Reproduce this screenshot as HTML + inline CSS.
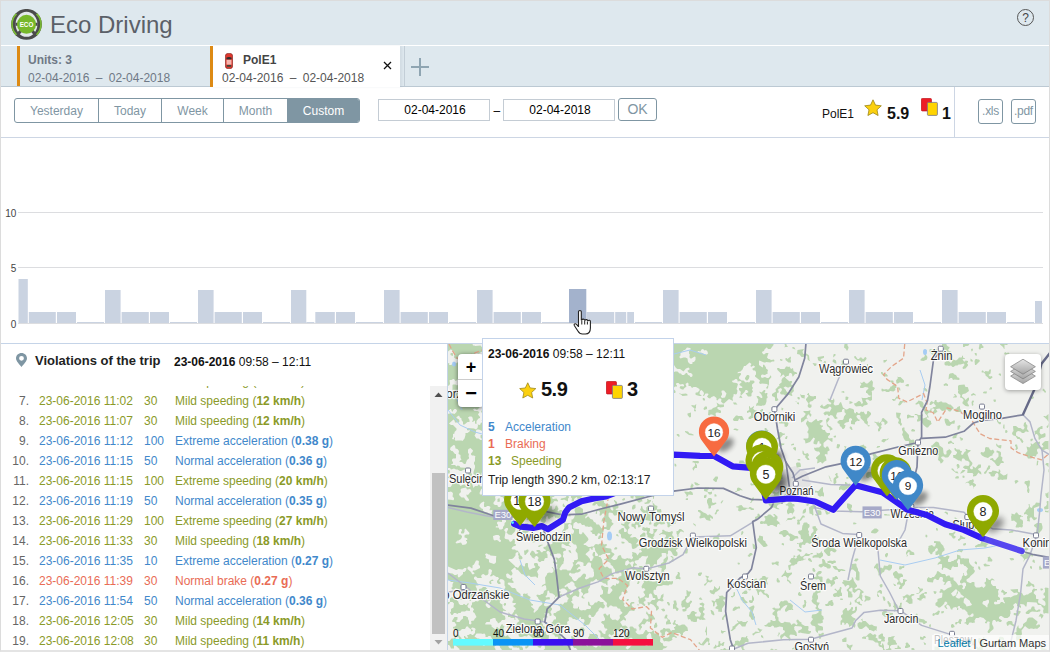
<!DOCTYPE html>
<html lang="en">
<head>
<meta charset="utf-8">
<title>Eco Driving</title>
<style>
*{box-sizing:border-box;margin:0;padding:0}
html,body{width:1050px;height:652px;overflow:hidden;background:#fff}
body{font-family:"Liberation Sans",sans-serif;font-size:12px;color:#000;position:relative}
.abs{position:absolute}
#frame{position:absolute;left:0;top:0;width:1050px;height:652px;border:1px solid #dcdcdc;border-bottom:2px solid #e4e4e4;pointer-events:none;z-index:50}
#header{position:absolute;left:0;top:0;width:1050px;height:45px;background:#dee8ee}
#title{position:absolute;left:50px;top:11px;font-size:24px;line-height:28px;color:#5b6068;white-space:nowrap}
#help{position:absolute;left:1017px;top:9px;width:17px;height:17px;border:1px solid #555;border-radius:50%;font-size:12px;line-height:16.500px;text-align:center;color:#444}
#tabs{position:absolute;left:0;top:46px;width:1050px;height:40px;background:#dee8ee;z-index:2}
#tabline{position:absolute;left:0;top:86px;width:1050px;height:1px;background:#bcc9d3}
.tab{position:absolute;top:0;height:41px;border-left:3px solid #dd8a14;white-space:nowrap}
.tab .l1{position:absolute;top:7px;font-weight:bold;font-size:12px;line-height:14px}
.tab .l2{position:absolute;top:25px;font-size:12px;line-height:14px;word-spacing:3px}
#tab1{left:17px;width:192px;height:40px;color:#6f7986}
#tab2{left:210px;width:190px;background:#fff;color:#555;box-shadow:2px 0 2px rgba(120,140,160,.12)}
#periods{position:absolute;left:14px;top:98px;height:25px;width:346px;border:1px solid #7f96a3;border-radius:3px;overflow:hidden;background:#fff}
#periods div{position:absolute;top:0;height:23px;line-height:25px;text-align:center;color:#7f96a3;border-left:1px solid #7f96a3;font-size:12px}
#periods div:first-child{border-left:0}
#periods .on{background:#7f96a3;color:#fff}
.inp{position:absolute;top:99px;height:22px;border:1px solid #c4ccd4;background:#fff;text-align:center;padding-left:2px;line-height:20px;font-size:12px;color:#000}
.btn{position:absolute;border:1px solid #7f96a3;border-radius:3px;color:#7f96a3;text-align:center;background:#fff}
.hl{position:absolute;height:1px;background:#cdd6e4}
.vr{position:absolute;left:0;width:430px;height:20px;line-height:20px;font-size:12px;white-space:nowrap}
.vr span{position:absolute;top:0}
.vr .n{left:0;width:29px;text-align:right;color:#666}
.vr .d{left:39px}.vr .p{left:144px}.vr .t{left:175px}
.vr.g{color:#8a9a28}.vr.b{color:#4188cb}.vr.r{color:#e96c55}
</style>
</head>
<body>
<div id="header">
  <svg class="abs" style="left:11px;top:9px" width="32" height="32" viewBox="0 0 32 32">
    <circle cx="15.5" cy="15.35" r="15.4" fill="#4b4b4b"/>
    <path d="M25.57 4.92A14.5 14.5 0 0 1 25.57 25.78M5.43 25.78A14.5 14.5 0 0 1 5.43 4.92" fill="none" stroke="#7aba35" stroke-width="1.700"/>
    <ellipse cx="15.5" cy="15.35" rx="10.9" ry="12.5" fill="#e3e8ea"/>
    <path d="M4.5 15.35H26.5M15.5 15.35L23.70 24.78M15.5 15.35L7.30 24.78" stroke="#4b4b4b" stroke-width="3" fill="none"/>
    <circle cx="15.5" cy="15.35" r="9.5" fill="#77b82a"/>
    <text x="15.5" y="17.75" font-size="6.300" font-weight="bold" fill="#fff" text-anchor="middle" font-family="Liberation Sans, sans-serif">ECO</text>
  </svg>
  <div id="title">Eco Driving</div>
  <div id="help">?</div>
</div>
<div class="abs" style="left:0;top:45px;width:1050px;height:1px;background:#fff"></div>
<div id="tabs">
  <div class="tab" id="tab1"><span class="l1" style="left:8px">Units: 3</span><span class="l2" style="left:8px">02-04-2016 – 02-04-2018</span></div>
  <div class="tab" id="tab2">
    <svg class="abs" style="left:12px;top:7px" width="8" height="16" viewBox="0 0 8 16">
      <rect x=".4" y=".4" width="7.200" height="15.200" rx="2.600" fill="#e0382e" stroke="#8c2a24" stroke-width=".7"/>
      <path d="M1.300 4.800Q4 3 6.700 4.800L6.300 6.600H1.700z" fill="#2e2e2e"/>
      <rect x="1.500" y="6.800" width="5" height="4.800" fill="#f6b6ae"/>
      <rect x="1.700" y="12" width="4.600" height="1.800" rx=".6" fill="#3c4a3c"/>
    </svg>
    <span class="l1" style="left:30px;color:#444">PolE1</span><span class="l2" style="left:9px">02-04-2016 – 02-04-2018</span>
    <svg class="abs" style="left:170px;top:15px" width="9" height="9" viewBox="0 0 9 9"><path d="M1 1L8 8M8 1L1 8" stroke="#111" stroke-width="1.300"/></svg>
  </div>
  <div class="abs" style="left:404px;top:0;width:1px;height:40px;background:#c3ced7"></div><svg class="abs" style="left:410px;top:11px" width="20" height="20" viewBox="0 0 20 20"><path d="M10 1V19M1 10H19" stroke="#8fa5b2" stroke-width="2"/></svg>
</div>
<div id="tabline"></div>

<div id="periods">
  <div style="left:0;width:83px">Yesterday</div>
  <div style="left:83px;width:63px">Today</div>
  <div style="left:146px;width:62px">Week</div>
  <div style="left:208px;width:64px">Month</div>
  <div class="on" style="left:272px;width:72px">Custom</div>
</div>
<div class="inp" style="left:378px;width:112px">02-04-2016</div>
<div class="abs" style="left:493.500px;top:104px;font-size:12px;line-height:14px">–</div>
<div class="inp" style="left:503px;width:112px">02-04-2018</div>
<div class="btn" style="left:618px;top:98px;width:39px;height:23px;line-height:21px;font-size:14px">OK</div>

<div class="abs" style="left:822px;top:107px;line-height:14px;font-size:12px;color:#111">PolE1</div>
<svg class="abs" style="left:864px;top:99px" width="18" height="17" viewBox="0 0 18 17"><path d="M9 .8l2.5 5.3 5.8.7-4.3 4 1.1 5.7L9 13.7 3.9 16.5 5 10.8.7 6.800l5.800-.7z" fill="#fbd00f" stroke="#9c8618" stroke-width=".8" stroke-linejoin="round"/></svg>
<div class="abs" style="left:887px;top:105px;font-size:16px;line-height:18px;font-weight:bold;color:#111">5.9</div>
<svg class="abs" style="left:921px;top:98px" width="17" height="18" viewBox="0 0 17 18"><rect x=".4" y=".4" width="10" height="12.500" rx="1" fill="#ee1c25" stroke="#c0151d" stroke-width=".8"/><rect x="6.400" y="4.400" width="10" height="13" rx="1" fill="#ffd400" stroke="#77778a" stroke-width=".8"/></svg>
<div class="abs" style="left:942px;top:105px;font-size:16px;line-height:18px;font-weight:bold;color:#111">1</div>
<div class="abs" style="left:954px;top:87px;width:1px;height:50px;background:#cdd6e4"></div>
<div class="btn" style="left:978px;top:99px;width:25px;height:25px;line-height:22px;font-size:12px;letter-spacing:-.3px">.xls</div>
<div class="btn" style="left:1011px;top:99px;width:25px;height:25px;line-height:22px;font-size:12px;letter-spacing:-.3px">.pdf</div>
<div class="hl" style="left:0;top:137px;width:1050px"></div>

<svg class="abs" style="left:0;top:138px" width="1050" height="205" viewBox="0 138 1050 205">
<g stroke="#dcdde0" stroke-width="1"><path d="M18 212.500H1043M18 267.500H1043M18 323.500H1043"/></g>
<g font-family="Liberation Sans, sans-serif" font-size="10" fill="#444"><text x="16.400" y="216.600" text-anchor="end">10</text><text x="16.400" y="271.600" text-anchor="end">5</text><text x="16.400" y="327.600" text-anchor="end">0</text></g>
<rect x="18.5" y="279" width="9.3" height="44" fill="#cad3e1"/>
<rect x="28.8" y="312" width="26.999999999999996" height="11" fill="#cad3e1"/>
<rect x="57" y="312" width="19" height="11" fill="#cad3e1"/>
<rect x="77" y="322" width="27" height="1" fill="#cad3e1"/>
<rect x="105" y="290" width="15.599999999999994" height="33" fill="#cad3e1"/>
<rect x="121.6" y="312" width="27.200000000000017" height="11" fill="#cad3e1"/>
<rect x="150" y="312" width="19" height="11" fill="#cad3e1"/>
<rect x="170" y="322" width="27" height="1" fill="#cad3e1"/>
<rect x="198" y="290" width="15.599999999999994" height="33" fill="#cad3e1"/>
<rect x="214.6" y="312" width="27.200000000000017" height="11" fill="#cad3e1"/>
<rect x="243" y="312" width="19" height="11" fill="#cad3e1"/>
<rect x="263" y="322" width="27" height="1" fill="#cad3e1"/>
<rect x="291" y="290" width="15.3" height="33" fill="#cad3e1"/>
<rect x="306.3" y="322" width="8" height="1" fill="#cad3e1"/>
<rect x="315.300" y="312" width="19.500" height="11" fill="#cad3e1"/>
<rect x="336" y="312" width="19" height="11" fill="#cad3e1"/>
<rect x="356" y="322" width="27" height="1" fill="#cad3e1"/>
<rect x="384" y="290" width="15.600000000000023" height="33" fill="#cad3e1"/>
<rect x="400.6" y="312" width="27.19999999999999" height="11" fill="#cad3e1"/>
<rect x="429" y="312" width="19" height="11" fill="#cad3e1"/>
<rect x="449" y="322" width="27" height="1" fill="#cad3e1"/>
<rect x="477" y="290" width="15.600000000000023" height="33" fill="#cad3e1"/>
<rect x="493.6" y="312" width="27.199999999999932" height="11" fill="#cad3e1"/>
<rect x="522" y="312" width="19" height="11" fill="#cad3e1"/>
<rect x="542" y="322" width="27" height="1" fill="#cad3e1"/>
<rect x="569" y="289" width="17.299999999999955" height="34" fill="#a3b2cc"/>
<rect x="586.3" y="312" width="27.90000000000009" height="11" fill="#cad3e1"/>
<rect x="615.2" y="312" width="11.0" height="11" fill="#cad3e1"/>
<rect x="627.2" y="312" width="6.7999999999999545" height="11" fill="#cad3e1"/>
<rect x="635" y="322" width="27" height="1" fill="#cad3e1"/>
<rect x="663" y="290" width="15.600000000000023" height="33" fill="#cad3e1"/>
<rect x="679.6" y="312" width="27.199999999999932" height="11" fill="#cad3e1"/>
<rect x="708" y="312" width="19" height="11" fill="#cad3e1"/>
<rect x="728" y="322" width="27" height="1" fill="#cad3e1"/>
<rect x="756" y="290" width="15.600000000000023" height="33" fill="#cad3e1"/>
<rect x="772.6" y="312" width="27.199999999999932" height="11" fill="#cad3e1"/>
<rect x="801" y="312" width="19" height="11" fill="#cad3e1"/>
<rect x="821" y="322" width="27" height="1" fill="#cad3e1"/>
<rect x="849" y="290" width="15.600000000000023" height="33" fill="#cad3e1"/>
<rect x="865.6" y="312" width="27.199999999999932" height="11" fill="#cad3e1"/>
<rect x="894" y="312" width="19" height="11" fill="#cad3e1"/>
<rect x="914" y="322" width="27" height="1" fill="#cad3e1"/>
<rect x="942" y="290" width="15.600000000000023" height="33" fill="#cad3e1"/>
<rect x="958.6" y="312" width="27.199999999999932" height="11" fill="#cad3e1"/>
<rect x="987" y="312" width="19" height="11" fill="#cad3e1"/>
<rect x="1007" y="322" width="27" height="1" fill="#cad3e1"/>
<rect x="1035" y="301" width="7" height="22" fill="#cad3e1"/>
</svg>
<div class="hl" style="left:0;top:343px;width:1050px;background:#c5d4e8"></div>
<svg class="abs" style="left:572px;top:309px;z-index:40" width="22" height="28" viewBox="0 0 22 28"><path d="M6.500 2.500c0-1.300 2.800-1.300 2.800 0v8.500l.6 0c.2-1.300 2.600-1.200 2.700.2l.5.100c.4-1.100 2.500-.9 2.600.4l.4.100c.5-.9 2.300-.6 2.300.7v6.500c0 3-1.500 6-5 6h-3c-2.200 0-3.500-1.200-4.500-3l-3.600-5.500c-.8-1.300 1-2.400 2-1.300l2.200 2.300z" fill="#fff" stroke="#222" stroke-width="1.100" stroke-linejoin="round"/><path d="M9.800 11.500v4M12.700 11.800v3.700M15.400 12.500v3" stroke="#222" stroke-width="1"/></svg>

<div class="abs" style="left:0;top:344px;width:447px;height:308px;background:#fff;overflow:hidden">
<svg class="abs" style="left:16px;top:9px" width="11" height="14" viewBox="0 0 11 14"><path d="M5.500 0C2.400 0 0 2.400 0 5.300c0 3.200 3.600 6.200 5.500 8.700 1.900-2.500 5.500-5.500 5.500-8.700C11 2.400 8.600 0 5.500 0zm0 2.900a2.400 2.400 0 1 1 0 4.800 2.400 2.400 0 0 1 0-4.800z" fill="#7f96a3" fill-rule="evenodd"/></svg>
<div class="abs" style="left:35px;top:9px;font-size:13px;line-height:15px;font-weight:bold;color:#222;white-space:nowrap">Violations of the trip</div>
<div class="abs" style="left:174px;top:11px;font-size:12px;line-height:14px;color:#111;white-space:nowrap"><b>23-06-2016</b> 09:58 – 12:11</div>
<div class="abs" id="rows" style="left:0;top:42px;width:430px;height:266px;overflow:hidden">
<div class="vr g" style="top:-15px"><span class="n">6.</span><span class="d">23-06-2016 10:57</span><span class="p">30</span><span class="t">Mild speeding (<b>12 km/h</b>)</span></div>
<div class="vr g" style="top:5px"><span class="n">7.</span><span class="d">23-06-2016 11:02</span><span class="p">30</span><span class="t">Mild speeding (<b>12 km/h</b>)</span></div>
<div class="vr g" style="top:25px"><span class="n">8.</span><span class="d">23-06-2016 11:07</span><span class="p">30</span><span class="t">Mild speeding (<b>12 km/h</b>)</span></div>
<div class="vr b" style="top:45px"><span class="n">9.</span><span class="d">23-06-2016 11:12</span><span class="p">100</span><span class="t">Extreme acceleration (<b>0.38 g</b>)</span></div>
<div class="vr b" style="top:65px"><span class="n">10.</span><span class="d">23-06-2016 11:15</span><span class="p">50</span><span class="t">Normal acceleration (<b>0.36 g</b>)</span></div>
<div class="vr g" style="top:85px"><span class="n">11.</span><span class="d">23-06-2016 11:15</span><span class="p">100</span><span class="t">Extreme speeding (<b>20 km/h</b>)</span></div>
<div class="vr b" style="top:105px"><span class="n">12.</span><span class="d">23-06-2016 11:19</span><span class="p">50</span><span class="t">Normal acceleration (<b>0.35 g</b>)</span></div>
<div class="vr g" style="top:125px"><span class="n">13.</span><span class="d">23-06-2016 11:29</span><span class="p">100</span><span class="t">Extreme speeding (<b>27 km/h</b>)</span></div>
<div class="vr g" style="top:145px"><span class="n">14.</span><span class="d">23-06-2016 11:33</span><span class="p">30</span><span class="t">Mild speeding (<b>18 km/h</b>)</span></div>
<div class="vr b" style="top:165px"><span class="n">15.</span><span class="d">23-06-2016 11:35</span><span class="p">10</span><span class="t">Extreme acceleration (<b>0.27 g</b>)</span></div>
<div class="vr r" style="top:185px"><span class="n">16.</span><span class="d">23-06-2016 11:39</span><span class="p">30</span><span class="t">Normal brake (<b>0.27 g</b>)</span></div>
<div class="vr b" style="top:205px"><span class="n">17.</span><span class="d">23-06-2016 11:54</span><span class="p">50</span><span class="t">Normal acceleration (<b>0.36 g</b>)</span></div>
<div class="vr g" style="top:225px"><span class="n">18.</span><span class="d">23-06-2016 12:05</span><span class="p">30</span><span class="t">Mild speeding (<b>14 km/h</b>)</span></div>
<div class="vr g" style="top:245px"><span class="n">19.</span><span class="d">23-06-2016 12:08</span><span class="p">30</span><span class="t">Mild speeding (<b>11 km/h</b>)</span></div>
</div>
<div class="abs" style="left:430px;top:42px;width:17px;height:266px;background:#f1f1f1"></div>
<div class="abs" style="left:432px;top:129px;width:13px;height:161px;background:#c1c1c1"></div>
<svg class="abs" style="left:434px;top:48px" width="9" height="6" viewBox="0 0 9 6"><path d="M4.500 0.500L8.500 5H.5z" fill="#505050"/></svg>
<svg class="abs" style="left:434px;top:295px" width="9" height="6" viewBox="0 0 9 6"><path d="M4.500 5.500L8.500 1H.5z" fill="#a3a3a3"/></svg>
</div>
<div class="abs" style="left:447px;top:344px;width:1px;height:308px;background:#c5d4e8"></div>
<!--MAP-START-->
<svg class="abs" style="left:448px;top:344px" width="601" height="307" viewBox="448 344 601 307">
<defs><filter id="sh" x="-50%" y="-50%" width="200%" height="200%"><feGaussianBlur stdDeviation="3"/></filter><g id="pin"><path d="M0 0.300Q-1.200 -0.400 -12.550 -15.900A16 16 0 1 1 12.550 -15.900Q1.200 -0.400 0 0.300z"/></g></defs>
<rect x="448" y="344" width="601" height="307" fill="#f0f1ee"/>
<path d="M783 470l12-4 12 6 4 12-6 12-14 2-10-8-2-12z" fill="#e3e3e3"/>
<path d="M1029.5 648.5l0.5 2l2.5 0l0 -2zM967 650l0 0.5l5.5 0l-1 -1l-1 0l-1.5 -1zM770.5 649l0 1.5l7 0l0 -0.5l-1.5 -1l-2 1l-2 -1.5zM911.5 648l0 2.5l3 0l0 -1.5l-1 -1zM720.5 649l0 1.5l9.5 0l0 -1l-3.5 0l-1.5 -1.5l-1 0l-1 1.5zM792 648.5l0 1l2 -0.5l1 1.5l5 0l0 -0.5l-3 -2l-2.5 -1zM1040.5 646.5l0 2l1.5 2l5 0l0 -1l-2 -1l-1.5 0l-2 -2zM934.5 646.5l0 4l4.5 0l0.5 -0.5l0 -1.5l-1.5 -1.5zM1026 645.5l-1.5 0l-1 1l0 1.5l0.5 0.5l1.5 -0.5zM894.5 648l0.5 1l5.5 0l0.5 -0.5l0 -1l-1 0l-1.5 -2l-1 0l0 2l-0.5 0.5zM537.5 646.5l0 0.5l3 1l1.5 -2.5l-2.5 0zM528.5 645l-1 0l-1 1.5l-1.5 0l0.5 2l1 0l2 -1.5zM819 644.5l-0.5 2l1 1l2.5 0l1 0.5l0 -1l-1.5 -2zM846.5 643.5l0.5 3.5l2.5 2l0.5 1.5l1 0l0 -2.5l1.5 -2l0 -1.5l-3 1zM907.5 642.5l-1 0l-1 1l0.5 1.5l-1 1.5l0 1.5l2 0l3 -1l0 -2l-0.5 0zM923.5 642l1 3l1 0l0.5 -1.5zM724.5 642l-1 0l-2.5 2l-1 -1.5l0.5 -1l-1.5 -0.5l-0.5 0.5l0 3l-1.5 2l-1 -1.5l-1 -0.5l0 1.5l-1.5 1.5l0 1l2 0l1.5 -1.5l2.5 0l1.5 -2l1.5 1l1 0zM523 641l-3 1l0 1l2.5 0l0.5 -0.5zM976 640l-1.5 0l-1 1l-1 -2.5l-2.5 0l-1 1l-3.5 -0.5l0 1.5l-2 1l-3.5 0l-2 -1.5l-2 0l-0.5 0.5l-1.5 0l-0.5 0.5l0 1.5l1 1l2 0l0.5 -0.5l1.5 0.5l1.5 2.5l3.5 -0.5l1 1l5.5 0l1.5 -1l1 0l1.5 -1.5l0 -1.5zM948.5 638l-1 1.5l1 1l1 0l0.5 -0.5l0 -1.5zM809 641l3 -0.5l0.5 -1l-1.5 -1.5l-1.5 0zM631 637.5l1 0.5l1.5 2l1.5 0.5l1 1.5l-2 2.5l-3.5 1.5l0 1l-3 2.5l-2 -1.5l2 -2.5l2 0l0.5 -0.5l-0.5 -4l1 -0.5l0 -0.5l-1 -0.5l-0.5 -1zM846.5 637.5l-1.5 0l-3 2l0.5 2.5l3.5 0l0.5 -0.5zM709.5 639l-1 -1l-2 -0.5l-5 6.5l-0.5 0l-1.5 -2l-1 0.5l0 1l2 1.5l3 0.5l3.5 -4l1 0l0.5 0.5l-0.5 3l1.5 0l0.5 -0.5l0 -1l-1 -1zM984 637l-1 0l0 2l-0.5 0.5l-2.5 -1.5l-1.5 0l-0.5 3.5l0.5 1l1.5 1l0.5 2l-2 2.5l-1.5 -1.5l-1 0.5l0 1l1 1l0 1.5l5.5 0l0.5 -1l-0.5 -2l2 -1.5l0 -1.5l-0.5 -0.5l0.5 -2l-1.5 -2l1.5 -1l0 -1.5zM994.5 642.5l0 1.5l1 1.5l1 0l1 -2l0.5 0.5l0 1l1 1.5l0 4l11 0l-1.5 -1.5l-1.5 0l-0.5 0.5l-1 -0.5l0 -1l-1.5 -2l0 -1l1.5 -1l0.5 -1l-5 0l-3 1l-0.5 -0.5l3 -3.5l1 -0.5l2.5 0.5l0 -1.5l-1 -1.5l-1.5 0l-0.5 -0.5l-2 1l0 2.5l-1.5 1l-1.5 0zM925 636l-1.5 0l-0.5 1.5l-2.5 -1l-0.5 0.5l0 1.5l0.5 1l3 0.5l0 -1l1 -1l1.5 0zM747.5 636l-1 0l-1 1.5l-3.5 -0.5l-1 1l0 1.5l-1.5 2l-1.5 -1l-3 0.5l0 2.5l-2 1.5l0 2.5l2 -0.5l0.5 -1.5l1.5 -0.5l2 2l2 0l1.5 3.5l3 0l-2 -2l0 -2.5l1.5 -3.5l1 -0.5l2.5 0l0 -2.5l-1.5 -2zM761.5 635l-0.5 0.5l0 1.5l2.5 1.5l-0.5 -2.5zM474.5 636.5l2 -3l5 0l0.5 0.5l2.5 -0.5l1 1.5l0 2l2 0l1 -1l2 0l2 3.5l-3.5 1l-1 1l0 1l-1 1l-1.5 0l-0.5 2l-1.5 0.5l-1 -1l1 -2l-0.5 -4l-2.5 0.5l-1.5 -1l-1.5 0zM589.5 633.5l0 2l-1.5 2.5l0.5 1l2 0l0.5 0.5l0 2l0.5 0.5l1 0l1.5 -2.5l3.5 0l0.5 -4l-1.5 -1.5l-6 0zM862 637.5l0 1l4 0.5l0 -2l1.5 -0.5l1 1l0 2.5l4.5 0.5l2.5 2l2 0l1 1l0 2l1.5 1.5l1.5 0l1.5 1.5l0 1.5l-0.5 0.5l8.5 0l0.5 -1.5l-1.5 -1l0 -1.5l1.5 -1.5l5.5 -0.5l0 -1l-1 -1l-0.5 -2l-2 -1l0 -1.5l1.5 -2l-3.5 0.5l-0.5 0.5l-2.5 0l-0.5 1.5l0 2l0.5 0.5l-1 2l0 1.5l1.5 1l0 2.5l-1.5 1l-1 0l-1 1l-0.5 0l-1 -1.5l0 -2.5l-1 -2.5l-1 0l0 1.5l-0.5 0.5l-1.5 -1l1 -1l0 -1.5l1 -1l0.5 0.5l2 0l0.5 -1l-0.5 -1l0.5 -2l-2 -1.5l0 -2l-0.5 -0.5l-1 0l-3 2l0 3l2.5 0.5l0.5 0.5l-0.5 1.5l-2.5 0l-1 -1l0 -1.5l-2 -1l1 -2l-1.5 -1.5l-2 1l-2.5 -2l-1.5 0.5l-3 3l-2.5 0zM649.5 632.5l1.5 1.5l0.5 3.5l1 1.5l-2.5 3l1 2.5l-1 1l-1.5 -0.5l-1.5 1l-1 0l-1 -1l0 -1.5l2 -2l1.5 0l-1.5 -2.5l-0.5 -3zM779.5 632.5l-1 0l0 1.5l-1 1.5l0.5 1l0.5 0l0 -1.5l1.5 -1zM721 630l0 2.5l1 1l1 0l1 -1.5l1.5 0l0 -1l-3 0zM762.5 629.5l-1.5 0l-3 -1.5l-0.5 1l2 2.5l-0.5 0.5l-3.5 -0.5l-1.5 1.5l-1.5 0.5l0 1.5l1 0.5l2 -2l4.5 -1zM579 631.5l2 0l0.5 -0.5l3.5 -0.5l-1.5 -3l-2.5 0l-2 2.5zM706.5 626.5l-1.5 5.5l1 0.5l0 2l0.5 1l0.5 0l0 -9zM525 627l0.5 -0.5l4 0.5l0.5 -1.5l0.5 1l2 0l4 4.5l-1.5 2l-1 0l-1 -3l-1.5 -0.5l-0.5 0.5l0.5 1.5l-1.5 1.5l-3.5 -0.5l-2.5 -3l1 -1.5zM507.5 625.5l-0.5 0.5l0.5 1.5l1.5 0.5l1.5 1.5l0.5 1.5l1.5 0l0 -2.5l-3 -1l0 -2.5zM953 624l-1 0l-1 1l0 2l1 1l2.5 -1l0 -1zM930.5 624l-0.5 0l-1 1.5l0.5 1.5l1 0l0.5 -1zM656.5 622.5l-1.5 0.5l0 1l-1 1.5l0 2.5l2.5 -0.5l1 -1.5zM1006.5 622.5l0 1.5l1 2l0.5 0l1 -1.5l1.5 0l3 2l1 -0.5l0 -1l-2 -1.5l0 -1.5l-1 -1l-3 0zM748 621l-1 0l-1 1l-3 0l-1.5 -1l-2.5 0.5l-2 -1.5l0 1l1.5 1.5l-2.5 1.5l-2 2l-1.5 0.5l0 2l-2 2.5l1.5 0l3.5 -2.5l0 -1l3.5 -3.5l1 0l2 2.5l3.5 0l0.5 -2zM687.5 627.5l-3 -3l-2.5 0l-2 1l-1.5 0l-1 -1.5l-1.5 0l-1 -1.5l1 -2l-1.5 -0.5l-1 2.5l-1 1l1 1.5l1.5 -0.5l1 1l-1 1.5l-1 0l0 1l1 1l-0.5 1l-2 0l-1.5 1l-1.5 -2.5l-3 0l-0.5 0.5l-1.5 -1l-1 0l-1 1.5l-2 0.5l-0.5 2l1.5 1l0 2l1 1.5l2.5 -2l0 -2l1 -1.5l2.5 1.5l1 3.5l-1.5 1.5l-5 0.5l-0.5 1l1.5 2.5l1.5 -0.5l3.5 0.5l2.5 -1l1 -1l-0.5 -1.5l1 -1l1.5 0l1.5 1l1 -0.5l-0.5 -1l-2 -1l0 -1l1.5 -1.5l3.5 0l1.5 1.5l-0.5 1.5l1 0l1.5 -1.5l0 -1.5l2.5 -2l2.5 0zM962 620l-1 -1l-1.5 0l-1.5 3l-2 0l-1 1l0.5 1.5l1 0l1.5 -2l2 1.5l1 0l0 -2zM857.5 623.5l0 2.5l1.5 2.5l1 0.5l2 0l4 -3l3 3l0 1l1.5 0l3.5 1.5l1 -1.5l2 1l-0.5 -1l0.5 -3.5l-3 -0.5l-2 -1.5l-2.5 0.5l-4 -4l-2.5 0l-0.5 -0.5l0 -2l-1.5 1l1.5 2l-1 1l-2 -0.5zM1037.5 621.5l-5 -4l-3.5 0l-1.5 1l-1 3l-3.5 2.5l0 2l-2 2.5l-1.5 0l-1 -1l0 -2l-0.5 0l-1.5 3l0 3.5l-2.5 1l0 0.5l1.5 0l1 1.5l0 1.5l-0.5 0.5l0 1.5l0.5 0.5l-0.5 1.5l1.5 0l1.5 -1l1 0l1.5 -2l-0.5 -2.5l1 -0.5l-0.5 -4l3.5 -4.5l3 2.5l1.5 0.5l1 -0.5l2 0l0.5 0.5l3 -0.5l1 0.5l3 -2.5l0 -1.5l-0.5 -0.5l-1.5 0l-1 1l-1 -0.5l1.5 -2.5zM666 614.5l-1.5 2.5l0 1.5l2.5 0l0.5 0.5l0 1.5l-1.5 1.5l0 2.5l5 -0.5l0 -1l-1 -1.5l0 -1.5l-1.5 -0.5l-1.5 -2l0.5 -2.5zM726 614l-1 0l-3 4l0 1.5l0.5 0.5l1 0l0.5 -2.5l2 -1.5zM1040.5 613.5l-2 3l2 0l0.5 0.5l0 1.5l0.5 0l1.5 -1.5l0.5 -2zM913 616l0 1.5l3 2.5l0.5 2l6 0.5l1 1.5l1 0l2.5 -1.5l0 -1l-1.5 -0.5l-1.5 -1.5l-5 -1l-1.5 -2l0 -2.5l-1 -0.5l-1.5 2l-1.5 0zM652.5 614.5l-3.5 -0.5l-1 -0.5l-1 -2l-0.5 0l-0.5 2l1.5 1.5l1 2l0 1.5l-1 1l-1.5 0l-1 -1l-1.5 0l-2 3.5l-3 3l0 1l1 1.5l0 3l1 -0.5l0 -1l1.5 -1.5l0 -1l-1 -1l1 -1.5l2.5 0.5l2.5 -3.5l2 1l2.5 -1l1.5 -1.5l2 0l0 -1zM944 611.5l-0.5 -0.5l-2.5 0.5l0.5 2l2 -0.5zM1016 610.5l1 2l-1 1l-0.5 -0.5l-1.5 0l-0.5 1l0.5 1l4.5 1l0 -1l2 -2.5l0 -1.5zM940 611l-2 -0.5l-0.5 1l-3 2l-1 -0.5l-1 1l0 1.5l1.5 0.5l1 -1.5l3 0.5l1 -1zM710.5 610l1 4l2.5 1.5l0.5 -1l-1 -3l-2 -1.5zM882 612.5l0 2l3 2.5l1 -0.5l3 0.5l1.5 -1.5l2 1l0.5 -3.5l-6 -0.5l-0.5 -0.5l1 -3l-2.5 0l-1 0.5l0 1zM661 609l2 2.5l2 -0.5l0 -1l-1 -1.5zM1025.5 613l1 1l2.5 0l1 -1.5l2 -1l6 0.5l0.5 -0.5l1.5 0l0.5 -1.5l-0.5 -0.5l-1.5 0l-1.5 1l-1 0l-1.5 -2l0 -1.5l-0.5 -0.5l-2 0l-1.5 3l-1.5 0l-3 2.5zM856.5 606.5l-1.5 0.5l0 3l-1.5 1l-1.5 -0.5l1 -1.5l0 -1.5l-0.5 -0.5l-1 0l-1 2l-2.5 2l-1 -1l0 -1.5l-0.5 -0.5l-1 0l-3 3l0.5 3l-2 1.5l0 1.5l1.5 2l-2 2l0 3.5l0.5 0.5l1 -0.5l0 -1.5l0.5 -0.5l1 0l1 1l0 1.5l0.5 0l1.5 -2l1 0l1.5 2l0 2l2.5 -1.5l1 0l1.5 2l1 0l0.5 -2.5l-2 -4l2 -1l0 -1.5l-2.5 -1l-2 -2l1.5 -1.5l3 -1.5l1.5 -2.5l0 -3zM732.5 610.5l1.5 0.5l4 -2.5l2 0l0 -1.5l-0.5 -0.5l-1.5 0l-0.5 0.5l-2.5 -0.5l-2 2zM754 605.5l-1 0l-4 2l0 1l1.5 1.5l0 1l-1 1l-0.5 4l2 2l0 1l1.5 1l1.5 -0.5l1 -1.5l0 -1l-1 -1.5l0 -1.5l-1.5 -1.5l2 -5.5zM505.5 603l-1 0l-1 1.5l1 1.5l1.5 -1l0 -1.5zM901.5 602.5l-1.5 0.5l0 2l-1.5 2l0.5 2.5l1 0l1.5 -1.5l0 -3.5l0.5 -0.5zM704.5 604l-2 -1.5l-3 1l0.5 1.5l1 0l1.5 1l-0.5 1l-2 0l-1.5 1.5l0.5 2.5l2 2.5l-1 3l-4 0l-1 -1l0 -1.5l1.5 -0.5l0.5 -1l-2 -0.5l-1 -1l-1.5 0l-1.5 1l-0.5 1.5l-1.5 1.5l-2 0l1 4.5l2 -0.5l1.5 2.5l1.5 0l0.5 0.5l2.5 0l1 -0.5l0 -2.5l0.5 -0.5l1 0l1.5 1.5l1.5 -0.5l1 0.5l3 -0.5l0 -0.5l-2 -1.5l0 -1.5l1 -1l0 -1.5l-1.5 -1l0 -1.5l1.5 -1l0 -1.5l-1 -1.5zM894 602l-0.5 0.5l0.5 3l-1 0.5l0 0.5l1.5 1.5l-0.5 3.5l1 0l1 -2.5l1.5 -1.5l0 -2.5l-2.5 -1.5l0 -1.5zM667 602l0 1l1.5 2.5l1 0l0.5 -0.5l-0.5 -2l-1 -1zM851 601.5l-0.5 0l-1 3.5l1 0l1 -1zM887.5 601l0 2l1 1.5l0.5 2l1 0.5l1 -1l-0.5 -3l-0.5 0l-1.5 -2zM764.5 625l0 1l1 0.5l2.5 0l0.5 0.5l2 0l2 -1.5l1.5 1l0 1l2.5 0l3 -1l3 0.5l0.5 0.5l0 2.5l1.5 0.5l0.5 1.5l-3 2.5l-1 0l-1 2l1 3.5l0.5 0l0.5 -2l2.5 -2.5l4.5 3.5l0 1.5l1 0l0.5 -2.5l-1 -1l0 -1.5l1 -1l4 0.5l1 1l1.5 0l-0.5 -3.5l-2.5 -3.5l0.5 -0.5l-0.5 -1l1 -1.5l6 0.5l1 1l0 1l-1 1l-2.5 1l-0.5 2l1 0.5l2 -0.5l0.5 0.5l7 1l1.5 -0.5l1 -1.5l0 -1l-2 0l-1 -1l0.5 -1.5l0 -2l-0.5 -0.5l-3 0l-3.5 -2l0 -1.5l-2 -1l-1.5 -2l-1.5 0.5l0 2l1 1l0 1l-1 1l-0.5 0l-1 -1.5l-2 0l-1.5 1.5l-1.5 -2.5l-4.5 -0.5l-0.5 -0.5l-2 1.5l-2 0l-2.5 -2.5l0 -3l-1.5 -1.5l0.5 -0.5l-0.5 -3.5l1.5 -1.5l2 0l0.5 -1.5l2.5 -2.5l2.5 -1.5l1.5 0.5l-2.5 4l0 1.5l1 1l3 -2l2 0l0.5 -0.5l0.5 0.5l1.5 0l-1 -1.5l0.5 -3l-2 -2l-3 -1l-0.5 -1.5l-1 -0.5l-2 0l-1.5 1l-2 -0.5l-2 3l0 1l1 1.5l0 1l-1 1l-3.5 0l-1 -1l-2 0.5l0 1l2.5 1.5l-2.5 2.5l0 1.5l2.5 1.5l0 2l1 2l-1 1l-2 0l-1.5 -1l-1 0l0 2l-0.5 0.5l-1.5 0l-2.5 2.5zM674 600.5l-0.5 0.5l0.5 2.5l-1 1l0 4l0.5 0.5l1.5 -0.5l1 1l0 1l1.5 0.5l1 -1.5l0 -1l-2 -1.5l0 -2l0.5 -0.5l-1 -4zM988 599.5l1 1l0 2l-1.5 2.5l0 2l-0.5 0.5l-2 -2l-2.5 -1.5l0 -1.5l1 -1.5l1.5 0zM832.5 600l-1 0l-3 1.5l-0.5 1.5l-1 1l-1.5 0l-0.5 1l1 1l2.5 0l1.5 -1l1 1l1.5 0l1 -1l0 -2l-1 -1.5zM805.5 600l-1.5 0l0.5 4l-2 1.5l0.5 2.5l1 0l2 -2l0 -2.5l0.5 -1zM627 599l-0.5 2l1.5 0l1 -1.5l-0.5 -0.5zM840 599l0.5 1l2.5 0l-0.5 -1.5l-2 0zM965.5 597.5l4.5 3.5l0 1l2 2.5l-1 1l-4.5 1l-0.5 -1.5l-2.5 -2.5l0.5 -3.5zM491 597.5l0.5 0.5l-1 1.5l0.5 1.5l-2 2.5l0 1l1.5 1.5l0 1l-1 1l-1.5 0l-2 -2l-0.5 -1.5l3.5 -4l0.5 -2.5zM699 598.5l0.5 1l3 0.5l-1.5 -2.5l-1 0zM741 597l-0.5 2l0.5 1l1.5 1l0 1l1 1l1.5 0.5l2.5 -0.5l0 -1l-2.5 -2l-1.5 -3zM459 597.5l1.5 2l1.5 0l-1 -2l-1 -0.5zM448 602l0 2.5l1.5 -1l0.5 -1.5l2.5 0l1.5 1.5l-0.5 4l-2.5 1.5l0 2.5l-1 1l1.5 2.5l1 0l1.5 -2l1.5 0l2 1l1 -1l2 0l1 -1.5l3.5 0l1.5 -1l3 0.5l0.5 -0.5l0 -2l-1.5 -0.5l-1 -1.5l0 -1l1 -1l0 -1.5l-0.5 0l-1.5 2l-1 0l-1 -1l-1 0l-0.5 1l-2.5 0l-1.5 -1l-1 -3l-0.5 0l-1 -1.5l-2 0l-1.5 -2l-1 -0.5l-2 1.5l0 3l-0.5 0.5zM882.5 596.5l1 4l1 0.5l1 -1l-0.5 -2.5l-1 -1zM864.5 596l1 3l-1.5 2.5l1.5 0l1 -1l2.5 0l1.5 -1l0 -2l-0.5 -0.5l-4.5 -1.5zM752.5 595.5l-0.5 0l0 4.5l-0.5 0.5l-1.5 -0.5l-1 0.5l0 1.5l1.5 1l1.5 0l1 -1l0 -1l1 -0.5l0 -2.5zM718 595l1.5 2l-0.5 1.5l-3 0.5l-1 2.5l-2 -1l-1.5 0l0 0.5l1.5 2l0 3l0.5 0.5l1 -0.5l0.5 -3.5l0.5 -0.5l1 0.5l0 1.5l1 1.5l-2 2l0 1l3 1l-0.5 2l3.5 0.5l0.5 -0.5l0 -3l3 -4l0 -2l-2 -2.5l0.5 -0.5l2 0l0.5 -2.5l-2 0l-1.5 -1.5l-3 0.5zM914.5 594.5l-0.5 -0.5l-2.5 0l-1.5 1.5l-1 0l-1 -1l-1.5 0l-2 1.5l-2 0.5l1 2l-0.5 1.5l1 0l0.5 -1.5l1 -1l1 0l1 1.5l-2 2.5l1.5 0.5l2.5 2l3 -0.5l0 -4l-1 -1.5l0 -1.5l1.5 -1l1 0zM927 592.5l-0.5 -0.5l-1.5 0l-1 1l-2 0.5l-2.5 2l0 2l-0.5 0.5l-1.5 0l-0.5 1l2.5 1.5l2 0l0 -1l2 -1.5l2 0.5l0 -2.5l-1.5 -1l0 -1l0.5 -0.5l2 0.5zM799 592l-1 1.5l0 1.5l1.5 1l1.5 0l0.5 -0.5l0 -1.5l-1 -0.5l-0.5 -1.5zM734.5 592l-1 0.5l0 2.5l-1 1l-1.5 0l0 1l1.5 0.5l2.5 -2l0 -3zM958.5 591l2 2l0 1l3.5 2.5l-1 1.5l-0.5 -0.5l-2 0l-1 1l-1.5 0l-2.5 -1.5l2.5 -4l0 -1.5zM933.5 591l0.5 2.5l1.5 0.5l1 -1.5l0 -1zM747.5 592l-1 -1.5l-1.5 0l-3 2.5l0 1l1.5 -0.5l0.5 0.5l2.5 0l1 -1zM881 590l-1.5 0l-2 1.5l-0.5 4l1 1.5l1 0l0 -1l-1.5 -2.5l1 -1l1 0l1.5 1.5l1 -0.5l0 -2zM687 590l-0.5 0l0 4l0.5 1.5l-2 1l0 2l-3.5 3l0 2l-0.5 0.5l1 3.5l2.5 -0.5l1 1l-1 1l-2 0l0 2l0.5 0.5l2 0l1.5 -1l0 -1.5l3.5 -2.5l0 -2l2 -2.5l0 -1l-1.5 -0.5l-1.5 2l-2 0.5l-1.5 -2l1.5 -3l2.5 -2l0.5 -2l1 -1l0 -1.5l-2.5 0zM1002.5 589.5l-1.5 2l0.5 1l1 0l1 1l0 1.5l1 0l2.5 -2l0 -1l-1.5 0zM956 589l1.5 1.5l0 1l-1 1.5l0 1.5l-1 1l-2.5 1l-2 -3zM564.5 588.5l3 2.5l-1.5 2.5l0 1l1 2.5l1.5 1l0 1l-1 1l0 1.5l-1 1l-2 0l-1.5 2l-1 0l-1 -1l-1.5 1l-1.5 0l0 0.5l2 1.5l0.5 3l-1 1l-2.5 1l-1.5 1.5l-1.5 0l-0.5 0.5l0 1.5l2.5 2l0 2l-0.5 0.5l-1.5 0l-1.5 2.5l-2 1.5l0.5 1.5l-0.5 6l1 1l-0.5 2l3 0.5l1.5 2.5l1.5 -0.5l1 0.5l0 2.5l-2 2.5l-1.5 0l-2 3l-1.5 -1l-0.5 -2l-2 -1.5l0.5 -5l-0.5 -0.5l-1.5 0l-1.5 -1.5l0.5 -0.5l0 -2l-0.5 0l-3 3.5l-1 0.5l-1.5 -0.5l0 -1l2 -1.5l-0.5 -2.5l1 -1l2 0l0.5 -0.5l0 -1.5l-1 0l-1 -1l0 -1l-1 -1.5l0 -1l1.5 -1.5l-0.5 -2l1 -1l3.5 0l0 -1l-2.5 -2l-0.5 -1l0.5 -0.5l1.5 0.5l2 -0.5l1 1l0 1.5l0.5 0.5l1.5 -0.5l0 -1.5l-1 -1.5l0 -1l1.5 -2l0 -1l-1 -1l0 -1.5l-0.5 -0.5l-1.5 0l-3 1l-2 -1l0 -1.5l1 -1l0 -2l1.5 -1.5l3 0l0.5 -0.5l-0.5 -2l-3.5 0.5l-0.5 -1l1.5 -1.5l0.5 -4l1 -0.5l1 1.5l0 1l3 0.5l2.5 2l0 1.5l-1 0.5l0 1.5l0.5 0l0 -1.5l1.5 -1l1 0l1.5 1.5l2.5 0l0 -1.5l1 -2l-0.5 -0.5l-1 0.5l-1 -0.5l1 -1.5l0 -1l-0.5 -0.5l-1.5 0.5l-0.5 -1.5l0.5 -0.5l2 0l1.5 -1zM1040.5 588.5l0 1.5l0.5 0.5l1 0l1 -1l0 -0.5l-1 -0.5zM755.5 589l1.5 2.5l1 3.5l1 0l0 -2.5l1 -1l1 0l2.5 3l2 0.5l2.5 3l1 0l0 -2.5l-2 -2l-2 0l-1 -1.5l1 -2l-3 0l-1 -1l-2.5 0.5l-1.5 -1zM923 589l-0.5 -0.5l-2.5 0l-1 -1.5l-1 0l0 1l1.5 1.5l0 2.5l-1 1l-2 0l0 1l2.5 -0.5l4 -3.5zM841 587l-1 0l-0.5 2l-1.5 1.5l-1 0l-1.5 -2l-1 0.5l0 0.5l2.5 2l0 1l-3 1l-1 1l0 1l1 1.5l1.5 0l0.5 -0.5l3 0.5l1 -1l2 0l0 -2.5l-1 -1.5l0 -2.5l0.5 -0.5l0 -1.5zM452 621l0.5 1l2 0l2 3l-1.5 1.5l-2 0.5l0 1.5l1.5 0l3.5 2.5l2 0l2 -2l3 0l1.5 -2.5l1.5 0l0.5 1l2.5 2l0 2l2 -1l0 -0.5l-2 -1l1 -1.5l2.5 0.5l1 1l0 1l-0.5 0.5l0 2.5l-2 2l-1 0l-1 -1l-1 0l-1.5 1l-1.5 0l1 2.5l-0.5 0.5l-1.5 -0.5l-1 -1.5l-1 0l0 1.5l1 1l0 1l-2 1.5l-0.5 1.5l-2 0.5l-2 2l-0.5 0l-2 -2.5l0.5 -1.5l-1 -3l0.5 -1l1.5 -1l1 1l1 2.5l2 0.5l0 -2l-2 -2l-0.5 -1.5l-3 0.5l-1 1l0 1l-1 1.5l-2.5 0l-2 2.5l-1.5 0l0 4l1 0l1 1l1 2.5l3 0l0 -3l1 -0.5l4.5 4l0 1.5l36 0l0 -1.5l-1 -1.5l0 -1l2.5 -2l1 0l2 2l0 1l1.5 1.5l0.5 1.5l10 0l0 -2l-2 0l-1.5 -1.5l0 -1.5l1 -1l2 0.5l2 2.5l3.5 0l0.5 0.5l1.5 -0.5l1 3l3 0l0 -2l-1 -2l-1.5 0l-1.5 -1.5l-3 0.5l-1 -1l0.5 -3.5l-2.5 0.5l0 0.5l-2.5 2l-1 -0.5l-1 -1.5l0 -1.5l1 -0.5l1 1.5l1.5 0l0 -1.5l-0.5 -1l-3 -2.5l-0.5 -1.5l-2.5 1.5l-3 -2.5l1.5 -2.5l-0.5 -3l1 -2l-2 -1.5l0 -1l-0.5 0l-1.5 2l-1 3l-0.5 0l-1.5 -2l-1 0l0 1l-1 1.5l-4 -3l0 -1.5l-1 -0.5l-5 0l-0.5 -0.5l1.5 -2l3 0l0.5 -0.5l0 -2l3.5 -1.5l1.5 0l0.5 0.5l0.5 2l1.5 1.5l0.5 1.5l2.5 -1.5l1.5 -2l2.5 0l1 -1l-0.5 -3l-2 -1l-1 -1l0 -1l1.5 -2.5l1 0.5l1.5 0l0 -0.5l-2.5 -1.5l-1 -1.5l0 -3l-2 -1l-1 -1.5l1 -1.5l0 -1.5l-1 -1.5l0.5 -1.5l-1.5 0l-1 -1l0 -2l1 -1l-0.5 -3l-2.5 0l-1 1l0 0.5l1.5 1l-1 1.5l-2.5 -2l-2.5 0.5l-4.5 -4.5l-2.5 0l-1.5 1.5l-2.5 0.5l0 2.5l2.5 3l0.5 2.5l-0.5 0.5l0 1.5l-0.5 0.5l-1.5 0l-1.5 2l-2.5 -0.5l-1 1l-2.5 0.5l0 2l-1 1.5l0 1.5l1.5 0l1.5 2l-1 1.5l0 1l1.5 1l2 4l-2 2l-0.5 1.5l-3 0.5l0.5 2.5l-1 1l-1.5 -0.5l0 -3l-1 -2l0 -1.5l-2.5 -1.5l-2 0l-0.5 0.5l0 2l-2 1.5l-1.5 2l-2.5 0l-1 -1l1.5 -1.5l0 -2.5l-3 0zM747.5 586l0 2l1 2l1.5 0.5l1 -1l0 -1.5zM720 586l-0.5 0l-0.5 1.5l-1.5 1.5l-3.5 -3l0 2.5l-1.5 2l-2.5 -0.5l-0.5 1.5l1.5 2l3 1l1.5 -2.5l1.5 -0.5l3 -2.5zM881.5 584l-1.5 0.5l-0.5 1l1 2l1 0l1 -1l0 -2zM893 583.5l1.5 2.5l1.5 0l-0.5 -1.5zM572.5 581.5l2 2l0 2l2 2l0 1l-3.5 3l0 1.5l-2.5 2l-1 -1l0 -1l1.5 -1.5l0.5 -1.5l-2.5 -1l-1.5 -2.5l-1 0l-1.5 1l-0.5 -1.5l4 -3l1 0l1.5 -1.5zM1028 581l0 2l-0.5 1l-1.5 1l0 1l0.5 0.5l3.5 0l1 -1l1 0l0.5 1l1.5 1l0.5 -1l-0.5 -2l-2.5 -1l-2.5 -2.5zM493 579.5l-2 0.5l-2 2l1 2l1.5 0l-0.5 -2.5l0.5 -0.5l2 0zM756.5 578.5l-3.5 1l-0.5 1l0 3.5l2 1.5l2 0l1 -0.5l0.5 -1l0 -1.5l-1.5 -1.5l0.5 -0.5l0 -1.5zM777 578l-0.5 3l1 1.5l2 0l0.5 -1.5l-1.5 -1.5l0 -1zM843 580l0.5 1.5l-1 0.5l-0.5 1l2 1.5l1 2l1 0l0 -0.5l1.5 -1l1 0l1 1l-0.5 1.5l-2.5 2.5l1.5 2l0 5l0.5 0.5l3.5 0l0.5 -0.5l0 -2.5l-1 -1l0 -2l-1.5 0l-1 -1l0 -1l2.5 -2l1 0.5l0 3.5l2 1.5l3.5 -3l1.5 0l1 1l-1.5 5.5l-4.5 4l0.5 2l1.5 0l3 2.5l2.5 0.5l0 -1l-2 -1l0 -2l-3 0.5l-0.5 -1.5l0.5 -1l2 -1.5l1 0.5l2 2.5l1 0l-1 -2l0.5 -3.5l-1 -1.5l1 -1l1 0l0 -1.5l-4 -3l-2 0l-1.5 1l-1.5 -0.5l0 -0.5l2.5 -2l0 -1l-3 -4.5l-1 -3.5l-1.5 0l0.5 1.5l-2.5 2zM838 578l-1.5 -2l-1 0l-1.5 1.5l-0.5 -0.5l-1 0.5l0 2l-1 1l-1.5 -0.5l-1 -1.5l-1.5 0l-1 1l-0.5 2.5l-1 1.5l4 0l0.5 -0.5l1.5 1.5l-0.5 2l1.5 0l0.5 -1l2.5 -2l0 -1.5l-1 -1.5l2.5 -1.5l1.5 0zM762.5 576l-0.5 1.5l-2.5 1.5l0 2l1 1l1 0l1.5 -2l1 0l1 3.5l3 1l-1 -3l0 -2l1.5 -2l-2 0l-1.5 -1.5zM705.5 575.5l0 1l1.5 1.5l-0.5 1l0 2l0.5 0.5l-0.5 1l-2.5 2l0 1l1.5 0l2 -3l1 -0.5l2 0.5l2 -1.5l-0.5 -1.5l-1.5 1l-1.5 0l-1.5 -2l1.5 -1.5l0 -0.5zM702 572.5l-2.5 0l-1.5 1l0 1.5l1 1l1.5 0l1.5 -2.5zM677.5 572l0.5 1.5l-2.5 3.5l0.5 1.5l-0.5 1l1 -0.5l2.5 0l1 0.5l0.5 -0.5l0 -1.5l-1 -1l0.5 -3l-1 -1.5zM895.5 571l-2.5 2l0 2l1 1l0.5 2l2 0.5l2 2l0 1l-1.5 1.5l0 1.5l2.5 0l1 1l-1.5 2.5l0 1l2 0l1 -0.5l0.5 -2l1 -0.5l1.5 -2l0 -2l2 -1.5l0 -0.5l-3.5 -1l-0.5 0.5l0 3l-1.5 1l-2 -2.5l0 -2.5l1.5 -1.5l1.5 0l0.5 -0.5l0 -1.5l-1.5 -1.5l-3 0l-2 -2.5zM819 571l-1 0.5l-2 2.5l0.5 2.5l-3.5 1l0 1l1 0.5l1.5 0l0.5 0.5l2.5 -0.5l1.5 1.5l0 1.5l-1 1l-2 -0.5l-0.5 0.5l0 1.5l-2 1l-2 2.5l0.5 1l2.5 1.5l0 1l-1 1l-1 0l-1.5 4.5l0.5 2l-1 1.5l0.5 1.5l2 2l2 1l0.5 1.5l-1 1l0 1l2 1.5l1.5 2l-3 2l-3.5 0.5l-0.5 0.5l-0.5 2.5l1.5 1.5l-2.5 3.5l0 1l1.5 2l2.5 0.5l1 1l0 3.5l1 1.5l2 1.5l0.5 5l1.5 0.5l0.5 -1.5l2.5 -2.5l0.5 -1.5l-1 -1l-2.5 1.5l-2 -0.5l-0.5 -0.5l0 -2l0.5 -0.5l4 0l0.5 -0.5l0 -2.5l-0.5 -1l-3.5 -1l-1.5 -1.5l0.5 -0.5l2.5 0l2.5 -1l-0.5 -2.5l1.5 -1l-0.5 -1l0 -1.5l-2 -1.5l0 -5.5l-0.5 -0.5l-1.5 0l-1.5 -1.5l0 -1.5l1.5 -2.5l0 -1l-2 0l-1 -1.5l1.5 -2.5l0 -2.5l-1 -2l1 -1l2.5 -0.5l0 -1l1 -1l2 -0.5l0 -0.5l-2.5 -2l0 -2.5l1.5 -3l0 -5l-1 -0.5l-2.5 0l-1 -1l0.5 -1l2 -0.5l1.5 -2l-1 -1zM785 570.5l-0.5 2l-3 3.5l0 1l1 0l1 -1l2 0l2 2l-0.5 3l1.5 0.5l1.5 2l1.5 0l-1.5 -2.5l-2 -1.5l0 -1l1 -2l3 -2.5l0 -1.5l-4.5 0.5l-1.5 -1l0 -1.5zM813 568l-0.5 0.5l0 2l0.5 1l2 0.5l0.5 -1.5l-1.5 -2.5zM978 566.5l0.5 2.5l1.5 1l0.5 -0.5l-0.5 -2.5l-0.5 -0.5zM1030.5 566l-0.5 0.5l0 1.5l1.5 1l0.5 -0.5l0 -2zM832.5 566l1 2l1.5 1.5l2.5 0.5l1 2l1.5 0l0 -0.5l1.5 -1l1 0.5l3 0l-0.5 -1l-3 -1l-1.5 0l-0.5 0.5l-0.5 -0.5l-1.5 0l-2 -3zM1040.5 565.5l-0.5 0l-1 1.5l0.5 3l3 -1l-2 -2.5zM904.5 566.5l-1 -1l-1.5 1l-2.5 -0.5l-0.5 3l0.5 0.5l1.5 0l1.5 -1.5l1.5 0zM983.5 564l0.5 2l1 0.5l5 -0.5l-0.5 -1l-3 -0.5l-0.5 -1zM874 567l0 1.5l1.5 -0.5l1.5 1.5l1.5 3.5l0 2.5l2 -0.5l2 -2.5l1.5 -0.5l1 -2.5l2 0l1.5 1l1.5 0l2 -2.5l0 -3l-3 -0.5l-1.5 1.5l-3.5 -0.5l-1 3l-2 -1l-2 1l-0.5 -0.5l0 -4.5l-2 0zM851.5 564l0 3.5l-1.5 1.5l0 2l0.5 0l1 -1.5l1.5 0l3 2.5l0 5l-0.5 0.5l0 1.5l1.5 1.5l2 0l0.5 -0.5l0 -7.5l-1.5 -2l0 -1.5l-1.5 -3l0 -1.5l-0.5 -1zM738 562.5l-0.5 0.5l0.5 1.5l1.5 0l0.5 -1.5zM569 574l1 -1.5l1.5 1l3 0l1.5 -1l2 0l2.5 -1.5l0 -1.5l-0.5 -0.5l-1 0l-1.5 1l-1 -1l1.5 -1l0.5 -1l1 -0.5l1 0.5l-1 -2.5l-2 -0.5l-0.5 1l-1.5 -0.5l2.5 -3l2 0l3 1l0.5 0.5l0 3l2 0l2.5 -3.5l2 0l1.5 1.5l-0.5 0.5l0 2.5l2.5 2.5l0 2l0.5 0.5l0 4l-1.5 1.5l-3 0l-1 1l-2.5 1l-1 -1l0 -1l1 -1l0 -1.5l-0.5 -1l-1.5 -0.5l-1 0.5l-3 3.5l-1 0l-3 3.5l-2 0l-2 -2.5l0 -1l-3 -2.5zM975 561.5l-0.5 1l0.5 1l1.5 1l0.5 -0.5l0 -1.5l-1 -1zM771.5 563l1 2l2.5 -1l3.5 2l0 -3l0.5 -0.5l-0.5 -1l-2.5 0l-1 1l-3 0zM478 560.5l1 1l-0.5 3l1.5 1.5l0 2l-5 2.5l-2 0l-0.5 1l2 1.5l0 0.5l-1.5 1l-1 -0.5l-1 -2l-3.5 -3l0 -1.5l1 -1l1 0l2.5 2l0.5 -0.5l0 -2.5l1.5 -1l2 -4zM625.5 561.5l2.5 -1.5l1.5 2.5l1 0l1.5 -1l1.5 0l0.5 1.5l-1 1.5l0 2l-1 0.5l-2 -3.5l-1 0l-2 2l-1 0l-1 -1zM1033.5 559.5l-1 1l0 1.5l2.5 1l-0.5 -3zM818.5 566l2 1.5l1 0l2 -1.5l1.5 1l1 0l1.5 1.5l2 0l1 -0.5l0.5 -2l-1 -1.5l-2.5 -1l0.5 -0.5l2.5 0l1.5 1l1 0l1 -1l1.5 0l0.5 -1.5l-1 -1l-1.5 0l-0.5 0.5l-3.5 -0.5l-0.5 0.5l-1.5 0l0 2l-0.5 0.5l-1.5 -1l-0.5 -2l-1.5 -1.5l-1 0l-0.5 0.5l0.5 4l-3.5 1zM858 558.5l-2.5 0l-1.5 2.5l2.5 0.5l2 -2zM1009.5 558.5l1.5 2l3 -0.5l0 -1l-1 -1l-3 0zM809 558l-1 1l0 1l2 1.5l2 0.5l0 -1l-1.5 -2.5zM987.5 557.5l0.5 1l-0.5 3l4.5 0l0.5 -1.5l-3 -3.5zM672 556l-1.5 0l0 0.5l2 1.5l0 1l-2 2.5l-1 0l0.5 1l1.5 -1l2 0l0 -4zM485 554.5l1 -1l1 0l1.5 1l1 0l1 1l5.5 0.5l0.5 1l-0.5 0.5l0 4.5l-0.5 1l-1.5 1l-4.5 -1.5l-0.5 -0.5l0 -2.5l-3.5 -1.5l0.5 -2zM610 553l0.5 1l-1 1l-2 0l-0.5 2.5l-1.5 1.5l-1.5 0l0 0.5l6.5 3.5l0 1.5l2.5 2l0.5 1.5l1.5 1.5l0 3l1.5 1l2 0l0.5 -1l1.5 0l1 1l0 2l-1.5 1l-1 0l-1 1.5l-3 0l1.5 2l2 0.5l1 1.5l-1.5 2l-2 -0.5l0 1.5l-1 1l-1 -1l-1 0l-2.5 2.5l0 0.5l1.5 1l0.5 1.5l-2.5 3l-1 0.5l-1.5 -0.5l1 -6l-1 -0.5l-2.5 0l-2.5 -1.5l-1 0l-0.5 1l1 3l1 1l0 3l-1 1l-2 0.5l0 1.5l7 6.5l-0.5 2.5l1 2l1 0l1.5 -2l1.5 0l1.5 1l3.5 0l1.5 2l1.5 0l1 1l0 1.5l1.5 1l0.5 1l-3 2.5l0.5 2.5l-2 2.5l-1 0l-1.5 -1l-3 0.5l-2 -2l-0.5 -1l0 -2.5l-1 -0.5l-1 1.5l-1 0l-1.5 -2l-2 0.5l0 1.5l1.5 3l0 1.5l-1 1l-2 0l-1 1.5l3 2.5l0 1.5l1 2l1.5 0l1 1l-2 2l0 2l-0.5 0.5l-1 0l-1.5 -1l-1.5 -2.5l-3 0l2.5 3l0 3.5l0.5 0.5l2 -0.5l1.5 1.5l0 1.5l-2.5 2l0.5 2l-2 2.5l-2.5 -0.5l-1.5 1.5l-1 0l-2 -1l-1.5 -1.5l-0.5 -1.5l-2 0.5l-1.5 -2l-1.5 1l1.5 2l-0.5 1.5l-1.5 -1l-0.5 -1.5l-2.5 0l-1.5 1.5l-2.5 -0.5l-1 -1l1 -1l2 -0.5l1 -1.5l-0.5 -0.5l-5.5 -0.5l-1.5 -2l-2.5 -2l-1 0.5l1 4l1 1l-0.5 1.5l-2.5 1.5l-1 0l-0.5 -0.5l0.5 -2.5l-1 -0.5l-0.5 0.5l0 1.5l0.5 0.5l-0.5 1.5l-1 0.5l-3 0l-1.5 -1l0 -1.5l1 -1l0 -1l-1 -0.5l-1.5 -4.5l2.5 -2l0 -0.5l-0.5 0l-2.5 -3l2.5 -4l1.5 0l3.5 -2l-0.5 -2.5l2 -1.5l-0.5 -2.5l1 -1l2 0.5l1.5 1.5l1.5 0l2 1l2.5 -1l0.5 -1.5l1 -0.5l0.5 0.5l0 1.5l2.5 0l1 1l0 1.5l-1 1.5l0 2l0.5 1l1.5 0l1 -1l2.5 -0.5l1.5 -3l0.5 -3.5l-1.5 0l-1 -1l0 -1.5l1 -1l1.5 1l0.5 1.5l2 0l2 -2.5l0.5 -1.5l2.5 -2.5l0 -1l1.5 -2l1 0l1.5 1l1 0l1 -1l0.5 -2l-1.5 -1.5l0 -2l-3 0l-1.5 -1l-1 0l-1 1.5l-2 0l-2 2.5l-2 0.5l-1 -1l-1 -3l-1 0.5l0 2.5l0.5 1l2.5 1l0 1.5l-1 1l-3 0l-2 1.5l-1 -0.5l-3 0.5l-2 -1.5l0 -2l-1 -0.5l0 1.5l-0.5 0.5l-3.5 0l-1 -1l0.5 -3.5l-1 -0.5l-1.5 -2l1.5 -1l-0.5 -2.5l1.5 -2l2 -0.5l2.5 1.5l1 -0.5l0.5 -4l-1 -1.5l0 -2l1 -1l2 1.5l-0.5 2l2 2l0 1.5l-1.5 1.5l0 1l1.5 1l1.5 0l0 -1l-1 0l-0.5 -1.5l0.5 -1l2 -1.5l2.5 -0.5l0.5 -1l-0.5 -2.5l2 -2.5l0.5 -5l0.5 -0.5l2 0l3 -2.5l0.5 0l1 1.5l1.5 0l1.5 1.5l1 0l2.5 1.5l1.5 0l1 1.5l1 0.5l0 -4.5l2.5 -1.5l0 -1l-2 0l-1 -1l0.5 -1.5l1 -1l1.5 0l2.5 1.5l1.5 0l0 -1l-2 -2.5l-0.5 -4.5l-2 0l-2.5 -2l-2 1l-2 -2.5l-1 -5.5l-1.5 -2.5l-1.5 0l-0.5 -1l0.5 -0.5l1.5 0l2.5 -1.5l2 0l1 -1zM887.5 553l-1 0l-1.5 1.5l0 1.5l1 1.5l1 -0.5l1 -2l0 -1.5zM812.5 553l-1.5 0l-1 1l-2 0l-2 -1l-2 2.5l-2 1l-1 0l-1 -1l0 -1l-1 0l-2.5 2l0.5 1l-1 1l-1 0l-1 -1l1.5 -1l-0.5 -1l-1.5 0l0 2l-0.5 0.5l-1.5 0l-2 3l0 1l1 0.5l1 1.5l-3.5 1.5l1 4.5l1 0l0.5 -1l0 -2.5l1 -1l2.5 0l1 -1l2 -0.5l0.5 -2l1.5 -1l2 0l0.5 -0.5l1.5 0l1 -1l1.5 0l0 -1l-1.5 0.5l-1 -1l1 -1.5l1 -0.5l3.5 0l1 -0.5l0.5 -1l3 -0.5zM751.5 553l-1.5 0l-2.5 3l2 1l1.5 -1.5l1.5 -0.5l0 -1zM1030.5 551.5l-1.5 1l-2.5 -0.5l-1.5 2l-3.5 -0.5l-1 1l0 1.5l1.5 0.5l2 2.5l0 1l-1 1.5l0.5 0l2 -2.5l2 -0.5l1.5 -2l1 -0.5l3 0.5l0 -2l-1 0l-1.5 -1zM823 553.5l-1.5 -1.5l0 -1l-0.5 0l0 1l-1 1l-1.5 0.5l-2 -1l0.5 2l-3.5 1l-1 1l0 1l0.5 0.5l1.5 -0.5l4 0l1.5 1l3 -2.5zM569 550l-0.5 0.5l0.5 1.5l2.5 1.5l-1 -3zM906 552.5l0 1.5l1 1l-0.5 1.5l1.5 -0.5l-1 -2l1.5 -2l1.5 0.5l-0.5 0.5l0 1.5l0.5 0.5l4 0l0.5 -0.5l-0.5 -2l-2.5 -1l-2 -2l-2 0.5zM528 549.5l-1 0l-1.5 1l-1.5 0l0.5 4.5l1 0l3 -3.5l0 -1.5zM957 552l2.5 -0.5l2 1l1.5 -2l0 -1.5l-4.5 0l-1.5 2zM797.5 549l0 1.5l1 0l1.5 1.5l1.5 -0.5l0 -1.5l-0.5 -0.5zM685.5 549l0 1l-2 2.5l1 1l2.5 0l0.5 -0.5l0.5 -4zM1024.5 547.5l0 2l1 1l1.5 0l1.5 -1.5l-0.5 -1zM594 547l1 1.5l0 1.5l1 2l2 2.5l0 1l-0.5 0.5l-2 0l-0.5 -0.5l0 -3.5l-1.5 0l-1 2l0 1.5l1 1l0 1.5l-1 1l0 1l-1 1l-1 0l-0.5 -0.5l0 -1.5l-2.5 -3l-2 -1.5l0.5 -1l3.5 -3l0 -2l0.5 -0.5l1.5 1l0 1l1 0l0 -1.5l0.5 -1zM617.5 548l-1.5 -1l-1 0.5l-1 1.5l0.5 0.5l2 0zM542.5 544.5l-2.5 0.5l-2 1l0 0.5l1.5 0.5l2 -1.5l1 0zM895.5 544l-1.5 0l-2 1l0 1l3 -0.5zM752.5 543.5l0.5 5l1 0.5l2.5 0l-0.5 -2l-1.5 -2.5zM966 543l-2.5 0.5l-0.5 1.5l0.5 0.5l1.5 0l1 -1zM782 543l-0.5 1.5l2 1l0.5 -0.5l0 -1.5zM571.5 542l2.5 2.5l1.5 0l1 1l0.5 2.5l-1 1l-0.5 2l2 2.5l0.5 5.5l-1.5 1l-2 0l-0.5 0.5l0 1.5l-1.5 0.5l1 2.5l-3 5.5l-3 0l-1 -1l-4 0l-1.5 1l-1.5 -1l0 -1l2.5 -4l1.5 -1l0 -2l0.5 -0.5l0 -3l-1 -1l0 -2l0.5 -0.5l-0.5 -2.5l1 -1l2 -0.5l0 -1l-1 -1l-3.5 -1l0 -3l1 -1l4 2.5l2 0l2.5 1l0 -0.5l-2.5 -2l2 -2.5zM621.5 541.5l0 1.5l0.5 0.5l2 0l0.5 -0.5l0 -1zM928.5 546l0 2l-0.5 0.5l0.5 3l2.5 3l1.5 -1l0 -1l2.5 -2l0 -1l1.5 -1.5l1 0.5l0.5 1.5l-1.5 1.5l-1 0l0 3.5l2 0l1.5 -1l0.5 1.5l-1.5 1l-0.5 1l3 2l0 1.5l-2.5 2l-0.5 2l2 -1l2 0l0.5 0.5l0 3.5l-0.5 0.5l0.5 1.5l1 -0.5l0 -1l1 -1l2.5 0.5l3.5 2l1 0l0.5 -2l1.5 -2l1 1l3.5 0l0.5 -0.5l0 -3l-1 -1l0 -1l1.5 -2.5l1.5 0.5l0 4l1 1l2 -0.5l1.5 2l1 0l2.5 2.5l-1.5 3l1 3l-1.5 1.5l-1 0l-1 -1l0 -2l-1 0.5l0.5 1.5l-1.5 1.5l-0.5 2.5l-1.5 2l0 1.5l1 1l1 0l1.5 -1l1.5 0l1 1l0 2.5l-1 0.5l0 1.5l-1.5 1.5l-1.5 -1l1 -1.5l0 -1l-1.5 -1.5l-3 1l-2.5 -3.5l-2.5 -2l0 -2.5l-3 0l-1 -2l-1.5 0l-1.5 1l-1.5 -2.5l-3 0l-4 -3l-1 0.5l-0.5 2l-2.5 3.5l-1.5 0l-1 1l-1.5 0l-1.5 -1l-1.5 2l0 2l1 1l5 0.5l0.5 -2.5l1.5 -1.5l2 1.5l1.5 0l1.5 -3l2 0l1 1l0 1.5l-0.5 0.5l0.5 1.5l2 1l-1.5 2.5l2 -0.5l0.5 -1.5l2 -2l2 0l0.5 0.5l0 1.5l1 1.5l0 2l-0.5 0.5l-3 1l-3.5 2.5l-1 0l-1.5 -1.5l-2 0.5l0.5 1l-1 1l0 1l0.5 0.5l1.5 -0.5l1 0.5l-0.5 4.5l-4.5 1.5l0 2.5l-2 1.5l0 2.5l1.5 0.5l1.5 1.5l1.5 0l3 -2.5l1.5 -2l0 -1l1.5 -0.5l1.5 1.5l-1.5 2l-1.5 0.5l0 1.5l2 2l1 0l-1.5 -3l1.5 -1.5l2 1.5l1.5 3.5l1.5 0l0 -1l1 -1l2.5 -0.5l1 1l0 2l1 0l0.5 -1.5l-1 -0.5l0 -1l1 -1l1 0l0.5 0.5l0 1.5l1 0l1.5 1.5l2 0l3 3l0 1.5l1.5 1.5l1 0l2 -2l1 0l0.5 0.5l0 2l-1.5 1l-2.5 -0.5l-3.5 2.5l0 3l-1.5 0.5l0 1l1.5 0l1 1.5l1 0l1.5 -2.5l2 0l0.5 0.5l3 -0.5l-0.5 -2l1.5 -2.5l2.5 0l1.5 -1l3.5 1l3 3l-1.5 1l0 1l1.5 0.5l1 -2l1.5 0l1 1l-0.5 0.5l0 5.5l-2 3l0.5 1.5l1.5 0l0.5 -1l3.5 -3l0 -2l-1.5 -3l0.5 -3l1 -1l1.5 0l1.5 2l1.5 -1l1.5 1l1.5 0l1 -1.5l-3 -2l0 -1.5l1.5 -1l1 0l3 2l3 0l2.5 -2l0 -1.5l0.5 -0.5l0 -2.5l-0.5 -1l0.5 -0.5l1.5 0l2 -2.5l0 -1l-1 -1.5l2.5 -2l1.5 1l0 2l4 2l0 -2l-1 -1l0.5 -1l3.5 0.5l1.5 2l1 0l0.5 -4l0.5 -0.5l9 0.5l1.5 2.5l3 0l1 2l1.5 1l0 2l-0.5 0.5l0.5 3l1.5 0l0.5 -0.5l3 0.5l0 -25.5l-3 -0.5l-1 1l0.5 1l0 2.5l-1.5 1.5l0 1.5l1.5 1l0 1.5l-1 1l-1.5 0l0 1l2.5 2l0.5 1.5l0 2l-1 1l-6 -3l-0.5 -1l0.5 -3l-2 0l-0.5 -0.5l0 -3l-2.5 -2.5l1.5 -2.5l1.5 0l0.5 -0.5l0 -1l-2 0l-0.5 -0.5l-1 0l-1.5 2l0 1.5l-3 1.5l-1 1l-1.5 0l-2 1l-1 0l-1.5 -2.5l-3.5 -1l-0.5 -0.5l0 -2.5l-7.5 0.5l0 0.5l3.5 3l3 -0.5l1 1l-1 1.5l-3 0.5l-3.5 2l-1 -0.5l-6 0.5l-0.5 1.5l1 1.5l0 1l1 1l-0.5 1l-2 -1.5l-1.5 0l-1.5 2l-4.5 0.5l-1 -1l0 -1l1 -1l2 0.5l0 -1.5l0.5 -0.5l2 0l0.5 -0.5l0 -1.5l-2 -1.5l0 -1.5l0.5 -0.5l-0.5 -3l1 -2.5l-2 0l-1 -1l0 -1.5l-0.5 -0.5l-2.5 0l-2 -2.5l0 -2.5l1 -1l2.5 0.5l0 -0.5l-2 -1.5l-1 0l-1.5 1.5l-1 0l-2 -2l-1 0l0 3.5l-1.5 1l0 1l1 1l0 1.5l-2 2l-1.5 -1.5l-2.5 1l-3.5 0l-1.5 -2l0 -3l-0.5 -0.5l-2 0l-1 1l-1 0l-2.5 -1l-1 -1l0 -1.5l3 -2l1 -1.5l3.5 -3l1 -2l-1.5 -2l0.5 -2l-1.5 -0.5l-2.5 -2.5l-1 -2l0 -3l-0.5 -0.5l-4.5 0l-0.5 -0.5l-2 0.5l-1 -1l0 -1.5l-0.5 -0.5l-3 -1l0 4l-1 1l-2 0.5l-0.5 1l-1.5 0l-1.5 1l-2 0l-0.5 -0.5l0 -2.5l1 -0.5l0.5 -2.5l-2.5 -0.5l-1.5 1.5l-1.5 0l-2.5 -2.5l1 -2.5l2 -1.5l0 -2l-1 -1.5l0 -1l-2.5 -2.5l-1 -2l-5.5 -0.5l-0.5 0.5l0 1.5l1.5 0l0.5 0.5l-1 3l-1.5 0l-1.5 -1.5zM828.5 541l0.5 4l-1.5 1.5l-0.5 1.5l-3 2l0 1.5l4 4.5l1.5 0l1 -1l-0.5 -3l1 -1l1 0l1 1l2 0.5l1.5 -1.5l0 -1l-3.5 -2.5l0 -3l-0.5 -1l-3 -2.5zM890.5 539.5l-1.5 0.5l0 3l-1.5 2l0 2l1 0l1.5 -2.5zM992 539l-0.5 3l1.5 1.5l1 0l1.5 1.5l4 0.5l-1 -3l-3.5 0l-1.5 -2l-0.5 -2zM987.5 539l-3.5 -1l-2.5 0l-1 0.5l-0.5 1.5l1 1.5l0 1.5l-1 1l-1.5 0l-3.5 2l0 1l1.5 0.5l0.5 -0.5l6.5 -0.5l1 1l2 0l0 -2l2.5 -2l-1.5 -2zM520.5 537.5l-0.5 1l0.5 1.5l2.5 0.5l1 -1l0 -1.5l-1.5 -1zM525 536.5l0 1.5l1.5 1.5l2.5 0l0 -1.5l-1 -1zM958 540.5l1.5 0.5l0 -0.5l2 -1.5l3.5 0l0.5 -1.5l-1.5 0l-3 -2l-1 0l0 2l-1 1.5l-1 0zM759.5 535.5l-0.5 0.5l0 1.5l-1.5 1.5l0 1.5l6 6.5l1.5 0l2.5 -1l0 -1l-2 -2.5l0 -1l-2.5 -1.5l0 -3.5zM493 536l3 -1l2.5 0l1.5 1.5l-0.5 2.5l1.5 1.5l0 1l-1.5 0.5l-1.5 -1.5l-1.5 -0.5l-2 0.5l-1 -1zM926 534.5l-0.5 0.5l0 2l1.5 0.5l0.5 -1.5l-0.5 -1zM616 534.5l0.5 1.5l2.5 0.5l-1.5 -2.5zM720 533.5l-1.5 0l-2 2.5l-2.5 0l-1 2.5l-1 1l0 1.5l-0.5 0.5l-1 -1l-1.5 0l-1.5 1.5l0 1.5l1 0l1.5 -1l1.5 2l2.5 0l2.5 -2l1 0l2 -3l0 -1l-1 -1.5l1.5 -2zM645.5 533.5l-1 -1l-1 0l-3.5 3l0 1.5l5.5 -0.5zM543.5 532.5l-1 0l-1 1l-0.5 3.5l-1 1l-4.5 -1l-1.5 -1.5l0.5 -1.5l-0.5 -1l-2.5 0.5l-0.5 5l1.5 0l1.5 1.5l-1 0.5l-1 -1l-1 0l-1.5 1l0 0.5l3.5 1.5l2.5 -0.5l2 -1.5l1.5 1l1.5 0l1 -1.5l0.5 -4l2 -1.5zM955 531.5l-2.5 1.5l-3 0l-0.5 0.5l0 1l1 1l1 0l2 3l1.5 0l1 -1l0 -1.5l-1 0l-1 -1l2 -2.5zM743 531l-1.5 0.5l-0.5 3.5l1.5 -0.5l1 -2zM1013.5 531.5l-0.5 -1l-1.5 0l-1.5 1l-1 0l0 1.5l4 -0.5zM779 533l0 1l3 0.5l1.5 2.5l1.5 0l2 -2l1 0l2 2l-0.5 3l1 1l2 0l3 -2.5l2.5 0l0.5 -0.5l-1 -2l-2.5 0l-4.5 -2.5l-1.5 0l-1 -2l-2 -1.5l-2.5 0l-1.5 1l-1 0zM681 529l-1.5 0l-1.5 2l-1.5 0l0 2.5l1 2l-0.5 2.5l1.5 -0.5l0 -3l2 -3l1.5 0l2 1l-0.5 -1.5zM465.5 528.5l4 4.5l-0.5 1.5l-3 0l-1.5 1l0 2l2 0.5l1 1l-0.5 1l-1 0l0 1l1 0.5l0 1.5l-1.5 1.5l-3 0.5l-1.5 -2.5l-4.5 1l-1 -1l2 -2l1 0l2.5 -1.5l1 -2l0 -1l-1.5 -1.5l-1.5 0l-0.5 -0.5l0.5 -4l1 -1l1.5 0l0.5 1.5l-1 1.5l0 1l0.5 0.5l2 0l1 -1.5l0 -2.5zM878.5 530l-2 -1.5l-2 0l-3 2.5l-0.5 1.5l0.5 0.5l3.5 0.5l1.5 -0.5l2 -2zM936 528l0 1.5l0.5 1l1 0.5l0.5 -2l-1 -1zM570 524l1.5 1l0.5 1l0 2.5l2 2l0 1.5l-1 2l-2 -0.5l-3 2.5l-3 -5l1.5 -1.5l1.5 -0.5l0.5 -1.5l-0.5 -2.5l1 -1zM977 523.5l-1.5 0l-1.5 2.5l-3 0l-0.5 -0.5l-1.5 0l-0.5 0.5l0.5 1l2 0.5l1 1l0 1.5l-3 2l0 3.5l0.5 0.5l3 0l1.5 -1l0 -1.5l-1.5 0l-0.5 0.5l-1 -1l0 -1l1 -1l3 0l0.5 -3l2 -1.5zM1041.5 523l-4.5 0l-3 2l0 1l2.5 2l-0.5 5l1.5 2l1 0l1 -2.5l2 -2l1 -2l0 -2zM693 523l0.5 1.5l2.5 2l-0.5 -2zM556 523.5l-0.5 -0.5l-4 0.5l-0.5 3l1 0.5l0.5 -1.5l2 0.5zM530 525l-2.5 -2l-2 0l-3.5 4l-1 0l-1.5 1l0 1l-2.5 2l0 1.5l0.5 0.5l1.5 -0.5l1 -1l0 -1.5l-0.5 -0.5l1.5 -1l1.5 0l1.5 1l-2 1.5l0.5 1.5l2.5 1.5l2 -0.5l2 -2.5l0 -1.5l-1 -1.5l0 -1l1.5 -0.5zM853 523l0.5 1.5l3 -0.5l0 -0.5l-1.5 -1l-1.5 0zM803.5 523l-0.5 2l-1 1l0.5 1l-0.5 0.5l0 2l-1 1l-1.5 0l-1.5 1l0.5 2l2 1.5l0.5 4l1 0l1 1l0 1.5l-1.5 1l-1.5 0l-1 1l-2 -0.5l0 1l1.5 0l0.5 0.5l0 2l1.5 1.5l1 0l0 -2.5l1 -1l2.5 0.5l0.5 -1.5l1.5 -1l3 1.5l1 -1l4 -1l2 2.5l1.5 0.5l2 -0.5l-0.5 -5l-1.5 -1.5l0 -1.5l-2 1.5l-1.5 0l-1 -1l0 -2l2 -1.5l0 -2l1.5 -1.5l0 -1l-1.5 -1.5l-0.5 -1.5l-3 0.5l0 2l1 1l0 2l-2.5 2.5l0 1.5l-1 1l-1 -1l0 -1.5l-0.5 -0.5l0.5 -2l-1 -1.5l0 -1.5l1.5 -1.5l0 -2l-0.5 -1l-1 0l-1 -1.5l-2.5 0zM653.5 525.5l1 1l2.5 0l0 -1l1 -0.5l1 -1.5l2 1l4 -0.5l-0.5 -2l1.5 -0.5l1.5 2.5l0 3l1.5 0.5l1.5 -2l2.5 -0.5l1 -1l1.5 0l0 -1.5l1.5 -2l0 -1l-1.5 1l0 1.5l-1.5 1.5l-1.5 0l-2 -1l-1 -1.5l-2.5 0.5l-1 -1.5l-2 -0.5l-1 1l-1 0l-1.5 -1l-5.5 0.5l-0.5 1l1.5 0l0.5 1l-2.5 1zM941 519l-1.5 0l-1 1.5l0 1.5l0.5 0.5l2 -1.5l0.5 -1zM504 518.5l2 2l0 1.5l-1 0.5l-0.5 1l0 1.5l-1.5 2l0 1.5l-1.5 1l-2 0l-1 -2l-2.5 0l-0.5 -0.5l1 -1l1.5 0.5l0 -1.5l-1 -1.5l0 -1l1 -1l4 0.5l0 -2.5l1 -1zM954.5 517.5l0.5 2.5l-1 1l-1 0l-1 1l0 1l2.5 1l1 -2.5l2.5 2l1.5 0l0 -3l-4 -3zM625.5 517.5l-1 2.5l0 3.5l-0.5 0.5l-3 -0.5l0 1l3.5 2l0 1l2 2l0.5 1.5l-1 1l-1.5 0l-0.5 -0.5l0 -3l-0.5 -0.5l-1.5 0l-1.5 1.5l-1.5 0.5l-0.5 2.5l2.5 2l0 2.5l1 1.5l2.5 0l3 2.5l1.5 2l1 0l1.5 1l0.5 4.5l1.5 0.5l2.5 -1l2 -2l3.5 -1l-1 -1.5l-2 0l-1.5 1l-1 -0.5l2.5 -3l2 -0.5l-0.5 -1l-2 0l-2.5 -2.5l-2 0l-0.5 0.5l-2.5 0l-0.5 -0.5l2 -2.5l-0.5 -0.5l-1.5 0.5l-1.5 -0.5l-1 -1.5l0.5 -3l1.5 -1.5l0 -1l-1 -1l0 -1.5l2 -2.5l0 -1l-3 -3zM795.5 517.5l-0.5 -1l-1.5 0l-1.5 1.5l-4.5 0l0 1l-2 2.5l2 -1.5l4 0l1.5 -1.5l2 0.5zM804 515.5l-1.5 0l-3 4.5l-1 -0.5l-1.5 0.5l0.5 1.5l-0.5 2.5l0.5 0.5l2 0l0.5 -0.5l-0.5 -3l1.5 -0.5l2 -3l1.5 0l0.5 -0.5zM671.5 514.5l0 1l2 1.5l1.5 -0.5l0 -1l-1 -1zM884 514.5l0.5 1l5.5 0l-0.5 -1l-2.5 0l-0.5 -0.5l-2 0zM780.5 525l-1 -1.5l0 -1l-3 -2.5l1 -1.5l0 -2l-3 -2.5l-1 0l0 1l1.5 1l-1 1.5l-3.5 -3l-2 0l-1.5 1.5l-2.5 0l0 1.5l1 1.5l-0.5 1.5l-1 1l-3 -0.5l-1 1l0 1.5l1 0.5l1.5 0l0.5 -0.5l2 0.5l1 -0.5l1.5 1.5l0 1l1.5 0l1.5 -1l2 0l4 2l0.5 -0.5l0 -1.5l1 -1l1 0zM758.5 513.5l-1 0.5l0 2l-2.5 1l0 1.5l0.5 0.5l1 0l1.5 -1.5l2 1l0 -3.5zM1011.5 513.5l0 2.5l-0.5 0.5l0.5 4.5l2.5 -0.5l3 2.5l-1.5 4l0.5 0.5l3 0l0.5 -0.5l2.5 0.5l1 -1.5l-0.5 -1.5l0.5 -1l0 -2.5l-1 -1.5l-1 0l-1 -1l0 -1l1.5 -1l1 0.5l0.5 -1l-1.5 0l-0.5 -1l-2 0l-2 -2.5l-1 0l-1.5 2zM944.5 512.5l0 0.5l1 0l1.5 1.5l1 0l0 -1.5l-1 -1l-1.5 -0.5zM528 511.5l-2.5 1l-1 1l0 1l2.5 2l0 2l-0.5 0.5l0.5 1l1 0l0.5 -1l-0.5 -2.5l1.5 -2l2 2l1.5 -0.5l0 -2l-0.5 -0.5l-1.5 0l-1 1zM1048.5 510l-1 1l-2.5 -0.5l0 1.5l3.5 0.5zM820.5 510.5l-3 -0.5l-0.5 0.5l0.5 3l-1 1l-1 -0.5l-0.5 1l1.5 1l1 -1l3 0l1 -0.5l0 -2.5zM698 510l0 1.5l2.5 1.5l0 2.5l-1 1l0 1.5l0.5 0.5l4.5 -1l2 2.5l4 1l0 -1.5l-0.5 -0.5l0.5 -1.5l0.5 0l1 1.5l1 -0.5l0 -1.5l-3 -2.5l-1 0l-1 1l-2 -2l-2.5 -1l-3.5 -2.5zM718.5 509.5l-1.5 0l-1 1l0 1l-1.5 2.5l1 0.5l1 -0.5l0.5 -2l2 -1.5zM806 508.5l-1.5 0.5l-1.5 1.5l-0.5 3l1.5 0l1.5 -1l0.5 -1zM814.5 505l-2.5 0.5l-3 2l0.5 6l2 0.5l1 1.5l1 -0.5l-0.5 -5.5l1 -1l1.5 0l0.5 -0.5l0 -2zM736.5 506l0 1.5l1.5 0l0.5 0.5l-0.5 2.5l2 1l2.5 -1.5l2.5 0l2 -1.5l2 0l2.5 1.5l2 0l0.5 -0.5l0 -1l-1 0l-2.5 -1.5l-1 0l-1 1l-5 -0.5l-2 -2.5l-2.5 0.5l-1 1zM979.5 504.5l-1 2l0.5 0.5l1.5 0l0.5 -1.5zM635.5 504.5l-2.5 0.5l-1 2l0 2l0.5 0.5l1 0l2 -1.5zM823.5 504l-1 1l0 2l2 2.5l1.5 4.5l0.5 0.5l1.5 0l1 -1l1 0l0.5 -1.5l-2 0.5l-3 -2.5l-0.5 -6zM847 503.5l0 4l2 2.5l0.5 2l0.5 0.5l1.5 0l1 -1l0 -1l-1.5 -1.5l1 -2l0 -2l-3 -1.5zM563 503.5l-0.5 2.5l1 1l3.5 0l0 -0.5l-2 -0.5l-1.5 -2.5zM1040.5 503l-4.5 -0.5l-1 2l-2.5 1.5l0 1l-1 1l-1.5 -1l-0.5 -3l-1 0l0.5 2.5l-1 2l-2 1.5l-0.5 1.5l-1.5 1.5l0 1.5l2 -0.5l2 1.5l-1 1l0 2l0.5 0.5l-0.5 2l3 0.5l-0.5 -3l1.5 -1.5l3 3.5l2.5 -1.5l0.5 -1.5l-2 0l-1 -1l0 -8.5l5.5 -2l1 -1.5zM481 503l2.5 -1.5l1 1l-0.5 1l0 3l0.5 0.5l1.5 0l1 -1l2 0l1.5 1l-1 3l0.5 0.5l1 -0.5l1.5 0.5l-1 2l0.5 1.5l-1 1l-2.5 -0.5l-1 -2l-2.5 0l-2 -2l0 -1.5l-1.5 -0.5l-2 -2l0 -1.5zM810 501.5l-3 0l0 2l-0.5 0.5l0 1.5l0.5 0.5l2 -1zM788.5 501.5l0 1l-1.5 1.5l-1.5 0.5l0.5 1l1.5 0l1 1l0 1l-1.5 3l0 2l1 2l2 -1.5l1.5 0l1 1.5l0.5 0l-0.5 -1l1.5 -1.5l0.5 -1.5l-1 -2.5l-1 -1l0.5 -0.5l1.5 0l0 -1.5l-0.5 -1l-1.5 0l-1.5 -2zM1048.5 501l-1.5 0l-0.5 1l0.5 2l-1 2l-2 1l0.5 2.5l4 -0.5zM661 509l-3.5 0.5l-0.5 -0.5l0.5 -3l-3 -1l0 -1l-1.5 -1l0 -2l-0.5 0l0.5 5l-0.5 0.5l-2.5 -1l-2.5 0.5l-1.5 2l0.5 1l-0.5 1.5l-1 0l-1.5 -1l-1 -1.5l0 -1.5l-1.5 -0.5l0 2l-1 1.5l2 2.5l2.5 1.5l0 3l-2 1.5l-1 -2.5l-2.5 -0.5l0.5 1.5l2 2l-1.5 2l-4.5 0.5l-1 3l-2.5 -0.5l-0.5 0.5l0 2.5l2 0.5l1 1.5l1.5 0.5l-0.5 -4l1.5 -0.5l1 1l0 1.5l0.5 0.5l2 -0.5l0.5 -2.5l2 -1.5l0 -3l0.5 -0.5l6.5 1.5l0.5 0.5l-1.5 1.5l0 1.5l2 0l0.5 -0.5l-0.5 -2.5l1.5 -1l0 -1.5l-0.5 -0.5l0.5 -1.5l2 -1.5l1.5 0.5l1 -0.5l-0.5 -2.5l-1.5 -0.5l-0.5 -1.5l2 -1.5l0.5 0.5l0 2l1 0.5l3 0l0.5 -0.5zM723.5 500.5l-1.5 0l-1.5 2.5l1 0.5zM651 500l-2 0l-1 -1l-1 0l0.5 2l-1.5 1.5l-1.5 0l0 1l0.5 0.5l4 -0.5l2 -2.5zM708.5 498l-1.5 2l0 2.5l1.5 3.5l0 2.5l1.5 0l1 -1l0 -1.5l0.5 -0.5l2.5 -0.5l2.5 -1.5l-0.5 -1l-3 0.5l-1 -1l0 -3l-1 -1zM685.5 499l0.5 1l2 0l0 -1.5l-1 -0.5zM625 498.5l-1 -0.5l-2 1.5l0.5 1l1.5 0l1 -1zM499.5 498l-2 1l0 3l2.5 -0.5zM753.5 497l-2 1.5l-0.5 3l-1 1.5l1.5 0l0 -1l2.5 -2zM499 494.5l1.5 0.5l0 2l2 0l1.5 2l0 2l-2.5 1.5l0 2.5l-1.5 2l-1.5 0l-1 -1l0 -1l-2.5 0l-1.5 -1l0 -1.5l2 -2.5l0 -1.5l-0.5 -0.5l0.5 -2l1 -1l2 0zM706.5 494.5l-2.5 1l0 2.5l1.5 0l1 -1zM715 494l-0.5 0.5l0 2l2 0l0 -1.5zM625.5 494l-0.5 1l1 1l1 0l0.5 -1.5l-0.5 -0.5zM656 494l-1.5 -0.5l-1 0.5l-0.5 1l0 4l1 -0.5l0 -2.5l1.5 -1zM794.5 492.5l-3 0.5l-0.5 2l1 1.5l2.5 0l1 -0.5l0 -1.5zM902 492.5l0.5 2l1 0l1.5 -1.5l2 0l1 1l1.5 -0.5l0 -0.5l-2 0l-0.5 -1zM1048.5 491.5l-1.5 2l-1.5 -0.5l0 2.5l1.5 2.5l1.5 0zM692.5 492.5l-2 -1.5l-2 1l-4 -0.5l0 1l2 2.5l0 2l1.5 -1l0.5 -1.5l4 0.5l0.5 -0.5zM789 493l-1.5 -0.5l-1 1l-2 0.5l0 1l-1 1l-1.5 0l-0.5 -0.5l0.5 -6l-1.5 -1l-1.5 0l-0.5 0.5l0.5 1.5l-0.5 1l-1.5 1l-1.5 0l-1 -1l-2 0l-0.5 1l2 1.5l0 1l-0.5 0.5l-3 0l-3 1.5l0 1.5l1.5 0l1.5 1.5l0 2l-2 1.5l0 1l2 2.5l-1 1.5l0 1l1.5 0l1 -2l2 0l2.5 1.5l3 0.5l-0.5 -1l-2 -1l0 -1.5l1.5 -1.5l2 -0.5l1 -1l3 0l1 -0.5l0 -1l-2.5 -3l1.5 -2.5l2 -1.5l2 0zM712 489l0.5 1.5l2 -0.5l-0.5 -1.5l-1.5 0zM887 488l-0.5 1.5l1.5 0.5l1 1.5l1 0.5l0.5 -0.5l-0.5 -2l-1 -1zM656.5 489l0 0.5l4.5 0.5l-1.5 -2l-2 0zM484.5 487.5l1 1l0.5 2.5l1 0.5l-2 1l0 1.5l-0.5 0.5l-4.5 0l-0.5 -1.5l1.5 -3.5l2 -2zM461.5 488.5l4.5 -1l1 2l3 -0.5l1 1l0.5 1.5l-1.5 1l-2 2.5l-1.5 -0.5l0 1.5l2.5 3.5l-0.5 1.5l-2.5 -0.5l-2 -3l-2.5 0l-2 -2l-0.5 -1.5l2 -2l-0.5 -2.5zM735 491.5l1.5 0.5l1 -1l1.5 0l1.5 -1l2 0.5l0 -0.5l-2.5 -2l-2 -0.5l-1 1l0 2l-0.5 0.5l-1.5 0zM705 487.5l-1 2l0 1.5l3.5 1l1.5 2.5l2 0l1 -1l0 -2l-1.5 0.5l-2.5 0l-0.5 -0.5l0 -1.5l1.5 -1l0 -1.5zM617 487.5l0 1l1 1l0.5 2l0.5 0l0 -3l-0.5 -1zM823 487l-1.5 0.5l-3 3.5l-2 0l-0.5 -0.5l-1 0.5l0 1.5l2 0l1 1.5l-0.5 1l2 1.5l1.5 0l0.5 -0.5l2.5 0.5l0 -3l-1 -2zM573 487l-2.5 2l0.5 1.5l0.5 0l1 -1l0 -1l1 -0.5zM916 486l-1.5 1l-0.5 1l0.5 1l1.5 -0.5l0.5 -1zM525.5 486l0.5 -0.5l2.5 0.5l1 -1l1.5 1l1 0l1.5 1.5l2.5 0l1 0.5l2.5 3l1.5 0l1 1.5l-3.5 3l-3 0l-0.5 -0.5l-0.5 -3.5l-1.5 -2l-3.5 0.5l-1.5 -2zM692 483.5l-0.5 0l0 1l-1 1.5l0 3.5l2.5 -1l-0.5 -1.5l1 -1l0 -1zM771 483l0 1.5l0.5 0.5l1.5 0l2 1.5l1 0l0 -1.5l-2 -2.5l-2.5 0zM839 487.5l0 2.5l1 0l1 -1l1 1l2 0.5l4.5 -2.5l0.5 0.5l2 0l2.5 2.5l1 0l0 -1.5l-0.5 -0.5l-2 -0.5l-2 -1.5l0 -3l-0.5 -0.5l-1.5 0.5l-2 -2l-1 0l0 2l-0.5 0.5l-3 0zM694.5 482l0 1.5l1 1.5l1.5 0.5l2.5 -0.5l0 -1l-1 0l-1 -1zM918.5 482.5l-1 -1l-4 0.5l0 1.5l0.5 0.5l4.5 0zM760 481l-1 0l-2 1.5l-2 -0.5l-1.5 2l-1 0l-1.5 -1l-0.5 0.5l0 1.5l1 0.5l3.5 -0.5l1 -0.5l1.5 -2l2 0zM1028 480.5l-0.5 0.5l-2 0l-1 1l0 1.5l1 0.5l1.5 2l0 1.5l0.5 0.5l-0.5 3l1 2l1 0l0.5 -3l-1 -3l1 -1l0.5 -4.5l-0.5 -1zM1018 480.5l-2 -0.5l-1.5 1l1 3l3 -2.5zM965.5 483l0 0.5l1.5 -1l1.5 0.5l1 1l0 1.5l0.5 0.5l2 -1l1 1l0.5 2.5l0.5 0l-0.5 -1l2.5 -2l0 -1l-3 -2l1 -1.5l-1 -2l-1.5 1l-1.5 0l-1.5 1.5l-2 0.5zM590.5 478.5l0 1l1 0.5l2.5 0l0.5 -1l-1 -1.5l-1.5 0zM846.5 477l-0.5 1.5l2 0.5l0.5 -0.5l0 -1.5zM717.5 476.5l-2 0l-2.5 3l0 0.5l2.5 2l1.5 -0.5l0 -1.5l1 -1.5l0 -1.5zM959 477l-1 -1l-2 0.5l-1 1.5l0.5 0.5l3 0zM515 479.5l1.5 -1l0 -2.5l0.5 -0.5l1.5 0l1.5 1l1.5 -0.5l1.5 2l0 1l-2 2l-2 0l-1 2l-2 -1.5zM963 475.5l-0.5 0.5l0 1.5l1.5 0.5l0.5 -0.5l0 -1.5zM828.5 475.5l2 5.5l1.5 0.5l0 -0.5l-1.5 -1l0 -2l-1 -1l0 -1zM917.5 475l-1.5 0l-1.5 2l0.5 1.5l3 -0.5l0 -2.5zM448 476.5l0 1.5l1 0l2.5 2l1 0l0.5 -4l-1 -1l-0.5 0l-1 2zM837.5 473l-1 0l-1.5 1.5l0 0.5l1 0.5l0 1l-2 1.5l-0.5 1l0 4l0.5 1l1 0l1.5 -1.5l-0.5 -3.5l2.5 -1.5l0 -1l-1 -1zM776.5 473l0 2.5l1 1l0 2.5l1 1.5l1 0l1.5 -1.5l2 -0.5l-0.5 -1l0 -2.5l-1 0l-1.5 1.5l-1.5 0.5l-1 -1l0 -3zM866.5 473l-0.5 4l1 1l1.5 0l1 -1l1 0l1.5 1l2.5 0l1.5 2l2 1l0 1l1.5 1.5l3.5 0l0.5 -0.5l0 -1.5l-0.5 -0.5l-1 0l-0.5 1.5l-1 0.5l-3 -2.5l0 -2l-1.5 -2l0 -1l2 -2l-0.5 -1l-1.5 -0.5l-1.5 1l-1 0l-2.5 -1.5l-0.5 0.5l-2.5 0zM509.5 470l2 0l0.5 0.5l0 1.5l-2 2l0 2l-0.5 0.5l0.5 2.5l-0.5 1l1.5 2l0 2l2 1l-0.5 2.5l1 2.5l0 2.5l2 1l0 1l-1.5 1.5l1 3.5l-1.5 1.5l-2.5 0.5l-1 -1.5l-1.5 0l-3 -5l0 -1.5l1.5 -1.5l1 1l0 2.5l0.5 0.5l1 -0.5l0 -1.5l1 -1.5l0 -3l-1 -1l-1.5 0.5l-1 -1l0 -2l-4.5 -3.5l0 -1.5l-3.5 -1.5l0 -1l1.5 -1.5l0 -1l-0.5 0l-1 -1.5l1.5 -1.5l3 -1.5l2.5 0.5l1 -1l1 0zM965.5 470l-3 0l-2.5 3.5l1 0l3 -1.5zM448 470l0 3.5l1.5 0l0.5 -2.5l-1 -1zM988.5 473l2 1.5l0 1l1 1l2.5 0l1 -1l0 -1l1.5 -1.5l1 0l1 1.5l0 2.5l-1 1l0.5 2l1.5 0l0.5 -0.5l3 0.5l0.5 -0.5l3 0l0.5 -0.5l0.5 -5.5l-2 1.5l-2 0.5l-3.5 -2.5l0.5 -2l-1 -1.5l-1 0l0.5 1.5l-1 1l-2 -1l-3.5 -0.5l-1 1.5l-2.5 0zM951.5 468.5l0 1l4.5 3.5l2.5 0.5l-1 -2l-2.5 0l-2 -3zM658 473.5l0 0.5l1.5 0.5l2.5 3l1.5 0l1.5 -1.5l1 0l1.5 1l3.5 0l-1 -2.5l-1 0l-2 -1.5l0 -1.5l0.5 -0.5l-0.5 -2.5l-1.5 0.5l0.5 3l-1 1l-4 -0.5zM602 468l1 1l0.5 2.5l3.5 1.5l0.5 1l-1 1l0 2l-1 1l-2 0.5l-2.5 -2l-1.5 1l0 4l1 1l0 1.5l-1 1l-0.5 -0.5l-1.5 0l-1 0.5l0 1l2.5 -0.5l1.5 1.5l0 2l-1.5 1.5l-1.5 0l-2 -1.5l-1 0.5l0.5 7.5l1.5 2l0.5 2l-0.5 0.5l-1.5 0l-2.5 2.5l0 1.5l2.5 0l1 -1.5l1 0l1 2l1.5 0.5l1.5 -0.5l1.5 1.5l-1 1.5l-5 1.5l-1 3l1.5 0.5l0 -2.5l1.5 -1l1.5 1.5l-0.5 3.5l1.5 0l1.5 -2l1.5 0l1.5 1.5l-3.5 4l-0.5 2.5l3.5 0l1.5 1l0 4l-0.5 0.5l-3 0l-1.5 1.5l-2.5 -4l-2.5 0l-1 -2l-1.5 -0.5l-1.5 -2.5l-2 -0.5l-2 -2.5l-1.5 0.5l-0.5 1l-1 0.5l-0.5 -1.5l2.5 -2l0 -1.5l-1.5 -0.5l-1.5 1.5l-1 0l-0.5 -0.5l0.5 -1l-0.5 -1l0 -3l-4 -2.5l-4.5 0.5l0.5 1l-0.5 2.5l1 3l-1.5 4.5l-1.5 1.5l-1 0l0 3l-1 1l-1.5 -0.5l-3.5 0.5l-1.5 -1.5l0.5 -3l-2 0l-1 -1l0 -1l1.5 -1.5l3.5 0l0.5 0.5l3.5 0.5l0 -1.5l-1 -1l-1.5 0.5l-2.5 -1.5l-1 0l-2.5 -3l-2.5 0l0 1l-1.5 0.5l-0.5 -1l1 -1.5l-1.5 -3.5l-1.5 0.5l-0.5 2.5l-2 1.5l-1.5 -1l0.5 -0.5l0 -2l-0.5 -0.5l-3 0.5l-1.5 3.5l0 1.5l-1.5 1.5l-2 -1.5l-2 -0.5l-1.5 -2l-2 -1.5l-1 0l0 2.5l1.5 1.5l0.5 1.5l-1 1l-2 0.5l0 1l0.5 0.5l2 0l1 -1l3 0l0.5 -0.5l1.5 0.5l0 0.5l-2.5 2l-0.5 1.5l-1 0.5l0 1.5l2.5 2l1.5 0l1.5 -2l-0.5 -2l0.5 -0.5l0 -1.5l1 -1l1 0.5l0 2l1.5 0.5l1.5 -1.5l2 -0.5l1 -1.5l1.5 2.5l1.5 -0.5l4.5 5l3 1l-0.5 5l-2 3l0 1.5l1 1l1.5 0l1 1.5l0 1l-2 2l-1 -1l-1.5 0l-2 2.5l-2.5 0l-1.5 -2l-2 0l-1 1.5l0 1.5l0.5 0.5l0 2l-1.5 1l-3.5 -0.5l-1.5 2.5l-2.5 0.5l0 1.5l2.5 1.5l-0.5 1l-2 0l-1.5 1.5l-1 -0.5l-1.5 -2l-3 0l0 1.5l2 1l-1 1l-2 0.5l-1.5 -2.5l-2 -1l-2 3l0 1.5l1 0.5l1 2l1.5 0.5l0.5 1l0.5 0l0 -1.5l1.5 -1.5l1 0l1.5 1.5l0 1l-1 1.5l1.5 2l1.5 0l1 -1l2.5 0l0.5 -2l1 -1l2 0l0 -3.5l-1 -1.5l0 -1l1 -1l1 0l1.5 1.5l0 2.5l2 1.5l1 -0.5l0 -1l1 -1l2.5 0l0.5 -0.5l2.5 0l1 0.5l1 2l-0.5 1l-2.5 1.5l-1.5 -1l-1.5 0l0 1l1.5 2l0 1.5l-0.5 0.5l-2 -1l-1.5 0l0 1l2 2l1.5 -0.5l1 0.5l-0.5 1.5l0.5 2.5l-2.5 2l-2.5 -3.5l-1 0l2 2.5l0 2l-1.5 1.5l-3 -0.5l-2 1l0 1l-2 3l0.5 6l-3 1.5l-1 1.5l1 0l2.5 -1.5l1 1l0.5 3.5l-2.5 1.5l-0.5 2l-1 1l-1 0l-1.5 1l-1.5 0l-0.5 -0.5l-1.5 0.5l0 1l1.5 1.5l0.5 1.5l3.5 3l0.5 2l-3.5 3l-1 2.5l-4 3.5l-0.5 -1.5l1 -2l-3.5 -3l0.5 -1l1.5 0l0 -1.5l-1 0l-2.5 -3.5l0 -1.5l1 -1l0 -1l-3 -2l0 -2l-1.5 1l-1.5 -0.5l-1.5 0.5l0 1.5l0.5 0.5l-1.5 1.5l-1.5 -1l0 -2.5l-4 -3l0 -1l-1.5 -2l-2.5 0l-1 -0.5l-1.5 -2l-2.5 -1.5l1 -1.5l5 0.5l0 -1.5l-1.5 -1.5l0.5 -2l-1 -0.5l-1 1.5l-3 -1l-1 -1l-0.5 -2.5l1 -1l1 0l2.5 2l1 0l1 -1.5l0 -1l-1.5 -2.5l3.5 -3l1 0.5l0.5 1.5l2 0.5l3.5 4l2 0.5l2 2l1.5 0l1 -1l2 0.5l0.5 1l5 -0.5l1 0.5l0.5 1l1 -0.5l0 -2l0.5 -0.5l-1.5 -3.5l3 -4l0 -0.5l-2 -1.5l0 -1.5l-1 -1l-2 0l-1 0.5l0 1.5l1.5 2l-1 1l-1.5 0l-3.5 2l-1.5 -3.5l0 -3l-0.5 -0.5l-1.5 0l-1 1l0 2l-0.5 0.5l-2 -0.5l-0.5 -1.5l-1.5 0l-2.5 3.5l-1.5 -1l-1 0l-0.5 -1l-6.5 -6l0.5 -1l3 0l1.5 -1l2 -2.5l0 -2l1.5 -1.5l1.5 0.5l-0.5 2.5l1 1l-0.5 1l0.5 2l0.5 0.5l1.5 0l1.5 -1l0 -1l-1 -1.5l-1 -0.5l-1 -2.5l-2 -2.5l-1.5 0l-1 -1l-2.5 0l-1 -1l1 -1.5l1.5 -1l1.5 0l0.5 -1.5l-1.5 -1l0.5 -1.5l-0.5 -3l-1.5 0l-1 2l-2 1l-1.5 -2.5l-3 -0.5l-1 -1l1 -6l-1.5 -2l2 -2l1.5 0l0.5 0.5l0 1l-1.5 3l2 2l3 0.5l3 -3l1 -2l0 -1.5l1 -1l0 -1l-4.5 -4.5l0 -1l-1 -0.5l-2.5 -3l0 -2.5l2 -2l1 1.5l1.5 0l2 -1l0 -0.5l1.5 -1l0 -3l1 -1l1 0l1.5 1.5l7.5 -1l0.5 -0.5l-0.5 -1.5l0.5 -1l1.5 -1l0 -2l-0.5 -0.5l0 -1.5l0.5 -0.5l3 1l1.5 -1.5l1 0l3.5 1.5l1.5 -1.5l2 0l4 3l1.5 -0.5l2 2l3 -0.5l2 -2.5l3.5 0.5l0 -1l-1.5 -2l-3.5 0.5l-1 -1l0.5 -1l1 0l2 -1.5l-0.5 -4l1.5 -1.5l1 0l1.5 1l2 3l3.5 0l2 2l-1 1.5l-4.5 1l-0.5 1.5l2.5 0l1 -0.5l4 2l0 -3l1 -1l-1 -3l1.5 -1.5l-0.5 -3l-3 -3.5l-1.5 0l-2 -2.5l-1.5 0l-3 2l-0.5 -0.5l-0.5 -3.5l-1.5 -1.5l1 -1l1 0l1 1l2 0.5l2.5 -2l1 0l1 1l1 0l3 1.5l1 1.5l-1 1l-2 0l0 1l2 2l1 0l2 -3l5 -1.5l0.5 1l-2.5 4.5l0 1l1.5 3l-1.5 1l-3.5 -1l-1 1l0.5 1l0 3.5l1 1l-0.5 2.5l0.5 0.5l1.5 0l0.5 -0.5l0 -2l2.5 -2l1 1l0 3.5l2 2.5l2.5 1l0.5 -1l-2.5 -1.5l1 -1.5l2 -1l-1.5 -2l0 -1l2 -2l3 -0.5l3 -2l0 -1.5l-1 -1.5l0.5 -3.5l-2.5 -2l0 -2l1.5 -2l-1 -2l-2 -1l0 -1l1 -1.5l0 -2.5l1.5 -1l3 -0.5l1.5 2l1.5 0l0 -1.5l0.5 -0.5l4 0l-0.5 -1.5l1 -1l2 0l0.5 0.5zM868 466l0.5 2l1.5 0.5l0.5 -1zM990 465.5l-1.5 0l-0.5 0.5l0 1l-1 1l-0.5 2l-2.5 2.5l0.5 1.5l1.5 -0.5l1.5 -3l2.5 -2l0 -1.5l0.5 -0.5zM532.5 466.5l-1.5 2l-1 3l-1 1l-2.5 0.5l-1 1l-1 0l-1.5 -1.5l0 -2.5l-2.5 0.5l-2 -2l-1 0l-1.5 2l-0.5 -0.5l0 -2.5l1.5 -1.5l10 1l1 -0.5l1 -2l1 0zM958.5 464l-1.5 0l-0.5 2l1 1l-0.5 2l2.5 -1.5l0 -2zM674.5 463.5l0 2l0.5 1l1 0l0.5 -0.5l-0.5 -2zM1046.5 463l-1 1l0 1l1.5 0.5l1.5 2l0 1.5l-0.5 0.5l0 2.5l0.5 0.5l0 -9.5zM797 462.5l-1 1l0.5 3.5l0.5 0.5l3.5 -0.5l0.5 -0.5l-0.5 -3l-1 -1zM752.5 462.5l-3 2.5l0 5l3 -0.5l2 1l1.5 -3l0 -4l-1 -1zM873.5 466l0.5 1.5l1.5 0l0 -2l1 -1l3 -1l1 1l0 0.5l-1.5 1l0 2l0.5 0.5l1.5 -1l0 -1.5l0.5 -0.5l1 0l0.5 1.5l1.5 0.5l-1 -1.5l0.5 -2l-2 -2.5l-3 0l-3 3zM698.5 461l-5.5 0l-0.5 0.5l0 1l1.5 0l1 1l0 2l-2.5 2.5l0 1l1 1.5l0.5 0l0 -1l1 -1.5l2 0l0 -3l-1.5 -1.5l0.5 -0.5l2 0.5l1 -1zM558.5 460.5l3 3.5l0 1l-1.5 1.5l-2.5 1l0 1l1 0.5l-0.5 1l-4 3l-2.5 -2l-1 0l-0.5 1l0.5 1.5l1 0.5l2 -0.5l1.5 2l-2 2l-1.5 0l-0.5 0.5l0 1.5l1.5 1l0 1.5l-1.5 1l-1 -2l-2 0l-2 1l-2 -1l-1 1.5l0 1l-1 1l-2.5 0l-1 -1.5l0.5 -1.5l2.5 -2.5l1.5 0l0 -1.5l-1.5 0l-0.5 -0.5l0 -1.5l1 -1l1.5 1l1 -0.5l-0.5 -1.5l-3 0.5l-1.5 -2l2 -1.5l1.5 0l3 -3.5l1.5 0l2 -1.5l2.5 1l2 0l2.5 -3.5l0 -2l0.5 -0.5zM1038 460.5l-1 0.5l-0.5 4.5l1.5 -0.5l0 -2.5l0.5 -0.5zM739.5 460.5l-0.5 2.5l1.5 2l1 0l0 -0.5l1 -0.5l1 1.5l2.5 2l2 0l-1.5 -3.5l-2.5 -2l-0.5 -1.5zM797.5 459l0.5 1.5l2 0l0.5 -0.5l-0.5 -1zM494 462l1.5 -3.5l1 -1l3 1l3 -2l1 1l0.5 2l0.5 0l1 1.5l1 0l1 -1.5l2.5 0.5l0.5 -0.5l0 -2l1 -1l1 1l0 1.5l1.5 2l0 1.5l-4 2.5l-1.5 0l-1 -1l-2.5 -1l-7 0l-1 1l-1 0zM892 455.5l-0.5 0.5l0 1.5l2 2.5l1 0.5l0.5 -0.5l0 -2.5l-2 -2zM765 455.5l-0.5 0.5l0 2l0.5 0.5l2 -0.5l0.5 -1.5l-1.5 -1zM633 455l2 2.5l0 1.5l-0.5 0.5l0 2.5l-2 1.5l-1.5 -2l0 -2l-1.5 -1.5zM774 454.5l-0.5 0.5l0.5 3l-1 1l-2 -0.5l-0.5 4l0.5 0.5l2.5 0l2 1.5l2 0l0.5 -1l-1.5 -0.5l-1 -1.5l1 -1l2.5 -1l0.5 -1l-0.5 -1l0 -2.5l-1 -0.5zM873 454l-0.5 1l1 1.5l0 1l-1 1l0.5 1.5l3 -0.5l1 -2l1.5 0l0 -1l-1.5 -0.5l-1.5 -2zM923.5 452.5l0.5 1l-0.5 2l2 0.5l0.5 -0.5l0 -2.5zM587.5 452l1.5 1.5l0 2l-0.5 0.5l-3 0l0.5 4l1 2.5l-1.5 2l-1.5 0.5l0.5 4l-2 2l-2.5 1l-1.5 1.5l-2.5 0l-1 1.5l-2 -1l-4.5 0l-0.5 -0.5l0 -4l1 -1l2 1.5l0 -2l0.5 -0.5l2.5 0l2.5 -1l3.5 -4l0 -1l-3 0l-0.5 -0.5l2 -1l1 -2l1.5 -0.5l0 -2l1.5 -1.5l0.5 0.5l1.5 0l1.5 -2.5zM554 453.5l4 -2.5l2 0l1 0.5l1 1.5l-2 1.5l0 1.5l1 0l1 -1l1.5 0l1 1l0 1l-3 3l-1.5 0l-0.5 -0.5l0 -2l-2.5 -0.5l-3 -2.5zM671.5 451l-1 0l-0.5 1l0.5 1l-0.5 3.5l0.5 0.5l1 -0.5l-0.5 -2l2.5 -2l0 -0.5zM654.5 451l0 2.5l1.5 2l0.5 0l0.5 -1l-1 -3.5zM997 450.5l-0.5 0.5l0 1.5l1 0l1 1l0 3l-3.5 4l-1.5 -1l-0.5 -1.5l-2.5 0.5l-0.5 1.5l1.5 0l3 2.5l2.5 3.5l2 0l2 -3l2.5 0l0.5 -1l-2 -1.5l0.5 -3l-2 -1.5l0.5 -1l0 -2.5l-1 -1zM802.5 450.5l0 3l1.5 2l1 -0.5l0.5 0.5l-0.5 2l0.5 0l2 2.5l2 0l-0.5 -1.5l-1.5 -1.5l1.5 -1.5l-0.5 -1.5l-1 -1l-2.5 1l-1 -1l-0.5 -2zM954.5 448l0 1.5l0.5 1l2 1.5l0 1l-1.5 2l-2.5 0l0.5 3l1 0l4 2.5l1.5 0l1 1l0.5 0l0.5 -2.5l0.5 -0.5l1.5 0l1.5 2l2.5 0.5l1.5 1.5l0 2l-1 1.5l-3.5 -0.5l-2 1.5l0 0.5l2 1.5l2 0l0.5 0.5l0 2l-0.5 0.5l0.5 1l5 0l1 1.5l-0.5 0.5l0 1.5l3 -0.5l2.5 -3.5l1.5 1.5l1.5 0.5l-0.5 -2.5l-3 -2.5l0.5 -1l2.5 -1l0 -3l-2.5 0l-3 3.5l-3 -2l0.5 2.5l-1 1l-2 -1l0 -1.5l2 -2l0.5 -2l-3 -3.5l-2 -5.5l0.5 -1l2.5 -2l0 -1l-2.5 0l-1.5 -1l-1 0l0.5 2l-1.5 1l-1.5 2.5l-1 0.5l-1 -1l1 -3l-1.5 0l-1 -1.5l-3 0l-1 -1.5zM986 447l-1 1l0 3l-1.5 1.5l-2.5 -0.5l-0.5 1.5l1.5 2l2.5 1.5l3.5 1l2.5 -2l2 -0.5l0 -1l2 -2.5l-1.5 -2.5l-2 1l-1.5 -1.5l-0.5 -1.5zM793.5 447.5l-0.5 1l2 2l1 0l0 -3l-1 -0.5zM876.5 447.5l0.5 0.5l3 -1l0 -1l-2.5 0zM844 446l1 2l-1 3l1.5 0l1.5 1.5l1 0l1 -1.5l-1 -0.5l-1.5 0.5l-1 -1l0 -1.5l1 -2zM450.5 447.5l3 -2.5l1.5 0.5l0.5 3l2 0.5l1.5 2l-0.5 3l2 1l0 3l1 1.5l-2 1.5l0 1l2.5 0l2 2l1.5 0l1.5 -4l2 -1.5l0 -1.5l-0.5 -0.5l0.5 -2.5l-1 -1l0 -3l0.5 -1l2 -1l2.5 2.5l-0.5 1.5l-1.5 1.5l0 1l1 1l2 0l1.5 1l-0.5 1l0 3.5l-1 1.5l0 1.5l1 1.5l0 2l-1.5 4.5l0 2l1.5 1l0.5 2l1 0.5l1.5 0l0 -2.5l1 -1.5l1 0.5l0 1l1.5 0l0 -2l1.5 -1.5l0 -2.5l1.5 -1l2 -2.5l2 0l3 -2.5l0.5 0.5l-0.5 3l-3 1.5l0 3l-0.5 0.5l-2 0l-1.5 2l1 3.5l2 -0.5l1.5 1.5l0 3.5l-2 1.5l-0.5 -0.5l-1.5 0l-3.5 4l-1 0l-1.5 -2l-0.5 0l-1 1.5l-2.5 0l-1.5 2l-2 -6l0 -1l1.5 -1.5l0 -2l-0.5 0l-1 -1.5l0.5 -1.5l-1 -2l0.5 -3.5l-1.5 -1l-9.5 -0.5l-1 -1.5l-2 -0.5l-1 1l-1.5 -1.5l-3.5 0l-0.5 -0.5l2 -1l0 -1.5l-1 -1l0 -1.5l1 -1l2.5 0l0.5 -0.5l0 -4l-1 0l-2.5 -3l-1 0l-1.5 -1.5zM1015.5 444.5l-0.5 0.5l0 1l1 1l-0.5 3l1 0l1.5 -1.5l-1 -4zM859.5 446l0.5 1.5l2.5 2l2.5 0l1.5 -2l-0.5 -1l-2 -1l0 -1zM837.5 444l-0.5 0.5l-0.5 3.5l2 0.5l1.5 -2.5l0 -1.5zM996 443.5l0.5 2.5l2.5 2l2 0.5l0.5 -3l-0.5 -0.5l-3 0.5l-1 -1.5zM794 443.5l-2.5 0.5l-0.5 1.5l3 -0.5zM778.5 445.5l0.5 1l1 0.5l2.5 -2l1.5 0l0.5 -1.5l-2.5 0l-2.5 -1.5l-1 2zM612.5 441.5l1 0l1 1l0.5 4.5l3 1l0 1l3 4l0.5 2.5l1 1.5l-2 2l-1 2l0 2l1.5 1.5l0 1l-1 1l0 1.5l2 1l1 1.5l-2.5 2l-3 0l-1 -0.5l-0.5 0.5l0.5 2l1 1l1.5 0l1 -0.5l0.5 -1l2.5 0l1 -0.5l-0.5 -2l1.5 -1l0 -1.5l1 -2.5l3 2.5l-0.5 2l-2 2l-1 0l1 3l-2.5 1.5l-2.5 3l-1.5 -2l-3 0.5l-2 -2.5l-1 0l-2 2l-1.5 -0.5l0 -1.5l0.5 -0.5l0 -4.5l-0.5 -1l0.5 -1l2 -1.5l0 -1l-1.5 -0.5l-0.5 0.5l-2.5 0l-2 1l-1.5 -1.5l-1 0l-1.5 -1l1 -1.5l2 0l0.5 -0.5l2.5 1l-0.5 -2l1.5 -1.5l2.5 0.5l0.5 -2.5l1.5 -1.5l2 2.5l1 -0.5l0 -1.5l-1.5 0l-1 -1l0.5 -1.5l0 -4l-0.5 -0.5l-1 0l-1 1.5l0 1l-2 1.5l-3 -0.5l-1 -1l0.5 -0.5l0 -2.5l1.5 -1.5l1 0.5l-0.5 2.5l1.5 0l0.5 -0.5l0 -4.5l-1 0l-1.5 1.5l-2.5 0l-0.5 0.5l-1 -0.5l0 -1.5l2 -2l2 -1l1.5 0zM936 441.5l-4 4l-1 0l0.5 2.5l-1 2.5l-1 1l0 1l3.5 1.5l2 0l1 2l2.5 -1l0.5 1l-0.5 0.5l-0.5 3.5l2 1.5l0.5 2l1.5 -0.5l1.5 -2l0 -1l-1.5 -1l-1 -1.5l1 -1l2 0l1 1l2.5 0l1 -0.5l3 -4.5l0 -1.5l-3 -2.5l0.5 1l-2.5 1.5l0 3l-0.5 0.5l-1.5 0l-1 -1.5l-0.5 -5l-3.5 -2.5l-0.5 -2.5l-1 -1zM1048.5 440.5l-0.5 0.5l-2.5 0l-1 0.5l-2.5 2.5l0 1l0.5 0l1 1.5l-1 1l-2 -0.5l-1.5 -1.5l0 -1l1 -1l0 -1.5l-0.5 -0.5l-1 0.5l-3 0l-3 2.5l-1 -1l-1 0l0.5 2l-1.5 2l-3 -1l1 4.5l-3 4l2 0.5l1.5 3l3.5 0l1.5 -2.5l3 0.5l0.5 -2l1 -0.5l0.5 -1l-1 -2l0 -1.5l1 -1l2 0l2 1.5l2 0l2 -1l1.5 0l1 1zM948 442l0 1.5l0.5 0.5l3 -1l1.5 1l1 0l0 -1l-1.5 -0.5l-1.5 -2zM656 440.5l0 0.5l3 0.5l0.5 -1l-1.5 -1zM585.5 443l0.5 2l-2 1.5l0 1.5l2 0.5l0.5 1.5l-0.5 0.5l-2 0l-2 3l-1.5 -0.5l-1 -1.5l-1 -0.5l-1 1.5l0.5 2l-1 1l-2.5 0l-1 -2l-1.5 0.5l-4 0l-2.5 1l-1 -1.5l-2 -1.5l0.5 -1.5l2.5 -3l0 -2.5l-0.5 -0.5l0.5 -0.5l1.5 1l1.5 -1l1 0l1.5 1l1 0l2 2.5l1 0l-1 -3l-2.5 -1l1 -1l1.5 0l2.5 -3.5l2 1.5l-1 3l1.5 1.5l1 0l1.5 -1.5l1.5 0l1.5 -1zM1032.5 438.5l-2 0.5l0 2l0.5 0.5l2 -1.5zM888.5 438l-2 1.5l-1 -0.5l-2.5 0l-1.5 1.5l0 1l2.5 1l2 -2l1.5 -0.5l1 -1zM485 437.5l3 2.5l3.5 0l2.5 1.5l-0.5 1.5l-2.5 0l-0.5 0.5l0 2l2.5 0l1 1.5l0 1.5l-2 1.5l0 1l-1 1.5l0 1.5l-1.5 2l1 0.5l4.5 -5l1 0l1 1.5l-0.5 1l-2 1l0.5 2.5l-1 1l-1.5 0l0 1l-1.5 2l-1.5 0l-1.5 -1.5l0 -1.5l-2 -1.5l1 -3.5l-1 0.5l-1.5 -0.5l0 -1l2.5 -2l0 -1l-1.5 -0.5l-1 -1l0 -1l3 -3.5l0 -1.5l-3 -2.5l0 -1.5zM960 437l-0.5 1l1 1l0 1.5l1.5 0l1 -1l0 -1zM787.5 436l-1 0l-1.5 2l0.5 1l1.5 0zM833.5 436l0.5 1.5l1.5 0l0.5 -0.5l0 -1.5zM650 435.5l0 1.5l0.5 0.5l-0.5 2l1 1.5l1 0l1.5 -3zM719.5 434.5l-1.5 0.5l-0.5 4.5l1 1.5l3.5 -3l0 -1.5zM701 437l0 2l3 2l1.5 0l0 -2.5l0.5 -0.5l2 1.5l3.5 -1l-0.5 -1l-1 0l-2 -2l-2.5 -1.5l-1.5 0l-1 1.5l1.5 2l-0.5 1l-1 0zM677 434l-0.5 1l2.5 2l0.5 -0.5l0 -1.5l-1 -1zM957.5 433.5l-2.5 0l0 1l-2.5 2.5l0 1l0.5 0.5l3 -0.5l0.5 -0.5l0 -1.5l1 -1zM785 433.5l-2 0l-2 -1.5l-1.5 0l-0.5 1l0 3l-3.5 4l2 -1l2 0l3.5 -4l1.5 0zM550 431.5l2.5 0l3.5 2l3 3.5l0.5 4l3 2l-0.5 1l-4 -0.5l1 2l-1.5 1l-2 2.5l-1 0l-1.5 -1.5l2.5 -3l-3 -2.5l0.5 -5l-0.5 -1l-3 -2.5l0 -1.5zM685 431l0 1l4 3l4.5 0.5l0 -1l-2.5 -1l-1.5 0l-1.5 -2zM662.5 431l-0.5 1l1 1l0 2l1 1l1 0l0.5 -0.5l-0.5 -4.5zM520 433l1.5 -1.5l2.5 0.5l1 -1.5l4.5 2.5l2 0l2 2.5l0 1.5l0.5 0.5l-2.5 2l-2 0l-0.5 0.5l-4.5 -0.5l-1.5 -1l0 -2.5l-0.5 -1l-2 -0.5zM1005.5 430l-0.5 2.5l1.5 0.5l1 -1l0 -1l-1 -1zM585.5 429.5l1 0l1 1.5l2 1.5l0.5 1.5l2.5 0.5l0.5 0.5l0 1.5l1 0.5l1 1.5l2.5 -0.5l1 1l1.5 0l1 1l0 3.5l-1 1l-1 0l-0.5 1.5l-2 2l-2 0l-0.5 -0.5l0.5 -3.5l-3.5 1.5l-3.5 -4.5l1.5 -1.5l0 -1l-1 -1l0 -1.5l-1.5 1l-1.5 0l-1 -1l-0.5 -2.5zM477 429.5l2 0l3 1.5l1.5 1.5l0 1.5l-1 1l-1.5 0l-0.5 0.5l0 2l1.5 1.5l-0.5 1l-1 0l-2 -1.5l-2 0l-2 -3l1.5 -2.5l0 -2.5zM911 431l1 0.5l2.5 0l0.5 -0.5l0 -1l-2 -1l-1 0zM733.5 429.5l0 0.5l2 0l0.5 0.5l2 0l0.5 -1l-2.5 -1l-1.5 0zM764.5 428.5l0.5 3l3.5 -0.5l0 -0.5l-2 -1.5l0 -1l-1.5 0zM717 428l-1.5 0l-3 1.5l0 1l1 1.5l-0.5 1.5l2.5 0.5l0 -1.5l1.5 -2zM903 427.5l-1 1l0 1.5l1 2l-1 3l1 1l0.5 2l1.5 2.5l1 0.5l2.5 0l0.5 0.5l0 3l-1.5 1.5l0 1l3 0l0.5 -0.5l4 0.5l0.5 -2l-2 -1.5l1 -1.5l0 -1l-1 -1.5l-2.5 0.5l-2 -2.5l0 -2.5l-4.5 -5l0 -2.5zM850 426.5l-0.5 1.5l2 2l1 0l-0.5 -2.5l-1 -1zM1042.5 426l-1 0l-3.5 2l-1.5 2.5l-2 0.5l0.5 3l-1 1l0 2l1 -0.5l0 -1.5l1 -1l1 0l1.5 2l0 3l0.5 1l2.5 -2l2.5 -0.5l1.5 -1l0 -2.5l-0.5 -1l-3.5 1.5l-1 -0.5l-1 -1.5l0.5 -3l0.5 -0.5l2 0zM960 425l-2.5 1l0 3.5l0.5 0.5l1.5 -1l0 -1l1 -1.5zM1003.5 424.5l-0.5 3l0.5 1l1 0.5l0 -4.5zM637 423.5l0.5 1.5l-2 1l0 2l1 1.5l-1 1.5l-2 0.5l-1.5 -1.5l-0.5 -2l-1.5 -2.5l3 -2zM611 423.5l0.5 0.5l-0.5 2l1.5 1l1 1.5l-1.5 1l-0.5 1l2 2.5l0 1.5l1.5 1l-0.5 1.5l-1.5 0.5l-1 -1l0 -1l-1.5 0l-2.5 1.5l-7 -1l-1 1.5l-0.5 -0.5l0 -1.5l1.5 -2.5l0 -2.5l0.5 -0.5l3.5 0l1.5 -1l0 -2l2 -1.5l0 -1l1 -1zM489.5 423.5l1 0l1.5 2l1 0l2 2.5l0 0.5l-2 1.5l0 1.5l-1 1l-2.5 -2l0 -1l1 -1.5l-1.5 -2.5l0 -1.5zM1025.5 422l-1.5 1l-0.5 3l1 1l0 1l-1 1.5l-1 0l-2 -1.5l-2 0l-2.5 -2l-2.5 0l-0.5 0.5l0.5 4.5l-1 1l-0.5 2l1.5 1.5l2 0.5l2 3l2 0l2.5 4l0.5 0l1 -1.5l-2 -3l-1 0l-1 -1.5l-1 0l-2.5 -1.5l0 -2.5l0.5 -1l1.5 -1l2.5 0.5l1.5 1.5l2 0l1.5 -1.5l1.5 0l0.5 0.5l1.5 -0.5l-2 -2.5l0.5 -3.5l-1.5 -1.5l0 -1.5zM546 421.5l0.5 0.5l0 3.5l-3 1l0.5 4l-1.5 1l-1 2.5l-2.5 0.5l-1.5 -2l2.5 -3l-1.5 -0.5l-1 -1.5l1.5 -1.5l1 0l0 -1l1.5 -2l2.5 -1.5zM997 419.5l0 2l1.5 2l1.5 1l1 -1l0 -1l-0.5 -0.5l-1.5 0l-1 -1l0 -2zM807.5 420.5l-1.5 2.5l0 1l2.5 4l0 2l-1 1.5l0 1.5l1 0.5l0 4l-1 1l-4 0l0 1l1.5 1l0.5 3l4.5 -1.5l3.5 -4.5l1.5 1l-1.5 3.5l0 1.5l0.5 0.5l2.5 0.5l1 -1.5l0 -1l1 -1l1 0.5l0 2l1 0l1 1.5l-2.5 2.5l-2.5 0l-0.5 0.5l-1.5 -0.5l-0.5 1l1 2l2 1l2 0l1 1.5l0 1l-4 3.5l0 1l1.5 1l0 2l-0.5 0.5l0.5 1.5l2.5 -1.5l1 0l1 1.5l0.5 0l2 -2l2 -1l-0.5 -3.5l-1.5 -2l1 -1l2 0.5l0 -3l2 -1l0 -1l-1.5 -3l-1.5 0l-1 1.5l-1.5 -1l-0.5 -1l0 -3l4 -3.5l1 0l3.5 2.5l0.5 -0.5l0 -3.5l-3.5 0.5l-1 -1l0 -1l2 -2l0 -1.5l-3 0l-1.5 -1.5l-0.5 -1.5l-2 0l-1.5 -1.5l0 -1l1.5 -1l0 -1l-1.5 0l-2 -1.5l3 -2.5l0 -1.5l-2.5 0l-1.5 1l-1 0l-1 -2l-0.5 0l-4.5 3.5l-2.5 -0.5l-1 -1.5zM944.5 419.5l0.5 3l1.5 3l3 0.5l2 -2l1.5 -0.5l1 0.5l0.5 -0.5l0.5 -3l-1.5 0l-2.5 1.5l-1 0l-2 -3l-3 -0.5zM883.5 418l-1.5 0.5l-0.5 2.5l-2 2l-1 -0.5l0 -1l-0.5 0l-0.5 1l-3 -1l0 1l1.5 0.5l1 2l2 2l0 1l-1 1l0 2l0.5 0.5l1.5 -0.5l0 -1l1.5 -2l0 -1l-1 -1l1.5 -1l-1 -2.5l1 -1l1 0l1.5 1l0 2l0.5 0.5l2.5 -2l0 -1.5zM828 417.5l-2 2.5l1 6l2.5 2l0.5 2.5l2.5 -1l0 -1l-2.5 -2.5l-1 0l-2 -3l2.5 -3.5l0 -1zM985.5 416l-1.5 0l-1.5 1l-0.5 1l0.5 0.5l2 0l1 -1zM783.5 415.5l0.5 2.5l1 1.5l-1.5 1.5l-3 -0.5l-1.5 1.5l0 1l0.5 0.5l4.5 0l0.5 0.5l0 2.5l2 0.5l1.5 -1.5l0.5 -2.5l-2 -1.5l0 -1.5l-1.5 -1l0.5 -2zM733 419l0 1l1 1l4 0l1 -2.5l0.5 0l1 1.5l3 0l0.5 -0.5l-2 -3.5l-4 0l-0.5 -0.5l-1.5 0zM907 415l0 3.5l1 0l1.5 -1l4.5 0l0 -1.5l-2.5 0l-3 -1.5zM1048.5 414l-3 2.5l-0.5 -0.5l-1.5 0l0 0.5l3.5 3l1.5 2.5l-0.5 3l-1.5 1.5l0.5 1.5l0.5 0l1 -1.5zM896 412.5l0.5 5l1 0.5l1.5 2l-1 3l2 1.5l0 1l1.5 0l0.5 -1.5l-1 -1.5l0 -3.5l-1.5 -1.5l1.5 -4.5zM691 412.5l-3.5 1l0 1.5l2 2.5l1.5 -0.5zM772 413.5l-1.5 -1.5l-1 0l-1 1.5l-0.5 2.5l2.5 0l1.5 -1zM665.5 411.5l0.5 2.5l-1.5 1.5l0 2.5l-0.5 1l1 0l2 2.5l0 3l1 0l1.5 -1.5l0 -1.5l0.5 -0.5l-1.5 -2.5l0 -2l-0.5 -0.5l0.5 -3.5l-1 -1zM963 412l0.5 1.5l2 -0.5l1.5 1l-0.5 -3zM810.5 410.5l-1.5 0l-0.5 0.5l-5 0l0 1l2 1.5l0 1l-2 2.5l-2 1l-0.5 1l0 3.5l3 -1.5l0.5 -1l2 -1.5l1.5 1l-1.5 -2.5l1.5 -2.5l1 0l1 2l1 0l0.5 -2l-1.5 -1.5zM652 410l0 1.5l1.5 0.5l0.5 2l1 1l3.5 1.5l-2 -4l-3.5 -2.5zM763 409l-1 0l-2 1.5l0.5 3l1 0l1.5 -1zM781.5 407.5l0 2.5l1 0.5l1 -2zM539 410.5l0.5 0.5l-0.5 1l-1 0l-3 2l0.5 2l-2 1.5l0 1.5l-0.5 0.5l-2.5 -0.5l0.5 1.5l-2.5 3l-1.5 0l-0.5 -0.5l0.5 -6l-1 -2l0.5 -0.5l2.5 0l0 -2l1.5 -1.5l0.5 -3l1.5 -1l2.5 3zM706.5 406.5l-1.5 0l-1.5 2l0.5 1.5l3 -1l0 -2zM960 406l-2.5 1l-1 1.5l-2 0.5l0 1.5l1.5 1.5l5.5 0l0 -1l-1.5 -2.5zM749 406.5l0 2l0.5 0.5l-1 1.5l-1.5 0.5l0 2l3 -1l1 1l0 2.5l-2.5 2l0 1l0.5 0.5l1.5 0l1.5 -1l2 0l1 1l1 0l1 -1l0 -1.5l-1 -2l0 -2l1 -0.5l0.5 -1l-3 -1l-1.5 -1.5l1 -1.5l0 -1l-3 2l-1 -0.5l0 -1.5zM480 404.5l2 2l0 3.5l-1 2l0.5 0.5l3 0l1 1l0 1l1.5 3l-1 2l-3.5 -0.5l-1 2l3 0.5l2.5 -1l1.5 -2l1 0l1 1l0 2l-1 1l-1.5 -0.5l-0.5 1l-2 1.5l-1.5 -2l-1.5 0.5l-1.5 -0.5l-1 2.5l-2.5 -0.5l0.5 1l-0.5 2.5l-1.5 1.5l-2 -1l-6.5 -0.5l-0.5 0.5l0 1.5l1 0.5l1.5 -0.5l0.5 1l-2.5 2l-2 0l0 2l-1 3.5l-2 2.5l-1 -0.5l-5 0l-0.5 0.5l-1.5 -1.5l0.5 -0.5l0 -1.5l-1 0l0 1.5l-1 0.5l-1 -1l1 -1.5l0 -3l1.5 -0.5l0 -1.5l2 -2l0 -1.5l-3.5 -3.5l-2 0l-2 -1.5l4.5 -4l1 1l0.5 2l4 0l0.5 -1.5l-0.5 -1.5l-2.5 -1.5l0 -1l2.5 -1.5l1 2l1.5 1l0 1.5l1.5 2l0 2.5l1.5 0l3 -2.5l2 0l0 -2l-1.5 -2.5l1.5 -1l2 0l1 1l0.5 2.5l-1 1.5l1 0.5l1.5 -1.5l0.5 0.5l0 2.5l1.5 0.5l0 -3l2 -2.5l1.5 -0.5l0 -1l-2 -2.5l1.5 -2.5l-2 -1l-3 0l-1.5 -1.5l1.5 -1l2.5 1.5l2.5 -2.5l0 -2l-0.5 -0.5zM691.5 405l0 1l3 2.5l-0.5 2.5l1.5 0.5l0.5 -1l-1 -1.5l1 -1l0 -2.5l0.5 -1l-1 0l-1 1zM605.5 405.5l0.5 -0.5l2 0.5l2 -1.5l0.5 0l1 1.5l3 0l1 -0.5l1.5 1.5l0.5 2l2 1.5l0 3.5l1 0l2.5 2.5l0.5 1.5l1 0.5l0 2l-1 0.5l0 1l1.5 0l1.5 -1l4 0l0.5 1l-5 4.5l-3 -0.5l-1 1l-3 -0.5l-0.5 -1.5l1.5 -1.5l-0.5 -2.5l1 -1.5l-2 -2l0 -3l-1 0l-2 -2l0 -1.5l-1.5 -2l-1.5 0l-1.5 -1.5l-2.5 0.5l-1 -1l-1.5 0zM733 402.5l1 2l2.5 0l1 0.5l-1.5 -2.5zM724 404.5l-4.5 0l-3 -2l1 3l-1.5 1.5l-3 1l-1.5 1.5l-3 0.5l-0.5 5l1.5 0.5l1 -1l1.5 0l3.5 2l0.5 -0.5l-0.5 -2.5l1 -1l2 0l0.5 0.5l1.5 0l0.5 -0.5l0 -1.5l-1 -1l-1 0l-2 -2l1 -1l1.5 0l0.5 0.5l3.5 -0.5l0.5 -0.5zM898 405l1.5 0.5l1 -0.5l2.5 -3l1 0.5l1.5 0l0 -0.5l-3 -1l-2.5 0zM849.5 401l0 3l3 -1l0 -1zM795.5 401l0 0.5l1.5 1l0 1l1.5 1l0.5 -0.5l0 -1.5l-2 0l-0.5 -1zM973.5 400.5l-1 0l-1 1.5l0.5 4l1.5 -1l-0.5 -2l1 -1.5zM953.5 407.5l-3 -3l-1.5 0l-3 -2l-3.5 0l-0.5 -1l-1.5 0l-2.5 1l-1.5 -1l0 -1.5l-1.5 0l-1 2.5l-2.5 -1.5l-1.5 1.5l-0.5 2.5l1.5 0l2.5 -2l2.5 3l-1 1l-1.5 0l-1.5 1.5l-1.5 0l0 1l-1 1l-1.5 0l-3 -2.5l1 -0.5l0 -1l-1.5 0.5l-1 -1l0 -3l-1.5 -1.5l-3.5 -1l-1 1.5l-2 1.5l0 1l1.5 0l1.5 -1l1 1l0.5 2l3.5 2.5l1.5 4.5l2 2l0 1.5l-4 1.5l-0.5 -0.5l0 -2l0.5 -0.5l-0.5 -1.5l-2 1l-2 0l-2 -1l-1.5 0l-0.5 1l2 0l1 1l0.5 2.5l-1 1.5l0 1.5l2 0l2.5 -1.5l0.5 0.5l-0.5 1.5l2 3l3 2.5l1.5 0l1.5 -2l2 -1.5l0 -1l-0.5 -0.5l0 -1.5l-3.5 -1.5l-1 -1.5l0.5 -0.5l2 0l-1.5 -2.5l0 -1l1 -1l3 -1l0 -2.5l1 -1l1 0l1 1l-2 3l1 1l1.5 0l2.5 -2l-1.5 -2l0.5 -0.5l3 -0.5l2.5 2.5l3 -0.5l1 -1l1 0l2 2l1.5 0l2 -2.5l1 0zM993.5 399.5l0 1.5l1 1l1 0l0.5 -2l-0.5 -0.5zM820 406.5l0 0.5l1.5 1l3 1l3 -0.5l2 -2l1.5 0.5l0.5 1.5l-2 3.5l-0.5 -0.5l-3.5 0l-2 1.5l0 0.5l1.5 2l1.5 -1l1 0l1 1.5l1 0l1 -1l2 0.5l2.5 3.5l2.5 -0.5l0 -1l-0.5 0l-1 -1.5l1 -3l0.5 -0.5l4 -0.5l0.5 -0.5l0 -1.5l1 -1l1 0l0.5 0.5l0 3l0.5 0l1 1.5l-2 2.5l-0.5 2.5l-1 1l-3 0l-2 1.5l0 1.5l2 1l0.5 2.5l1 0l1.5 2.5l1 0l1.5 -1.5l0.5 -2.5l-1 0l-0.5 -1l2 -1.5l2.5 -0.5l0.5 -0.5l0 -2.5l1.5 -1l1.5 1l0 1l-1 1l0 3l3.5 0.5l0.5 -0.5l0 -1.5l2.5 -2l0.5 0.5l1.5 0l0 -1.5l-1 0l-2 -2.5l0 -1l1 -1l2 0l1 1l0 2l3.5 3.5l0.5 1.5l3 2l0.5 1.5l2 -0.5l0 -0.5l-1 0l-1.5 -1l0.5 -2.5l-1 -1.5l0.5 -2.5l1 -0.5l2.5 -3l0 -1.5l-2.5 -2l-1.5 0.5l0 2l-1 1l-1 -0.5l-1.5 -2.5l-1 0.5l-1.5 -0.5l-1.5 2l-1 0l-1.5 -1.5l-1 0l0 1l-1 0.5l-1 -1.5l0 -2l-1 -1l-3.5 -1l-2.5 1.5l-1 0l-3 -2l-2 -5.5l-1 0.5l-1.5 2.5l-3.5 0.5l-1.5 -1.5l1 -3l-0.5 -2.5l-0.5 0l-0.5 1.5l-2 0l-1 -1l-2.5 -0.5l1.5 3l2.5 1.5l-1 1.5l-3 -0.5l-3.5 2.5l-0.5 0l-1 -1l0 -1l-0.5 0zM703 398l-0.5 1l1 1.5l1.5 0l0 -1.5l-1 -1zM797.5 397l0 1.5l1 1l1 0l0.5 -1.5l-1 -1zM536.5 397.5l3 1l1 -0.5l1 -1.5l2 0l3 2l0 1l-2 1l0.5 1l1 -0.5l2.5 0l1 1l-0.5 2l1 1l2.5 -1l3 3.5l0 5.5l-0.5 1l3 1l0 1l-1.5 2l0 2l-0.5 0.5l-0.5 -0.5l-2 0l-1.5 1l-1.5 0l-0.5 -1l-1.5 0l-1 -1l-3 -1l-0.5 -3l2 -1l0 -2.5l-1.5 -2l0.5 -1.5l-0.5 -0.5l-7 0l-0.5 -0.5l0 -2.5l-1 -1.5l0.5 -1.5l-1 -2l0 -1zM1034 397.5l-0.5 -1l-1.5 0l0 0.5l-2 1l0 0.5l3 0.5zM898.5 397l-0.5 -0.5l-1.5 0l-2 3l-0.5 -0.5l-2 0l0 0.5l1.5 1.5l2 -0.5l0 -1l1 -1l1.5 0zM846 396.5l-0.5 0.5l0 3l1.5 0l1 -0.5l0.5 -2.5zM668 396l0 1.5l1 0.5l3.5 0l1 -0.5l0 -1l-1 -1l-2 0l-0.5 0.5l-1.5 -0.5zM954 394l1 2l-2 1l0 0.5l3.5 0l0.5 -1.5l-1.5 -1l0 -1zM800 394l1 3l1 1l3 0.5l-0.5 -1l0.5 -2l-1 -0.5l-2.5 0zM640 393.5l-1.5 2.5l1 2.5l-1 1l-2 0l-2 2.5l0 1.5l-1 2l-4 0.5l-2 3l0 1.5l1.5 0.5l1.5 2l0 1.5l-0.5 0.5l-1 0l-1.5 -1.5l-0.5 -2l-2.5 -0.5l-5 -3l0 -1.5l1 -1l3 0l1.5 -1l2 0l0 -3l-2 0l-1 -1l0.5 -1.5l2 -2.5l1 0.5l0.5 2l2 2l1.5 0l0 -2.5l1 -1l1 0l2 -1.5l1.5 0l0.5 -1.5l1.5 -1.5zM971 394.5l0.5 1.5l2 -1l2.5 0.5l0 -0.5l-2.5 -2zM808.5 393l-1.5 1.5l0 0.5l1 0l0.5 1l-2.5 3l0 1l2.5 3.5l-1 2.5l1 1.5l1.5 0.5l1.5 -1l0 -2.5l-1.5 0l-0.5 -0.5l0 -1.5l1 -1l2 -0.5l2 -2l1 0l0.5 -0.5l0 -2.5l-2 0l-0.5 0.5l-3 -0.5l-1.5 -1.5l0 -1.5zM679.5 393l0 1l1.5 0.5l1.5 1.5l5 -0.5l0 -1l-1.5 -1l-5 0.5zM494.5 392l1 1l0 1l1 0l1.5 1l-1 4l0.5 3l-0.5 0.5l-1.5 -0.5l-1.5 0.5l0 1l2.5 2l0 1l-1 1.5l-2 0.5l-1 -1l-2 0l-1 -1l2 -2.5l0 -1.5l-4.5 -5l0 -1l0.5 -0.5l1.5 0l1.5 -1.5l2.5 -0.5zM983 392.5l0 1l1 -0.5l0.5 0.5l2 0l0.5 -2l-3 0zM588.5 392l0 1.5l3 0l0 -0.5l-2 -1.5zM841.5 391.5l0 1l1.5 0l0.5 0.5l1 -0.5l-0.5 -1.5zM722 390.5l2 0l2.5 3l-1.5 4l-3 0.5l-1 -1l0 -1l1 -1l0 -2l-0.5 -0.5l0 -1.5zM765 390l-1 0l-2.5 2.5l-2 -1l0 1l1.5 1.5l1.5 3l-0.5 1l-1 0l-2.5 -2l-1.5 0l-0.5 0.5l2 3.5l-0.5 0.5l0 2l-1.5 1l-0.5 2.5l1.5 -0.5l4 0.5l0.5 -0.5l2 0l1.5 -1l1 -3l0 -3l1 -0.5l0 -1.5l-0.5 -0.5l0.5 -3l-1.5 0l-0.5 0.5l-1 -1l1 -1.5zM1043 388.5l-0.5 2l1.5 1l0.5 1l1.5 0l0 -1l-1.5 -2zM604 388l1 1l-1 1.5l0.5 4l-1.5 1l0 1l1 1.5l0 2.5l-1.5 2l-1.5 0.5l-1 -1l1 -2.5l0 -1.5l-1.5 -1.5l0 -2l-2 -2l4 -3l1 -1.5zM923.5 388.5l0.5 2l1 0l1 1l1.5 0l-0.5 -2l-1.5 -1.5l-1.5 0zM898 387.5l1.5 3l1 0l-0.5 -2.5l-0.5 -0.5zM992 387.5l-1.5 -0.5l-1.5 2.5l2.5 0l0.5 -0.5zM783.5 387.5l2 -1l2 1l1.5 0l1 -1l1 1l-1 4.5l-1.5 1l-2.5 -2l0 -1zM464 387l2.5 -0.5l1 1l0 1l2 1.5l0 3l-0.5 0.5l-2 0l-1 -1l-2 0l-1 -1l-0.5 -2zM592 386l4.5 2.5l-0.5 3l1 1.5l-2 1.5l0.5 1l-0.5 3.5l-2 1l1 2l-1 1.5l-1 3.5l-2 1.5l-0.5 1.5l0.5 2l-1 1.5l-1.5 0.5l-0.5 2.5l2 1l1.5 -0.5l2.5 0.5l1.5 -1l4 -0.5l1 -2.5l0 -1.5l-0.5 -0.5l-1.5 0l-0.5 -1l1.5 -1.5l-0.5 -3l2.5 -3l1.5 1.5l4 2l-1 1l-1 0l-2.5 1.5l0.5 3l5 0l0.5 0.5l-2 3.5l0 2l-0.5 0.5l-1 -0.5l0 -1l-4 0.5l0 1l1.5 1.5l1 0l1.5 1l2 -1l2 1.5l-2.5 1.5l-0.5 2l-1.5 2.5l-2 0l-0.5 -0.5l0 -3l-1 -2l-5 0.5l1.5 2.5l2.5 1l2 2l0 1.5l-0.5 0.5l-2.5 0l-0.5 0.5l-2.5 -2l0 -1l-2.5 -2.5l-0.5 -1.5l-2.5 -0.5l-2.5 -2.5l-1 0l0 3.5l-1 1l-0.5 -0.5l-3 0.5l-2 -1.5l0.5 -0.5l0 -1.5l-1.5 -1.5l0.5 -1l2 0l0 -0.5l-2 0l-0.5 1l-1.5 0l-0.5 0.5l-2.5 -0.5l-1 1l-3 1l-0.5 -1l1.5 -1l0 -1l-2 -1.5l1.5 -2.5l1.5 -0.5l1 -2l1.5 -1l0 -0.5l-0.5 0l-1 1l-1 0l-1 -1l0 -1l2 -1.5l2 0.5l0 -0.5l-2.5 -2l0 -3.5l0.5 -1l1.5 -1l2.5 0l2 -1.5l0.5 -3l1.5 -1l1 -1.5l2 0l3 -3l2 -0.5zM544.5 386l2 3l0 1.5l-2 2l-2.5 0l-1 0.5l-0.5 1.5l-1 0.5l-1 -1l0 -1l-2.5 -2l0 -1l2.5 -1.5l4.5 0zM574.5 385l1 1l0 2l-1.5 2l0.5 1.5l-0.5 2.5l3 1l0.5 1.5l-2.5 2.5l-3 0.5l-1.5 -1.5l0 -1l2 -3.5l0 -4l-0.5 -0.5l1 -1.5l0 -2zM665.5 385l-1.5 0l-1 1l-0.5 2l2 -0.5l1 -1.5zM959 385l-1 1l0 4l0.5 0.5l-0.5 0.5l0 2l2.5 2l-0.5 2.5l2 0.5l1.5 1.5l0 1.5l-1 1l0 1.5l3 2.5l3 0.5l0.5 -1l-1.5 -2.5l0 -1l1.5 -2l0 -2.5l-1.5 0.5l-2 2l-1 -1.5l-2.5 -2l0 -1.5l1 -1l2.5 -0.5l3.5 -2.5l-1 -3.5l-0.5 -0.5l-2 0l-1 -2.5zM896 384.5l-3 0.5l-1.5 1.5l-1 0l-0.5 1.5l-1.5 1.5l-1.5 0l-0.5 -0.5l-2.5 0.5l-2 -1l-0.5 0.5l0 1.5l0.5 1l3 -0.5l1.5 1l2.5 0l1 -1l3.5 0.5l2 -1.5l-0.5 -1.5l1.5 -1zM909 385l-0.5 -1l-1 0l-2 1l0 1l3 0.5zM943.5 384.5l0.5 1.5l1.5 -0.5l2.5 0.5l0 -1.5l-2 -1.5zM614 383.5l-1 1.5l0 1.5l-1 1l-1 -0.5l-1.5 1l-1 0l-2 -1l0 -1l1.5 -1.5l1.5 -0.5l1.5 0.5l-1 -2l0.5 -1.5l1 0zM890 381l1 1.5l2.5 0.5l0 -2l-0.5 -0.5l-2.5 0zM871.5 380l-4 3.5l-1.5 0l-2 -2l-2 1.5l-2 -0.5l0 0.5l1.5 1l-1.5 2.5l0 1l0.5 0.5l2.5 0l2 -1l3 0.5l0.5 1l-2.5 2.5l0 2l1 0l2 2.5l1.5 0l0.5 0.5l-1 1l-1.5 0l-1.5 1l-4 0l-1.5 -0.5l1.5 5.5l-1.5 1l-0.5 -1.5l-1.5 -1.5l-1 0l-2.5 2l-2 0.5l0.5 1.5l1.5 1.5l4.5 -0.5l2 1l1.5 -1.5l2.5 -0.5l1.5 -1l-2.5 -3.5l0.5 -1l2 0l2 1.5l2 -1l0 -3.5l-0.5 -0.5l0.5 -0.5l0 -3l-0.5 -1l1 -1l1 0l1.5 -2.5l-2.5 -1.5l0.5 -4.5zM897 376.5l1 1.5l-2 2.5l0.5 3l1.5 0l1.5 -1l1.5 0l0.5 0.5l2.5 -0.5l0 -2l-3.5 -3.5l-2.5 0zM748.5 375l-1.5 0l-2 3l0 1l1.5 1.5l1 0l1.5 -2l0.5 -2.5zM999 373.5l-0.5 1l2 1.5l0.5 -0.5l0 -1.5l-0.5 -0.5zM949 374.5l-0.5 5l2 -1.5l1.5 0l1 2l1.5 -0.5l4.5 0.5l0.5 -0.5l0 -1l-1 -1l-1 0l-1.5 -2.5l-1.5 -0.5l-1.5 -1.5l-3 0.5zM881 372l0 1.5l2 2l2 1l2.5 0l0.5 -0.5l-1.5 -2l-3 0l-1 -2zM615 371.5l1.5 0l1.5 1.5l0 3.5l2 0l1 -1.5l2 0l1 -1.5l2.5 -2l1 1l-0.5 2l-1.5 1l0 3.5l-3.5 4l-2.5 0.5l-2.5 -3l-2.5 -0.5l-1 -1l0 -1l-1 0l-1 -1l0 -1l2 -1l0.5 -2.5zM519 371.5l1.5 2l2.5 -0.5l1 1l-0.5 1.5l2 2.5l0 1l-1 1l-2 -0.5l0.5 1.5l3 1l2 0l2.5 -3l0 -2l1.5 -0.5l1 1l-1.5 1.5l0.5 1.5l4 2.5l4 -0.5l0.5 1.5l-1.5 1l0 2.5l-0.5 0.5l-5.5 0.5l-1.5 -1.5l-1 0l0 1.5l2 0l1 1.5l-2.5 2l-0.5 2l-1.5 2.5l-1 0.5l-3.5 -3.5l-2 0l-1.5 -2l-1 0l-0.5 1.5l0.5 1l2 1.5l-2 2l-2 -1l-3 2.5l-2 0l-1 1l1 1.5l3 2l1 3l-1 3l-1.5 2l-0.5 2.5l1 0l2.5 2l0 2l-0.5 1.5l-2 1l-0.5 2l-1 1l-1 -1l-0.5 -2l-2 -1l-0.5 1.5l1.5 1l-0.5 2l2.5 0l1 1l0 1l0.5 0l0 -1l1 -1l1.5 0l0 -2.5l1 -0.5l1 1.5l1 0l0 -1.5l2.5 -2.5l1 1l-0.5 3l1.5 2l-0.5 0.5l-3.5 0.5l-1 2l-1.5 1l-0.5 2l-2 1.5l-2.5 -2l-1.5 1.5l0 2l2.5 1l-3.5 2.5l-2 0l-0.5 1l-1 0.5l-1 -1l0 -3l-0.5 -0.5l0.5 -5.5l-1 -1.5l0 -1.5l-1.5 -1.5l-2.5 -0.5l-0.5 -1l1 -1l3 0l1.5 1l2.5 -0.5l0 -0.5l-1 -0.5l-2.5 0l-0.5 -0.5l-2 0l-0.5 0.5l-2 -1.5l-4 0l-2 -3l0 -1.5l1 -1.5l3.5 -1.5l1 0.5l1 3l2 1l-0.5 -1.5l1.5 -1.5l2.5 2l3 -1l-0.5 -5l1 -0.5l0 -0.5l-1.5 0.5l-3 -1l1 -1.5l1 0.5l1.5 -0.5l0.5 -2l-2.5 -2l-3 -0.5l-2 -2l-0.5 -1.5l-2 1l-0.5 -1.5l0.5 -1l2.5 -2l1.5 1l0 1l2 -0.5l2 2.5l0 2.5l0.5 0l0 -1.5l2.5 -2.5l2 -0.5l1 -1l-1 -3.5l1.5 -1.5l4 0.5l-1 -1.5l-2.5 -0.5l-1 -1l1 -1.5l0 -1.5l3 -1l0 -1.5l-2 -2l-1 0l-3.5 2.5l-0.5 -0.5l0 -1.5l-2.5 -2l-0.5 -4l1 -1l6 0.5l2 -1.5l1 0l0.5 -1zM586 370l2 0l0.5 0.5l2.5 -0.5l1 1.5l-1.5 4.5l-2 2l-2 0l-1.5 -2l0.5 -1.5l-0.5 -3.5zM1032 370l-4 1.5l-2 4l1 0.5zM610 371l1.5 2l-1.5 1.5l-1.5 -1l-3 0l-2.5 3l0 1l2 1.5l-1.5 2l-2 -1.5l-0.5 -1.5l-1.5 0l-1.5 -1.5l0 -1.5l1.5 -1l0.5 -3.5l1 -1l2 1l2 2l1 0l0 -1l1 -1zM982 370.5l-0.5 1.5l0.5 0.5l2 0l1.5 2l0 1l2.5 2l1 1.5l1.5 0l2 -1.5l-0.5 -1.5l-2 0.5l-1.5 -1.5l2 -1.5l0.5 -4l-1.5 0l-1 2l-3 -0.5l-1 1l-0.5 0l-1 -1.5zM793 368l-2 1l-1.5 -2.5l-1.5 0.5l-0.5 -0.5l-1.5 0l-1.5 2.5l-4.5 0l-1 -1l-1.5 0l-0.5 0.5l0.5 1.5l3.5 3.5l0 1.5l-1 1.5l1 0l2 -2l0.5 0l1.5 2l-2.5 1.5l-1 2l0 1.5l0.5 0.5l-3 2.5l0.5 1.5l-1.5 0.5l-1 1.5l-1.5 1l0.5 2.5l-4 2.5l0 2l3 1.5l0 3l0.5 0.5l1.5 0l1.5 -1l-1.5 -2.5l0 -4l1 -1l1 0l-1 -3l2.5 -1.5l1.5 1l-0.5 2l-1.5 1.5l0.5 1.5l1 0.5l2.5 0l1 1l2 0l1.5 -1l3 1.5l1 -0.5l-1 -2l2.5 -2.5l-0.5 -1.5l0.5 -5l-2.5 0.5l-0.5 -1l1 -1.5l0 -1.5l-2 0l-0.5 0.5l-4.5 -4l2 -1.5l1.5 0l1 -3l1.5 0l1 1l0.5 2.5l0.5 0l2 -2.5l2 0l0 -1l-1 -1l-1 0l-1.5 -1zM867 364l0 2l-1.5 1.5l-1.5 0.5l0 2l1.5 1.5l3.5 0.5l0 -2l-1 -3l0 -3zM511 363.5l1.5 0l2 2.5l-0.5 3l-2 1.5l-1.5 0l-1.5 -1.5l0 -2.5zM812.5 363l2 3l1 0l1 -1l0 -1.5zM546.5 362.5l2.5 0.5l1.5 -1l1.5 0l1 3.5l1 1l2 0l1 1l0 1.5l1 1l1.5 0l1.5 2l-1 1l-2 0l-0.5 -0.5l-2.5 1l-2.5 0l-1 -0.5l0 2.5l1.5 2.5l3 0l0 -1.5l1 -1l2.5 -0.5l2 -2l2 1.5l1.5 2.5l-1 1.5l-1.5 0.5l0.5 3l1.5 1l0 1l-1.5 1.5l-2 0.5l0 0.5l-2.5 2l-1 0l-2.5 -1.5l2 -2.5l-0.5 -2.5l1 -0.5l0.5 -1l-1 0l-0.5 1l-1.5 0l-3 -1.5l1 2.5l-1 3.5l-1.5 1l-0.5 -0.5l0 -2l-1.5 -2l-1.5 0l-1.5 1.5l-1 -1l0.5 -3l-0.5 -0.5l-1 0l0 0.5l-1.5 1l-1 -1.5l-2 0l-0.5 -0.5l-3 0.5l-1.5 -1.5l1 -1l1 0l0 -4.5l3 -2.5l2.5 -3.5l2.5 0l1 -2.5zM570 361.5l3 3.5l1.5 0l0.5 -0.5l1 0.5l-0.5 4l5 -0.5l1.5 0.5l2 2.5l-0.5 3l-1 1l-3 -2.5l-1 0.5l0.5 3.5l-1 3.5l-1 1l-2.5 0.5l-1.5 1l-0.5 -1.5l1 -2l2.5 -2l0 -1.5l-2 0l-0.5 0.5l-1 -1l0 -1l1 -1.5l0 -3l-1.5 0.5l-1.5 -2l-0.5 0l-0.5 1l2 1.5l0 0.5l-1.5 1l-1.5 0l-1.5 -2.5l0 -3l1 -1l3 1l-0.5 -2l-2.5 -1zM825.5 361l-1 0l-1 1.5l0 1l1 1l0.5 0l1 -2zM887 359.5l-1 0.5l-2.5 0l0 2.5l1.5 0l2 -2zM841.5 360.5l0.5 3l-1 1l0 1l1.5 -0.5l1.5 0.5l-0.5 3l0.5 0.5l4 0l1 -1.5l-2 -1.5l0 -2.5l0.5 -0.5l-0.5 -3l-0.5 -0.5l-2 0l-1 1zM833 359.5l-0.5 2l2.5 2l1.5 0l-0.5 -3l-1.5 -1zM979 359.5l-1.5 0l-0.5 -0.5l-1.5 0l-1 2l0.5 4l1 0l4 -4zM780 359l0 1l1 1l1.5 -0.5l0 -1zM639 358.5l1 1.5l1.5 -0.5l1 1l-1 1l-1.5 0l0 1.5l1 2.5l1 0l1 1l0 2l1 1l0 3.5l-0.5 0.5l-3 0l0 1l-2.5 2l-1.5 -1l0.5 -3.5l-1 -0.5l-3 0.5l1 2l-1 1l-1 0l-2 -1.5l0 -1.5l-1 -1.5l0 -1l1.5 -2l0.5 -2.5l1 -1l5 -2.5l0 -2l1 -1zM515.5 358.5l2 1.5l3 4.5l0 1.5l-1 1.5l-1 0l-2 -2l-0.5 -1.5l-1.5 -1l0 -3.5zM970.5 358.5l0 2.5l0.5 0.5l2 0l-0.5 -1.5zM790.5 356.5l-3 2.5l-1 -1l-1 0l0 2l3 2.5l2.5 0l0 -2l-0.5 -0.5l0.5 -2.5zM854 356.5l0.5 1.5l3 2.5l2.5 0l1 1l0 1l1.5 -1l2 0l2 -2.5l0 -1l-1 -1l-0.5 0l-1.5 2l-1.5 -0.5l-0.5 -1l-1.5 0l-1 1.5l-1.5 0l-2 -3zM824 356l-6.5 1l0.5 3l1 1l3 0.5l0 -1.5l-1 0l-0.5 -1l3 -1l0.5 -0.5zM528 354.5l1 1l0 2l-3.5 3.5l-1 0l-1 -1l-1.5 0l-0.5 -0.5l1 -3.5l1.5 -1.5l1 0.5zM532.5 354l2.5 2.5l1 2l-0.5 1l0.5 2l1 0l0 -2l1.5 -1l0.5 0.5l0 2l1 1l-1 2l-2 2l-0.5 3.5l-1.5 1l-1.5 -1l-2 0l-0.5 -0.5l0 -2.5l1 -1.5l0.5 0l1 1.5l1.5 0l-1.5 -4.5l0 -1.5l1 -1.5l-2 -2l-1 -2zM835.5 354l-1.5 0l-0.5 0.5l-0.5 3l2.5 -2zM975 353l-0.5 0.5l1 2l1.5 0l-0.5 -2.5zM451 353l-0.5 0.5l0 1.5l2 1l0.5 -0.5l0 -2l-0.5 -0.5zM1004 354l1 0.5l2 0l3 1l-0.5 1.5l-3 0l0 2l1 0.5l2 -0.5l1.5 -1.5l0.5 0.5l1 -0.5l0 -1.5l-2 -1l-2 -2.5l-2 0.5l-1.5 -1zM559.5 351.5l3 0l1 -0.5l2 1l0 1.5l-2.5 1.5l0 0.5l4 3.5l-1.5 2l-2.5 1l-1.5 -1l0.5 -2l-1 -1.5l0 -1l-0.5 -0.5l-2 0l-1 -1l0.5 -2.5zM927 350l-1 0l-1.5 1.5l0 2.5l0.5 0.5l-0.5 2l-1 1l-1 0l-2 2l0 1l3 0.5l3.5 -1.5l0.5 -2.5l-2 -3l0 -2zM697.5 351.5l0.5 -0.5l2.5 0.5l1 -2l1.5 -0.5l1.5 1.5l1.5 -0.5l1.5 1.5l0.5 2l-1 1l-2 0l-4 -2l-2 0.5zM797.5 350l-0.5 4l2.5 0.5l2 2.5l2 0l1.5 -1.5l1.5 0l1 1l0 2.5l0.5 1l2.5 1.5l-1 -1.5l-0.5 -4.5l-2.5 -2l-3 0.5l-0.5 -0.5l-0.5 -2l1.5 -2.5zM972.5 348.5l-1.5 0.5l0.5 2.5l1 -0.5l0.5 -1.5zM687 347.5l3 0.5l1 1l-2 2l0 2.5l1 1.5l-0.5 0.5l0 2l1 1l1 0l3 -2l1 0.5l0 3l-1.5 2l-1.5 0l0 1.5l-0.5 0.5l-2 0l-2 -2l-0.5 -3.5l-2 -1l-2 0l-3 1l-1 -1l0 -1l1 -1l0 -2.5l3.5 -3l1 0zM792 347.5l0.5 1l3 1l-1 -2l-1 -0.5zM613.5 346l0.5 0.5l-0.5 2l-1 1l-1 3l-1.5 1.5l-0.5 3l2.5 1l1 1l2.5 -0.5l2 1l4.5 4l0 2.5l-1 1l-1.5 -0.5l0.5 2.5l-1.5 1.5l-1.5 -0.5l0 -3l-1.5 -1.5l-5 0.5l-1 -1l-1 0l-2.5 2l-4.5 -0.5l-2 1.5l-2 -0.5l-1.5 1l-1 -1l0 -1l0.5 -0.5l1.5 0.5l0 -2l-2 1.5l-1.5 0l-1.5 -1l0.5 -2l1.5 -2l2.5 0l1 -0.5l2 1l0 -2.5l-1 -0.5l-0.5 -1.5l-1.5 -1.5l0 -1l1.5 -2l2.5 -1.5l2.5 0l2.5 2l3.5 -1l1 -1l0 -2l1 -1.5l0 -1l0.5 -0.5zM1000 344l0 0.5l3 2.5l1 2l0.5 0l0 -4l0.5 -0.5l0.5 0.5l2 0l0 -1zM982 344l-2.5 0l-0.5 3.5l-0.5 0.5l1 1.5l1 0l0.5 -1.5l2 0l0.5 -0.5l0 -1l-1.5 -1.5zM963 347l1.5 0l1 -1l2 0l1 -0.5l1 -1.5l-6.5 0zM929.5 349.5l0 2l2 2.5l1.5 1l2.5 0.5l1.5 -1l1.5 0l2 1.5l2.5 0l1.5 1.5l5 2.5l2 -0.5l0.5 0.5l0 1.5l-1 1.5l-2.5 -2l-1.5 0l-2.5 1.5l0 2l1 1l2.5 0l0.5 0.5l2.5 -0.5l1.5 1.5l1 0l2 -1.5l2 0l1 -1l2 0l3.5 -1l0.5 1.5l-2 2.5l0.5 1.5l2.5 -0.5l2.5 -3l0 -1l-1 -1l1 -1.5l0 -1l-2.5 -0.5l-0.5 1l-1 0l-1.5 -2l0.5 -0.5l2 0l0 -0.5l-2 -1l0 -1.5l-1 -0.5l0 1.5l-0.5 0.5l-2.5 0l-1 1.5l-2 1.5l-3 -1l-0.5 -0.5l0.5 -1l0 -2.5l-1.5 -2l0 -1.5l-1.5 -1l-1 0l-1 -1l1.5 -2l0 -1l-1.5 -0.5l-1.5 -1.5l0 -1l-4.5 0l0 2l1 0l1 1.5l-3 4.5l-2 -1.5l-4.5 -2l-1.5 1l-3 -0.5zM844.5 344l-0.5 3.5l2 1.5l0.5 1.5l1 0l1 -2.5l0 -1l-1 -1.5l0 -1.5zM784.5 344l0.5 1.5l-0.5 2l1 -0.5l2.5 0l-1.5 -2l0 -1zM650 357.5l0.5 3l1 2l1.5 1l3 0l1.5 -3.5l1 0l1 1l2 0l0.5 0.5l-0.5 4.5l2.5 2.5l2 0l0.5 -0.5l0 -3l-2.5 -2l0 -1l2.5 -3l2.5 0l1 -0.5l3 5l-0.5 0.5l0 1.5l1.5 -0.5l2 3l1.5 1l2.5 0l3.5 2.5l2.5 -3l2.5 -1l1 1l0 1l-2 1l0.5 1.5l1.5 1l1.5 0l1.5 1.5l0 1.5l-1 1l-1 0l-1 -1.5l-1.5 -0.5l-1 -2l-1 0l-2 2l-2 0l-1 -1.5l-1.5 0l-2 -2l-2.5 0l-0.5 0.5l-1.5 -0.5l-3.5 -3l-1.5 2.5l0 1.5l2.5 0.5l0.5 0.5l-0.5 1l-2.5 0l-2.5 -1.5l-3 0l-0.5 1.5l-1 1l-1 0l-2.5 -3.5l0.5 -1.5l2 0l0 -1.5l-2 -1l-2 0l-0.5 0.5l-0.5 4l1 1l1.5 0l1 1l0 1l-0.5 0.5l0 3.5l-0.5 0.5l-1.5 0l-2.5 -1.5l0 1.5l2 2.5l-2.5 3l0 2l1 1l3.5 0l1 0.5l0.5 -0.5l0 -3l2.5 -1.5l1.5 -2l3 -1l3 1l3 -2l0.5 0.5l0 1.5l-4 3l0 2l1.5 0l2 2l1 3l1 1l1 0l0.5 -0.5l0 -1.5l-1.5 -1.5l0 -2l1 -1l2 0l0 -1l-1 -1l0.5 -1.5l2 0l1.5 1.5l3 -0.5l1 1l0 1l-0.5 0.5l-3 -0.5l-1 2l2.5 1.5l1.5 0l0.5 -1l2.5 -2l-1 -2.5l2 -1.5l1 1l0 2.5l2 0l1.5 2l1.5 -1l2.5 0l3.5 2l0 1.5l-2 2l-1.5 0l-0.5 0.5l0 1.5l0.5 0.5l3.5 1l2 0l0 -0.5l-2 -1.5l0.5 -3l1.5 -1l2 2l0.5 1.5l-1 2.5l1 0l1.5 -2.5l2.5 0l0.5 1l-1.5 2l1.5 1.5l1.5 0.5l1.5 -1.5l2.5 -1l2.5 2l0 2l1 0.5l1.5 -2l1.5 0l1 1l-0.5 2l2 2l1 0l5 -4.5l4 2l-0.5 -3l1 -2l0 -1.5l0.5 -0.5l2 0.5l1 -1l0.5 -3l-1 -1.5l1.5 -5l-1.5 -1l-3.5 -0.5l-1 -1l0.5 -1l1 0l2 -1.5l1 0l1 1l0 1.5l3 -0.5l1 1l0 0.5l-2 1.5l0 1l3 2l-0.5 1l-3 0l0 2l2 2l-0.5 1l0 1.5l0.5 0.5l-2 2.5l3.5 0.5l-1.5 -2.5l3.5 -3.5l1 -2l1.5 0l1.5 2l-1.5 1l-1.5 0l2.5 3.5l2.5 0l1 -0.5l0 -2.5l1.5 -2l-1 -2l1 -1.5l-1 -1.5l0 -2l2.5 -2l0 -1l-1 -1l-3.5 0l0 1l-1 1l-1.5 -0.5l-2 0.5l-2 -2l-2 0l-2.5 -2l0 -1.5l2 -2.5l0 -1l-0.5 -0.5l-2 0l-0.5 0.5l-0.5 -0.5l0.5 -1l2.5 -0.5l2 -2l1.5 -3.5l1.5 0l4 -3.5l2 1.5l-1 1.5l0.5 1.5l2.5 -1.5l1.5 1l-0.5 1l-2 1l0 1l1 1l1.5 0l1 1.5l0 2.5l-1 1l0 1l5 4l-1 2.5l1.5 1l1.5 -0.5l5 0.5l1 1l-2 3l0.5 0.5l1.5 0l0.5 -3.5l0.5 -0.5l0 -4.5l2.5 -3l-1 -1.5l-0.5 0l0 1l-1.5 1.5l-1.5 0l-2 -1l-3 1l-1 -1l0 -1.5l1 -1l3 0.5l1.5 -1l1 0l0 -2.5l0.5 -1l-0.5 -1l-1.5 -1l0 -1l-2 -3l-1 0.5l0 2l-0.5 0.5l-3.5 -2.5l0 -4l0.5 -0.5l4.5 2l1.5 0l0.5 -0.5l4.5 0.5l1.5 -1l2 0l0.5 -0.5l-0.5 -1.5l-3 0.5l-1.5 -1l-1 0l-1.5 -1.5l1.5 -4.5l-2.5 0l-2 1.5l-1 -0.5l-1 -1.5l0.5 -1l1.5 -0.5l0.5 -1.5l2 -2l0.5 0l1 1.5l2.5 0l3 -4l0 -1l-113.5 0l0.5 1l0 2.5l2 1.5l0 1.5l-1 1l-1 0l-1 -1l0 -2.5l-3 -0.5l-1 2.5l-1 1l-2 -0.5l1 4l-2 2.5zM653 344l0.5 3l3 -1l0 -2zM448 344l0 7.5l2.5 -2l1.5 0.5l3 3.5l-0.5 0.5l-0.5 3.5l2 1.5l1.5 0l1.5 2l-0.5 1.5l-1.5 0l-1 1l-2.5 0l-2.5 1.5l-1.5 0l-0.5 -0.5l0.5 -1l-1.5 -0.5l0 23l1.5 -1l0.5 -1.5l-0.5 -3l0.5 -0.5l1.5 0l1.5 -1l1 0l1.5 2l0.5 0l1.5 -1.5l1 0l1.5 2l-0.5 2l-2.5 2l-1.5 -1l-2.5 0l-0.5 0.5l0 6.5l-0.5 0.5l-2.5 0l1.5 2l0 1.5l-1.5 1.5l-1.5 0l0 13l1.5 0l0.5 -1l1 0l1 2.5l1 0l0 -1l1.5 -1.5l1.5 0l1 1.5l-0.5 1.5l-2 2l-1.5 -0.5l-4 0l-1 0.5l0 54l2 0l1 1.5l3 -1l2 1l1.5 0l2.5 1.5l1.5 0l2.5 -1.5l1.5 0l2 -1l1 1l0 1l-1.5 1l0 0.5l1.5 1.5l0 1.5l2 1.5l-0.5 2.5l1 1l0 0.5l-1.5 1l0 3l-0.5 1l-2 1.5l-1.5 -1l-0.5 -1.5l-1.5 0l-3 1.5l-1.5 -2l0.5 -2.5l-1 -1l-0.5 0l-1 1.5l-2.5 -0.5l-2.5 2.5l0 1l-1.5 2l-2.5 0l0 5l1.5 0l0.5 -0.5l2 0.5l1 1.5l-0.5 3l1.5 1.5l0 1.5l-1 1l-0.5 -0.5l-4.5 -0.5l0 67l8 3.5l1 0l1 -1l4.5 0.5l2 -1.5l1.5 0l0.5 0.5l-0.5 2l-1.5 1.5l-1.5 0l0 2l-4 3.5l-1 -0.5l-0.5 -3l-0.5 0l-0.5 1l-2 0l-2 -1.5l-4.5 -0.5l0 7l1 0l2 2l2 0l0.5 0.5l-1 1.5l0 3l-1 0.5l0 1l1 1l1.5 0l2 -1.5l1 1.5l2.5 0l1 1l0 1.5l3.5 2.5l0.5 1l0 2.5l3.5 0l1.5 1.5l0 1.5l1 0l1.5 -2l2 -0.5l0 -1l-0.5 0l-1 -1.5l0.5 -0.5l3 0l1 -1.5l-0.5 -1.5l0.5 -3.5l-1.5 -3l0.5 -0.5l2.5 0l0 -1l-1.5 -1.5l-1 -2.5l-2 -1.5l0 -1.5l1 -1l1 0l1.5 1.5l4.5 0l-1 -2l1 -1.5l1.5 -0.5l2 1.5l2 -0.5l1 -1.5l0 -3.5l1 -1l1.5 0.5l1 1l0 1l-0.5 0.5l0 1.5l-1.5 2.5l1 0.5l2.5 -1.5l3 2l1.5 0l1 1.5l-2 2.5l0 1.5l1.5 1.5l2 0l0 -1.5l-1.5 -1.5l1.5 -2l2.5 0.5l1.5 1.5l0 4.5l1 1.5l-1.5 3l0.5 2.5l0.5 0.5l1 -0.5l1 0.5l2 2.5l2 0.5l2 2l0.5 2l-1 1l0 2l3 0l0.5 0.5l-1 1.5l-1.5 0.5l0 1l1.5 1l1 1.5l-2 1.5l0 1l-2.5 3.5l-1 0l-1.5 -2.5l-0.5 0l0 2l-0.5 0.5l0 2l2 0l1 1l3 0l0.5 0.5l0 1.5l1 0l-1 -5l1.5 -1.5l2 2.5l-0.5 2.5l2 2.5l-2.5 2l-0.5 2l-2 1.5l0 1l1.5 0.5l2 -2.5l3 -0.5l2 -2.5l2.5 2l0 2l-0.5 0.5l-5 0l-1 2.5l-4 2.5l0 1.5l3 0.5l1 1l-0.5 1l1.5 1l2 0l2.5 -1l2.5 0.5l1 -1.5l1 0l3 2.5l1.5 0.5l6.5 0l1 0.5l1 1.5l3 2.5l0 2l-0.5 0.5l0.5 3.5l-1.5 1.5l-2 0.5l29 0l0 -4l1 -1l1 0l1.5 2.5l2 0l1 1.5l1.5 1l83.5 0l1.5 -2l2.5 -0.5l1.5 -2l-1.5 0.5l-2.5 -0.5l-1 -3l-1 0l-1.5 -1.5l0.5 -4l-1.5 -2l0 -2.5l-2 -0.5l-1.5 1l-1 0l-0.5 -0.5l0 -2.5l-1 0l-1.5 1.5l-3.5 0l-1.5 -2l-1 0l-2.5 4l-4 0.5l-1.5 -0.5l-2 -2l0 -0.5l1 -0.5l0 -2l-0.5 -0.5l-1.5 0l-2 -2l-2 0l-1 0.5l0.5 3l-2 1.5l-1.5 2l0.5 3l-1.5 1l-1 0l-0.5 1l0.5 3.5l-1.5 1.5l-0.5 0l-2 -2.5l-4.5 1l-1 -0.5l-1.5 -2l-2.5 0.5l-0.5 -0.5l0 -2.5l-1 0l-1 -1l0 -1l1 -1l2 1.5l2.5 -1.5l0 -2l-1 -1.5l0.5 -1l4 0.5l3 2l-1 -3l1.5 -2l2.5 2l0 3l2 0.5l0 -2l-1 -1l1 -1l2 -0.5l0 -1l-2 -1.5l-3 0.5l-2.5 -4l3.5 -2.5l1.5 1l1 0l0 -1.5l-2 -2.5l3 -2l2.5 -3.5l1.5 -0.5l3 0.5l1 -1l-1 -2.5l-1.5 -1l-1 -1.5l1 -1.5l1.5 0l0.5 -0.5l-0.5 -1l-2.5 0l-1.5 1.5l0 1l-2 2l-2.5 0.5l-1.5 -1.5l0.5 -2l-1 -1l0 -2.5l-0.5 -0.5l-2.5 0.5l-1.5 -1.5l0 -1.5l2.5 -2.5l0 -2l1 -1l3 2l2 -1l0 -1l-1.5 -2l3.5 -4l0 -4l1 -1l0 -2l-1 0l-1.5 -1l0.5 -2l-1 -1l0.5 -1l0 -2.5l-0.5 -0.5l1 -1.5l3.5 0l2 2l1.5 0l0.5 0.5l-1 1.5l-2.5 0l0 1l1.5 0.5l0.5 1l2 1.5l-1 1.5l0 1.5l1.5 0l1 1l-1 3l1.5 0l1 -1.5l0 -1l-1.5 -1l0.5 -2.5l-1.5 -2l1 -1l1.5 0l1.5 -2l1.5 0.5l0 1l-1.5 2l0 3.5l1.5 1l1 0l0.5 1.5l-1 1l-1.5 3l0.5 2l2 -0.5l1.5 2l-2 1.5l0 1l1.5 2l0 1l-2 2l-1 0l-1.5 1l-1 -1l0 -1l-1.5 0l0 1l1 1.5l-0.5 2l1 3l-0.5 0.5l-2 0l0 0.5l1.5 0.5l1 -1.5l1.5 -0.5l3 2.5l1 0l0.5 -1.5l-0.5 0l-1.5 -2l0.5 -1l1.5 -0.5l0 -1.5l-1 -1.5l0.5 -0.5l2 0l0.5 0.5l1.5 -0.5l0 -3l1 -1l1 0l1 1l1 3.5l2 0l0.5 1l-1 1l-2.5 0l-2 2.5l-2.5 -0.5l0.5 3l1 0.5l1.5 -2l3 1.5l2.5 3l0 2.5l1 0l2 -2l-0.5 -2l-1.5 -1l-0.5 -1.5l0.5 -1.5l2 -2l3 1l1.5 -0.5l0 -1l-1 -1.5l1 -2l0 -3l-2.5 2l-0.5 2.5l-1 1l-1.5 0l-1 -3.5l-0.5 -0.5l-1.5 0l-1.5 -2l0 -2.5l1 -1l0.5 0.5l1 -0.5l0 -1.5l1.5 -2l3.5 0l2.5 -1l5 0.5l1 -1l2.5 0l1 -1.5l0 -2l-2.5 0.5l-0.5 -0.5l-4 -0.5l-1 -1l-0.5 -2l-1.5 0l-2.5 3.5l-2 0l-1 -1l-2 1.5l-3 0l-1 -0.5l-1.5 -2l0 -1.5l0.5 -0.5l-0.5 -3l-2 -1l-6 -7l-2.5 0l-0.5 0.5l0.5 1.5l-1 1l-3 -1l-1.5 -1.5l1 -1l1.5 0l0.5 -1l-2 -1.5l-0.5 -1.5l1 -1l3 -0.5l0.5 -1.5l1.5 -0.5l0.5 -1l1.5 -1l4 0.5l1 -1l0.5 1.5l-1.5 2l-1 5l0.5 0.5l3 -0.5l1 1l0 1.5l0.5 0.5l-0.5 3l1 0l0.5 -0.5l0 -1.5l3 -4l2.5 0.5l0 -4l4 -4l1 0l-0.5 -3l0.5 -0.5l3.5 0l1 1l0 3l-3 2.5l0 2.5l-2.5 1.5l0 1.5l-1.5 1.5l-2 -0.5l0 0.5l1 1l1.5 0l2 1l-0.5 1l0 3l-1.5 1l0.5 1.5l1 0l1.5 -1l3.5 0l0 -0.5l-2 -1l-0.5 -2l2 -2l0 -5.5l2 -4l0 -1.5l-1 -2.5l1 -1.5l0 -2.5l0.5 -0.5l1.5 0l1.5 1.5l1.5 3l1.5 1l2 0l1 -1l0 -2.5l-1.5 -1.5l0 -1l4 -3l1.5 -0.5l0 -1l-2 0l-0.5 -0.5l0 -2.5l-1 -1.5l-1.5 0l-0.5 0.5l-1 -1l-1.5 -4l-1.5 -1.5l1 -3l-1 -1l-2 1l-2 0l-0.5 -0.5l-1.5 0l-3 -2l-1 1l0.5 1l-0.5 1l-2.5 1.5l-0.5 1l1 0l1 -1l4 0.5l1 1l0 1l-1.5 2l1 3l-1.5 0.5l-1.5 -1l0 -1l-2.5 -0.5l-1 1l0 2l-1 1l-1 0l-1 -1l-0.5 -2.5l-1 -0.5l-1.5 -2l1.5 -2l0 -2.5l1.5 -1l1.5 -2.5l-0.5 -0.5l-4 0l0.5 1l0 3l-1 1l-1 0l-2.5 -1.5l1 -2l0 -2l-0.5 -0.5l-1.5 0l-0.5 -0.5l-1.5 0l-0.5 0.5l-2 -1l-1 0.5l-0.5 2.5l1 0l1 1l2 -0.5l1 1l-0.5 2.5l1 1l0 2l3 1l1 1.5l-0.5 0.5l0 2l1.5 1.5l-0.5 2.5l-1 1l-1 0l-1 1.5l-1.5 0.5l-1 -1l0 -1l1.5 -1l0 -1l-1 0l-1.5 2l-3 0.5l-1.5 1.5l-1.5 0l-0.5 1.5l1.5 -1l1.5 2l-1 1l-1.5 0l-2 3l-1.5 -2.5l-3.5 -1l-0.5 0.5l0.5 1l-0.5 2.5l1 1l0 1l-1.5 1.5l-1.5 -1l-2 0l-0.5 -0.5l-2.5 1l-2.5 -0.5l-1 -1l-0.5 -2l-1 -0.5l-2 1l-1 3l-2 1l-1.5 0l-2.5 -1.5l3.5 -4l-0.5 -1l-2.5 -1.5l0 -2.5l-1 -1l-4 -0.5l-2 -1l2 -1l0.5 -1.5l-1 -0.5l-2 0.5l-1 -1l0 -1.5l-0.5 0l-1.5 1.5l-1 0l-1.5 1l-2.5 -0.5l-1 0.5l-1.5 2l-2.5 0l-0.5 0.5l-2 0l-3 -2l-1.5 0l-0.5 -1l2 -1l2.5 -2.5l0.5 -1l-0.5 -1.5l-5 -6l-0.5 0l0 1l-1.5 1.5l-2 -1l0 -4.5l-2.5 0l-3.5 -1l0.5 -4.5l2 -1.5l1 0l1.5 1.5l2.5 -0.5l1.5 2l1.5 0l0.5 -0.5l1.5 2l2.5 0l0.5 0.5l2.5 -0.5l1.5 1.5l0 2l-0.5 0.5l-1.5 0l0 1l1.5 1l0.5 1.5l2 0l1 2l1 0l1 -1l0 -1l1.5 -1l1 1l0 1l-1.5 1.5l-0.5 2.5l1.5 0l2 -1.5l-1 -3l3 -2.5l0 -2.5l0.5 -0.5l2 0l1.5 1l2 0l1.5 -3.5l2.5 -2.5l0 -0.5l-2 -1.5l0.5 -2l-1.5 -1l-2 -2.5l0 -3l1 -1l3 0.5l1.5 2.5l2 0l1 -0.5l0 -2l1.5 -1l1 1.5l0 1l2 0.5l0 -1l1.5 -1.5l0 -2l-7 -0.5l-0.5 -0.5l1 -1l1 0l1 -1l0 -1l-1 -1.5l-0.5 -3l-2.5 -2l-0.5 0l0 1l1.5 2.5l-3 3.5l0 1l1 1l-0.5 1.5l-1 0l-1 -1l-1 -2l-0.5 -3l-3.5 -0.5l-2 -1.5l0 -1.5l-1 -1.5l0 -1.5l0.5 -0.5l2.5 -0.5l1.5 -2l2 2l1.5 0l0 -2.5l-1.5 -0.5l-1 -2l-3.5 -3l0 -1l-1.5 -2l0.5 -1l0 -3l1 -1l1.5 0.5l1.5 3l2 0.5l0.5 -1.5l1.5 -1.5l0 -2l0.5 -0.5l2 2l0 1l1 1l2 0l1.5 2l2.5 -0.5l0.5 0.5l0 1.5l1.5 1.5l1 0l3 -3l4.5 0.5l0 -4.5l-0.5 -1l3.5 -1l1.5 2.5l-3 2l-0.5 3l-1 1.5l-2 1.5l0 1.5l2.5 1.5l2 0.5l1 1.5l-0.5 0.5l-4.5 0l0 2l1.5 1l1.5 0l0 -2l1 -0.5l1 1l0 2l3 3.5l1.5 0l1 -1l1.5 0l-0.5 -2l2.5 -2.5l-0.5 -2.5l1.5 -1.5l1.5 0.5l1.5 1.5l1 0l0.5 -1l-0.5 -1.5l-0.5 0l-2.5 -3l0.5 -3l-1.5 -1l-2.5 1l-1.5 -1.5l0 -0.5l4 -3.5l2 0l0.5 0.5l1 -0.5l0.5 -1.5l-1.5 0l-1 -1l0 -3l3.5 -1.5l1 -1l-0.5 -1l-1.5 -0.5l-1.5 -1.5l-1.5 -3l-2 -1.5l1 -3l5 -4.5l-0.5 -2.5l-2 -1.5l1 -6.5l-1 0l-0.5 2l-2.5 2l-1.5 0l-0.5 -0.5l-5 0l0 0.5l-1.5 1l-1 -0.5l-1 -1.5l0 -1.5l-0.5 -0.5l0.5 -1.5l-0.5 -1l-2 -1l-2.5 2l-2.5 -3l0 -1.5l1 -3l1.5 -1.5l1.5 0l2 2l-0.5 4l3.5 0.5l1.5 1l3 3.5l2.5 0l1 -0.5l2 -2.5l2.5 0l0 -2l1 -1l0 -0.5l-0.5 0l-3 2l-1.5 -1.5l0 -4l-1 -1.5l0 -1.5l-0.5 0l-1 1.5l-1.5 0l-1.5 -1.5l0 -1.5l1 -0.5l0 -4l-2 -1.5l0 -3l1 -1l1.5 0l0.5 -0.5l1 0l1 1.5l1 0l0 -2l1 -1.5l0 -2.5l0.5 -1l-3 -2l-1.5 0l-1.5 -1l-2 0l-1.5 -1l0 -2.5l1.5 -1l0 -1l-1 -1.5l1 -1l5.5 1l1.5 -2l1.5 0l-1 -2l0.5 -1l3 0.5l1.5 -1l2 0l1 -1l1.5 1.5l0 3l-0.5 1l0.5 0.5l1 -0.5l2 0.5l0 -0.5l-2 -1.5l0 -2l4.5 -5l1 0l1.5 1l-0.5 3l2.5 2l3.5 -0.5l1 1.5l-0.5 0.5l0 1.5l0.5 0.5l1 0l0.5 -3l1.5 -1.5l1.5 -0.5l0 -1l-2.5 -2l-2.5 0l-1.5 -1l-1 0l-1 -1.5l-2.5 0l-2 -2.5l-1.5 0.5l-3 3.5l-2 1.5l-3.5 -0.5l-2.5 -2l1.5 -1.5l1.5 -0.5l0 -2l-2 -1.5l0 -1l-1.5 -2l0.5 -0.5l0 -3.5l1.5 -1.5l-0.5 -2.5l1 -1l1.5 -3.5l-1.5 -1l-1.5 0l-1 -1l0 -1.5l1.5 -0.5l0 -2l-2 -2l-1 0l-1 -1l1 -1l3 0l0 -3.5l-1.5 -0.5l-1.5 2.5l-3.5 -5l1.5 -1.5l0.5 -3l0.5 -0.5l2.5 0l0 -0.5l-2.5 -2l-0.5 -1l0 -2.5l2.5 -2l3 1l1.5 -1.5l0 -1.5l-1 -2l-48.5 0l0.5 1.5l-2.5 2l-1 0l-1 -1l-2.5 0.5l-2 -2l-1.5 0l-0.5 -1l-7.5 0l0 3l-1.5 3.5l0 2l-1 1.5l2 2.5l0 1l1.5 2.5l-0.5 1l-2 0l-2 -2.5l-4 -0.5l-2 -1l-1.5 -1.5l-0.5 -1.5l-2 -1.5l0.5 -3l1 -1l2.5 2.5l0 2l1 2l1.5 0l2 -1.5l-0.5 -3.5l-2.5 -1.5l0 -0.5l2 -1.5l0 -1l-4.5 0l-0.5 0.5l-1 -1l0 -1l-22.5 0l0 1.5l-2 1.5l0 0.5l2 -0.5l2 2l1 2.5l1 -0.5l1.5 1l0 1.5l-1 1l-1.5 0l-1 -2l-1 0.5l-5.5 -0.5l-1.5 -1.5l0 -1.5l-0.5 -0.5l0 -1l1 -1l-1 -3l-46 0l-1.5 4l-1 -0.5l-0.5 -2.5l-1.5 0.5l-1 1.5l0 1l2 0l0.5 0.5l-1.5 2l-1.5 0.5l-1 -1l0 -1.5l-1 -0.5l-1 0.5l0 2l2 2l0 1.5l-2 1.5l-0.5 1l0 2.5l1 0l2 1.5l-1 1.5l-2 0l-1 -1l0 -1.5l-1 0l-1.5 -1.5l0.5 -3.5l-1.5 0l-1 1.5l-2.5 0l-0.5 0.5l-3.5 -0.5l-1.5 -1l1.5 -2l3.5 0.5l2 -1.5l1.5 0l1.5 -1.5l0 -1l-3.5 -4l-5.5 0.5l-0.5 -0.5l-1.5 0l-0.5 -1.5z" fill="#bad6b0" fill-rule="evenodd"/>
<g fill="none" stroke="#a9cdf2" stroke-width="1" stroke-linejoin="round"><path d="M448 410L460 425L475 432L482 434"/><path d="M455 395L462 410"/><path d="M674 354L690 350L706 355"/><path d="M735 585L742 600L752 612L756 625"/><path d="M920 370L925 385L922 400"/><path d="M790 600L805 612L822 610"/><path d="M880 560L905 565L935 558L960 550L985 548L1000 545"/><path d="M448 580L470 583L500 588L530 600L560 605L585 625L600 640"/><path d="M520 560L525 575L535 585"/></g>
<g fill="#a5ccf5"><ellipse cx="609.500" cy="536" rx="2.500" ry="4.500"/><ellipse cx="454" cy="364" rx="2" ry="2.500"/><ellipse cx="1040" cy="510" rx="3" ry="2"/><ellipse cx="925" cy="352" rx="2" ry="3"/></g>
<g fill="none" stroke="#e3a58a" stroke-width="1.300" stroke-dasharray="5 2.500" stroke-linejoin="round"><path d="M608.6 496L603.8 521.6L601.5 545.2L608.6 559.4L599.1 568.8L603.8 578.3L618 578.3L627.5 585.4L622.7 599.5L632.2 609L646.3 606.6L651.5 611.3L650.4 627.9L662.2 637.3L671.6 632.6L690.5 639.7L700 651"/><path d="M904.7 344L903.5 358.2L891.7 366.4L883.4 374.7L887 379.4L897.6 386.5L898.8 398.3L907 401.9L923.6 393.6L927.1 403L926 410.1L933 412.5L937.8 422L947.2 407.8L959 411.3L970.8 418.4L975.6 426.7L980.3 433.8L989.7 438.5L1011 440.9L1011 447.9L1018.1 452.7L1032.3 457.4L1041.7 459.8L1050 452.7"/><path d="M449 344L452 350L457 358L461 360"/><path d="M461 360L470 355L482 350"/></g>
<g fill="none" stroke="#b3b6c9" stroke-width="1.500" stroke-linejoin="round"><path d="M448 507.5L467 512L486 515.8L494 517"/><path d="M1044 470L1041 495L1039.6 512.2L1037.3 533.4L1030.2 554.6L1023 568.8L1020.7 592.4L1016 620.7L1011.3 639.6L1010 651"/><path d="M907.4 507.4L933.4 507.4L964 512.2L968.8 516.9L992.4 528.7L1011.3 529.9L1036 534.6"/><path d="M795 484L805 495L814 505L821 524L842.5 533.4L858.6 534.6L878 550L880.3 576L889.7 592.5L898 609L900.8 610.8"/><path d="M733.8 649L748 643.3L783.4 639.7L810.6 639.3L830.7 633.8L852 628L855.5 620.8L863.8 612.6L880.3 610.2L900.8 610.8"/><path d="M900.8 610.8L921.6 625.4L951.8 634.9L975 645"/><path d="M814 507.4L833 511L861.4 511.7L889.7 509.8L907 509.6"/><path d="M559 597L580 588L598 581.9L612.2 573.6L633.4 567.7L646.9 568.9L668.9 563L683 554.7L692.5 537L730.3 535.8L748 525.2L757.4 519.3"/><path d="M1023 414.8L1030 421.9L1034.9 438.4L1042 450.2L1050 455"/><path d="M1042 450L1044 470"/><path d="M802 480L830.7 484.6L854.3 485.3"/><path d="M448 573L470 590L500 612L524 619L545 622"/><path d="M448 592L464 590L490 600"/><path d="M792 478L800 470L815 468"/><path d="M859 535L852 560L848 580"/><path d="M909 509L905 530L895 548"/><path d="M846 361.7L838 380L830 400"/></g>
<g fill="none" stroke="#80849d" stroke-width="1.700" stroke-linejoin="round" stroke-linecap="round"><path d="M941.2 348.7L933.4 360.5L929.9 386.5L927.5 400.6L921.6 412.4L921.6 437.2L918 442.5"/><path d="M921.6 438.4L945.2 437.2L964 431.3L973.5 423L980.6 420.7L1001.8 418.3L1023 414.8"/><path d="M918 442.5L898 447L870.8 453.9L842.5 463.3L826 466.8L802.3 476.3L795 480"/><path d="M918 442.5L917 467L912.6 485L909 509"/><path d="M805.9 344L804.7 358.2L798.8 377L788.2 393.6L774.5 409.7L777.5 429L781 448L785.8 462L792.9 472.7L795 480"/><path d="M673.7 491.2L697.6 488L723.4 488.4L740 495.8L751 499.4L765 500"/><path d="M774 501.5L771.6 507.4L757.4 519.3L752.7 521.6L754.5 535L756.3 547.6L751.5 568.9L748 573.6L739.7 578.3L726.7 592.5L725.6 611.4L730.3 639.7L733.8 650"/><path d="M543 528L547.2 540.5L554.3 559.4L556.6 575.9L559 597.2L547.2 609L544.8 622L560 634L566 639.7L570.8 651"/><path d="M448 505.2L470.9 508.1L493.7 515.7L512 517L530 512L543.2 511L562.3 514.8L581.3 514.2L600.4 509L619.4 504.3L648 496.7L674 491"/><path d="M1021.7 551L1033.6 554.7L1050 557.5"/><path d="M786 462L790 492L782 503"/></g>
<path d="M1022.800 414.900L1034.600 388.900 1041.500 363.700 1050 353" fill="none" stroke="#666a88" stroke-width="2.400" stroke-linejoin="round"/>
<g fill="#fff" stroke="#777b90" stroke-width="1"><rect x="843.5" y="359.2" width="5" height="5" rx="1.200"/><rect x="938.3" y="346.2" width="5" height="5" rx="1.200"/><rect x="979.5" y="404.1" width="5" height="5" rx="1.200"/><rect x="915.5" y="440" width="5" height="5" rx="1.200"/><rect x="771.9" y="406.7" width="5" height="5" rx="1.200"/><rect x="793.3" y="481.3" width="5" height="5" rx="1.200"/><rect x="856.7" y="532.5" width="5" height="5" rx="1.200"/><rect x="1033.5" y="532.9" width="5" height="5" rx="1.200"/><rect x="964.8" y="514.5" width="5" height="5" rx="1.200"/><rect x="898" y="608.5" width="5" height="5" rx="1.200"/><rect x="808.5" y="574" width="5" height="5" rx="1.200"/><rect x="742.5" y="574" width="5" height="5" rx="1.200"/><rect x="808.5" y="637.2" width="5" height="5" rx="1.200"/><rect x="690.4" y="533.1" width="5" height="5" rx="1.200"/><rect x="648.5" y="506.1" width="5" height="5" rx="1.200"/><rect x="908.8" y="504" width="5" height="5" rx="1.200"/><rect x="729.5" y="646" width="5" height="5" rx="1.200"/><rect x="535.2" y="619" width="5" height="5" rx="1.200"/><rect x="461" y="584.5" width="5" height="5" rx="1.200"/><rect x="465.5" y="468" width="5" height="5" rx="1.200"/><rect x="949.5" y="631.3" width="5" height="5" rx="1.200"/><rect x="643.8" y="566.3" width="5" height="5" rx="1.200"/></g>
<rect x="493.3" y="509.8" width="19.2" height="10.2" fill="#a6a9c8"/><text x="502.9" y="518.3" font-family="Liberation Sans, sans-serif" font-size="9.500" fill="#fff" text-anchor="middle">E30</text>
<rect x="862.5" y="506.4" width="19.2" height="12" fill="#a6a9c8"/><text x="872.1" y="515.8" font-family="Liberation Sans, sans-serif" font-size="9.500" fill="#fff" text-anchor="middle">E30</text>
<rect x="1042.9" y="556.6" width="19" height="12" fill="#a6a9c8"/><text x="1052.4" y="566" font-family="Liberation Sans, sans-serif" font-size="9.500" fill="#fff" text-anchor="middle">E30</text>
<g font-family="Liberation Sans, sans-serif" font-size="12" fill="#2b2b2b" stroke="#fff" stroke-width="2.400" stroke-linejoin="round" paint-order="stroke" stroke-opacity=".85">
<text x="819" y="373" textLength="54" lengthAdjust="spacingAndGlyphs">Wągrowiec</text>
<text x="930.7" y="360.2" textLength="21.7" lengthAdjust="spacingAndGlyphs">Żnin</text>
<text x="963" y="418.6" textLength="39" lengthAdjust="spacingAndGlyphs">Mogilno</text>
<text x="898.3" y="454.5" textLength="40" lengthAdjust="spacingAndGlyphs">Gniezno</text>
<text x="753.8" y="421.2" textLength="41.4" lengthAdjust="spacingAndGlyphs">Oborniki</text>
<text x="779.6" y="495.2" textLength="34" lengthAdjust="spacingAndGlyphs">Poznań</text>
<text x="890.5" y="518.2" textLength="43.5" lengthAdjust="spacingAndGlyphs">Września</text>
<text x="952.6" y="528.5" textLength="33" lengthAdjust="spacingAndGlyphs">Słupca</text>
<text x="1022.6" y="546.9" textLength="29" lengthAdjust="spacingAndGlyphs">Konin</text>
<text x="811.3" y="546.9" textLength="95.7" lengthAdjust="spacingAndGlyphs">Środa Wielkopolska</text>
<text x="884" y="623.2" textLength="34.4" lengthAdjust="spacingAndGlyphs">Jarocin</text>
<text x="800" y="590" textLength="26" lengthAdjust="spacingAndGlyphs">Śrem</text>
<text x="727" y="588.2" textLength="39" lengthAdjust="spacingAndGlyphs">Kościan</text>
<text x="794.4" y="651.2" textLength="34.6" lengthAdjust="spacingAndGlyphs">Gostyń</text>
<text x="638.8" y="547.2" textLength="108.2" lengthAdjust="spacingAndGlyphs">Grodzisk Wielkopolski</text>
<text x="617.5" y="520.6" textLength="67.1" lengthAdjust="spacingAndGlyphs">Nowy Tomyśl</text>
<text x="625" y="580.2" textLength="44.7" lengthAdjust="spacingAndGlyphs">Wolsztyn</text>
<text x="516" y="541.2" textLength="55.3" lengthAdjust="spacingAndGlyphs">Świebodzin</text>
<text x="505.8" y="633.2" textLength="64.5" lengthAdjust="spacingAndGlyphs">Zielona Góra</text>
<text x="414" y="598.5" textLength="95.4" lengthAdjust="spacingAndGlyphs">Krosno Odrzańskie</text>
<text x="449" y="482.8" textLength="36" lengthAdjust="spacingAndGlyphs">Sulęcin</text>
<text x="440.5" y="398.2" textLength="37" lengthAdjust="spacingAndGlyphs">Torzym</text>
<text x="934" y="644.2" textLength="38" lengthAdjust="spacingAndGlyphs">Pleszew</text>
</g>
<path d="M514.2 523.8L520.8 526.7L533.1 527.9L541.8 526.1L548 529.2L562.8 519.9L565.3 512.5L569 507.5L581.4 501.3L595 498.2L606.1 496.4L630 487L650 468L662 458L674 454.6L700 455.8L714.2 456L732.6 466.3L751 467.8L758 470L763 485L765.8 500.4L789.7 498.5L798.4 499L815 501.5L833.2 509.8L855.5 485.2L883 492.6L907 509.4L926.8 515.1L945.2 524.3L963.7 529.9L982 538.1L1021.7 551" fill="none" stroke="#fffff0" stroke-width="7.400" stroke-linejoin="round" stroke-linecap="round" stroke-opacity=".55"/>
<path d="M514.2 523.8L520.8 526.7L533.1 527.9L541.8 526.1L548 529.2L562.8 519.9L565.3 512.5L569 507.5L581.4 501.3L595 498.2L606.1 496.4L630 487L650 468L662 458L674 454.6L700 455.8L714.2 456L732.6 466.3L751 467.8L758 470L763 485L765.8 500.4L789.7 498.5L798.4 499L815 501.5L833.2 509.8L855.5 485.2L883 492.6L907 509.4L926.8 515.1L945.2 524.3L963.7 529.9L982 538.1" fill="none" stroke="#2a12f4" stroke-width="6.200" stroke-linejoin="round" stroke-linecap="round" stroke-opacity=".96"/>
<path d="M982 538.1L1021.7 551" fill="none" stroke="#3a28f0" stroke-width="6.200" stroke-linecap="round" stroke-opacity=".85"/>
<circle cx="512.600" cy="522.600" r="1.300" fill="#4df0ff"/>
<g transform="translate(761.5 470) scale(0.945)"><ellipse cx="12" cy="-12" rx="10" ry="6" transform="rotate(-35 12 -12)" fill="#000" opacity=".42" filter="url(#sh)"/><use href="#pin" fill="#4088c8"/><circle cx="0" cy="-25.200" r="9.300" fill="#fff" stroke="#fff" stroke-opacity=".35" stroke-width="1"/></g>
<g transform="translate(762 472.5) scale(1)"><ellipse cx="12" cy="-12" rx="10" ry="6" transform="rotate(-35 12 -12)" fill="#000" opacity=".42" filter="url(#sh)"/><use href="#pin" fill="#8fa900"/><circle cx="0" cy="-25.200" r="9.300" fill="#fff" stroke="#fff" stroke-opacity=".35" stroke-width="1"/><text x="0" y="-20.700" font-family="Liberation Sans, sans-serif" font-size="12.500" fill="#222" text-anchor="middle">1</text></g>
<g transform="translate(761.5 486.3) scale(1)"><ellipse cx="12" cy="-12" rx="10" ry="6" transform="rotate(-35 12 -12)" fill="#000" opacity=".42" filter="url(#sh)"/><use href="#pin" fill="#8fa900"/><circle cx="0" cy="-25.200" r="9.300" fill="#fff" stroke="#fff" stroke-opacity=".35" stroke-width="1"/></g>
<g transform="translate(767.3 492.8) scale(1)"><ellipse cx="12" cy="-12" rx="10" ry="6" transform="rotate(-35 12 -12)" fill="#000" opacity=".42" filter="url(#sh)"/><use href="#pin" fill="#8fa900"/><circle cx="0" cy="-25.200" r="9.300" fill="#fff" stroke="#fff" stroke-opacity=".35" stroke-width="1"/></g>
<g transform="translate(765.9 499.4) scale(1)"><ellipse cx="12" cy="-12" rx="10" ry="6" transform="rotate(-35 12 -12)" fill="#000" opacity=".42" filter="url(#sh)"/><use href="#pin" fill="#8fa900"/><circle cx="0" cy="-25.200" r="9.300" fill="#fff" stroke="#fff" stroke-opacity=".35" stroke-width="1"/><text x="0" y="-20.700" font-family="Liberation Sans, sans-serif" font-size="12.500" fill="#222" text-anchor="middle">5</text></g>
<g transform="translate(714 456.1) scale(0.945)"><ellipse cx="12" cy="-12" rx="10" ry="6" transform="rotate(-35 12 -12)" fill="#000" opacity=".42" filter="url(#sh)"/><use href="#pin" fill="#f76b40"/><circle cx="0" cy="-25.200" r="9.300" fill="#fff" stroke="#fff" stroke-opacity=".35" stroke-width="1"/><text x="0" y="-20.700" font-family="Liberation Sans, sans-serif" font-size="12.500" fill="#222" text-anchor="middle">16</text></g>
<g transform="translate(520.1 525.5) scale(1)"><ellipse cx="12" cy="-12" rx="10" ry="6" transform="rotate(-35 12 -12)" fill="#000" opacity=".42" filter="url(#sh)"/><use href="#pin" fill="#8fa900"/><circle cx="0" cy="-25.200" r="9.300" fill="#fff" stroke="#fff" stroke-opacity=".35" stroke-width="1"/><text x="0" y="-20.700" font-family="Liberation Sans, sans-serif" font-size="12.500" fill="#222" text-anchor="middle">17</text></g>
<g transform="translate(534.5 526.6) scale(1)"><ellipse cx="12" cy="-12" rx="10" ry="6" transform="rotate(-35 12 -12)" fill="#000" opacity=".42" filter="url(#sh)"/><use href="#pin" fill="#8fa900"/><circle cx="0" cy="-25.200" r="9.300" fill="#fff" stroke="#fff" stroke-opacity=".35" stroke-width="1"/><text x="0" y="-20.700" font-family="Liberation Sans, sans-serif" font-size="12.500" fill="#222" text-anchor="middle">18</text></g>
<g transform="translate(855.7 485.3) scale(0.945)"><ellipse cx="12" cy="-12" rx="10" ry="6" transform="rotate(-35 12 -12)" fill="#000" opacity=".42" filter="url(#sh)"/><use href="#pin" fill="#4088c8"/><circle cx="0" cy="-25.200" r="9.300" fill="#fff" stroke="#fff" stroke-opacity=".35" stroke-width="1"/><text x="0" y="-20.700" font-family="Liberation Sans, sans-serif" font-size="12.500" fill="#222" text-anchor="middle">12</text></g>
<g transform="translate(887 496) scale(1)"><ellipse cx="12" cy="-12" rx="10" ry="6" transform="rotate(-35 12 -12)" fill="#000" opacity=".42" filter="url(#sh)"/><use href="#pin" fill="#8fa900"/><circle cx="0" cy="-25.200" r="9.300" fill="#fff" stroke="#fff" stroke-opacity=".35" stroke-width="1"/></g>
<g transform="translate(895.6 499) scale(1)"><ellipse cx="12" cy="-12" rx="10" ry="6" transform="rotate(-35 12 -12)" fill="#000" opacity=".42" filter="url(#sh)"/><use href="#pin" fill="#8fa900"/><circle cx="0" cy="-25.200" r="9.300" fill="#fff" stroke="#fff" stroke-opacity=".35" stroke-width="1"/></g>
<g transform="translate(896.9 499.5) scale(0.945)"><ellipse cx="12" cy="-12" rx="10" ry="6" transform="rotate(-35 12 -12)" fill="#000" opacity=".42" filter="url(#sh)"/><use href="#pin" fill="#4088c8"/><circle cx="0" cy="-25.200" r="9.300" fill="#fff" stroke="#fff" stroke-opacity=".35" stroke-width="1"/><text x="0" y="-20.700" font-family="Liberation Sans, sans-serif" font-size="12.500" fill="#222" text-anchor="middle">10</text></g>
<g transform="translate(908 509.8) scale(0.945)"><ellipse cx="12" cy="-12" rx="10" ry="6" transform="rotate(-35 12 -12)" fill="#000" opacity=".42" filter="url(#sh)"/><use href="#pin" fill="#4088c8"/><circle cx="0" cy="-25.200" r="9.300" fill="#fff" stroke="#fff" stroke-opacity=".35" stroke-width="1"/><text x="0" y="-20.700" font-family="Liberation Sans, sans-serif" font-size="12.500" fill="#222" text-anchor="middle">9</text></g>
<g transform="translate(983 536.8) scale(1)"><ellipse cx="12" cy="-12" rx="10" ry="6" transform="rotate(-35 12 -12)" fill="#000" opacity=".42" filter="url(#sh)"/><use href="#pin" fill="#8fa900"/><circle cx="0" cy="-25.200" r="9.300" fill="#fff" stroke="#fff" stroke-opacity=".35" stroke-width="1"/><text x="0" y="-20.700" font-family="Liberation Sans, sans-serif" font-size="12.500" fill="#222" text-anchor="middle">8</text></g>
<rect x="453" y="639" width="40" height="6.600" fill="#63fbff"/>
<rect x="493" y="639" width="40" height="6.600" fill="#0a94f5"/>
<rect x="533" y="639" width="40" height="6.600" fill="#3a10f0"/>
<rect x="573" y="639" width="40" height="6.600" fill="#8b129a"/>
<rect x="613" y="639" width="40" height="6.600" fill="#f5103f"/>
<g font-family="Liberation Sans, sans-serif" font-size="10" fill="#111"><text x="453" y="636.800">0</text><text x="493" y="636.800">40</text><text x="533" y="636.800">60</text><text x="573" y="636.800">90</text><text x="613" y="636.800">120</text></g>
</svg>
<div class="abs" style="left:458px;top:354px;width:26px;height:53px;background:#fff;border-radius:4px;box-shadow:0 1px 5px rgba(0,0,0,.55);z-index:5"><div class="abs" style="left:0;top:0;width:26px;height:26px;border-bottom:1px solid #ccc;font:bold 18px/26px 'Liberation Sans',sans-serif;text-align:center;color:#000">+</div><div class="abs" style="left:0;top:26px;width:26px;height:26px;font:bold 20px/27px 'Liberation Sans',sans-serif;text-align:center;color:#000">−</div></div>
<div class="abs" style="left:1005px;top:354px;width:36px;height:36px;background:#fff;border-radius:4px;box-shadow:0 1px 4px rgba(0,0,0,.35)"><svg class="abs" style="left:0;top:0" width="36" height="36" viewBox="0 0 36 36"><defs><linearGradient id="lg" x1="0" y1="0" x2="0" y2="1"><stop offset="0" stop-color="#e6e6e6"/><stop offset="1" stop-color="#a4a4a4"/></linearGradient></defs><g fill="url(#lg)" stroke="#7c7c7c" stroke-width=".7" stroke-linejoin="round"><path d="M18 14.600L5.600 22.100 18 29.600 30.400 22.100z"/><path d="M18 9.900L5.600 17.400 18 24.900 30.400 17.400z"/><path d="M18 5.200L5.600 12.700 18 20.200 30.400 12.700z"/></g></svg></div>
<div class="abs" style="left:932px;top:635px;width:117px;height:15px;background:rgba(255,255,255,.72);font-size:11px;line-height:16px;color:#333;white-space:nowrap;padding-left:5.400px"><span style="color:#0078a8">Leaflet</span> | Gurtam Maps</div>
<!--MAP-END-->
<div class="abs" id="tip" style="left:482px;top:338px;width:192px;height:158px;background:#fff;border:1px solid #c3d3ea;z-index:30;font-size:12px;line-height:14px;white-space:nowrap">
<div class="abs" style="left:5px;top:8px;color:#111"><b>23-06-2016</b> 09:58 – 12:11</div>
<svg class="abs" style="left:36px;top:43px" width="17.500" height="16.500" viewBox="0 0 18 17" preserveAspectRatio="none"><path d="M9 .8l2.500 5.300 5.800.7-4.300 4 1.100 5.700L9 13.700 3.900 16.500 5 10.800.7 6.800l5.800-.7z" fill="#fbd00f" stroke="#9c8618" stroke-width=".8" stroke-linejoin="round"/></svg>
<div class="abs" style="left:58px;top:39px;font-size:20px;line-height:23px;font-weight:bold;letter-spacing:-.5px;color:#111">5.9</div>
<svg class="abs" style="left:123px;top:42px" width="17" height="18" viewBox="0 0 17 18"><rect x=".4" y=".4" width="10" height="12.500" rx="1" fill="#ee1c25" stroke="#c0151d" stroke-width=".8"/><rect x="6.400" y="4.400" width="10" height="13" rx="1" fill="#ffd400" stroke="#77778a" stroke-width=".8"/></svg>
<div class="abs" style="left:144px;top:39px;font-size:20px;line-height:23px;font-weight:bold;color:#111">3</div>
<div class="abs" style="left:5px;top:81px;color:#4188cb"><b>5</b></div><div class="abs" style="left:22px;top:81px;color:#4188cb">Acceleration</div>
<div class="abs" style="left:5px;top:98px;color:#e96c55"><b>1</b></div><div class="abs" style="left:22px;top:98px;color:#e96c55">Braking</div>
<div class="abs" style="left:5px;top:115px;color:#8a9a28"><b>13</b></div><div class="abs" style="left:28px;top:115px;color:#8a9a28">Speeding</div>
<div class="abs" style="left:5px;top:134px;color:#222">Trip length 390.2 km, 02:13:17</div>
</div>
<div id="frame"></div>
</body>
</html>
